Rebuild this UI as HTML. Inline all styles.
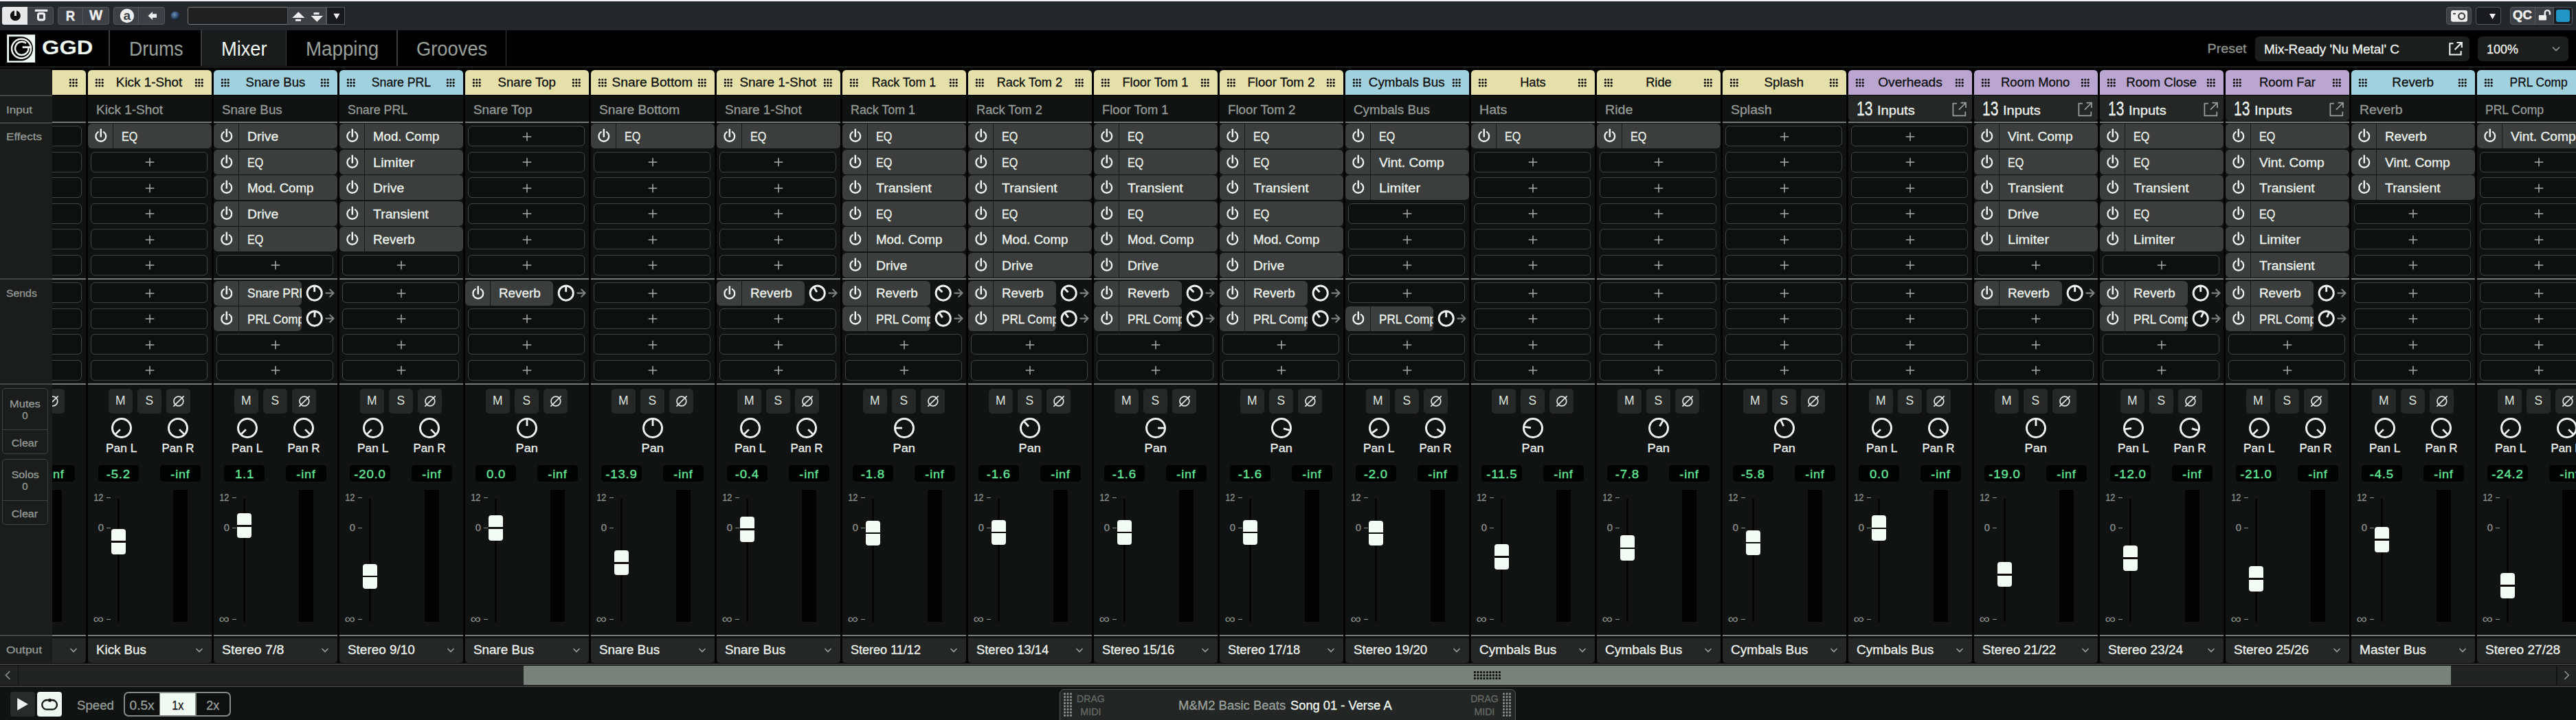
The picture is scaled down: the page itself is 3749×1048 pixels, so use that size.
<!DOCTYPE html><html><head><meta charset="utf-8"><style>
html,body{margin:0;padding:0;background:#000;}
body{width:3749px;height:1048px;position:relative;overflow:hidden;font-family:"Liberation Sans",sans-serif;}
.a{position:absolute;}
.t{position:absolute;white-space:nowrap;}
.m{-webkit-text-stroke:0.3px currentColor;}
</style></head><body>
<div class="a" style="left:0px;top:0px;width:3749px;height:2.2px;background:#f3eff2;"></div>
<div class="a" style="left:0px;top:2.2px;width:3749px;height:41.5px;background:#23272a;"></div>
<div class="a" style="left:0px;top:43.7px;width:3749px;height:52.5px;background:#000;"></div>
<div class="a" style="left:0;top:0;width:3749px;height:1048px;clip-path:inset(96px 0 83px 76px);">
<div class="a" style="left:76px;top:96.2px;width:3673px;height:872.8px;background:#030303;"></div>
<div class="a" style="left:-55.5px;top:138.75px;width:180.5px;height:826px;background:#111312;"></div>
<div class="a" style="left:-55.5px;top:102.2px;width:180.5px;height:36.3px;background:#e5dfa9;border-radius:5.5px 5.5px 0 0;"></div>
<svg class="a" style="left:-55.5px;top:102.2px;" width="180.5" height="36.3" viewBox="0 0 180.5 36.3"><circle cx="12.4" cy="14" r="1.6" fill="#111"/><circle cx="16.8" cy="14" r="1.6" fill="#111"/><circle cx="21.2" cy="14" r="1.6" fill="#111"/><circle cx="12.4" cy="18.4" r="1.6" fill="#111"/><circle cx="16.8" cy="18.4" r="1.6" fill="#111"/><circle cx="21.2" cy="18.4" r="1.6" fill="#111"/><circle cx="12.4" cy="22.8" r="1.6" fill="#111"/><circle cx="16.8" cy="22.8" r="1.6" fill="#111"/><circle cx="21.2" cy="22.8" r="1.6" fill="#111"/><circle cx="157.4" cy="14" r="1.6" fill="#111"/><circle cx="161.8" cy="14" r="1.6" fill="#111"/><circle cx="166.2" cy="14" r="1.6" fill="#111"/><circle cx="157.4" cy="18.4" r="1.6" fill="#111"/><circle cx="161.8" cy="18.4" r="1.6" fill="#111"/><circle cx="166.2" cy="18.4" r="1.6" fill="#111"/><circle cx="157.4" cy="22.8" r="1.6" fill="#111"/><circle cx="161.8" cy="22.8" r="1.6" fill="#111"/><circle cx="166.2" cy="22.8" r="1.6" fill="#111"/></svg>
<div class="t m" style="left:17.12px;top:110.51px;font-size:18.4px;line-height:18.4px;color:#0d0f0e;transform:scaleX(0.9917);transform-origin:17.38px 0;">Kick</div>
<div class="t m" style="left:-43px;top:151.7px;font-size:17.7px;line-height:17.7px;color:#959b97;transform:scaleX(1.1197);transform-origin:0 0;">Kick</div>
<div class="a" style="left:-55.5px;top:177px;width:180.5px;height:2.25px;background:#737a75;"></div>
<div class="a" style="left:-50.8px;top:183.35px;width:170.2px;height:30px;background:#0e100f;border-radius:6px;box-sizing:border-box;border:1.8px solid #404543;"></div>
<svg class="a" style="left:24.5px;top:188.75px;" width="20" height="20" viewBox="0 0 20 20"><path d="M10 3.7 V16.3 M3.7 10 H16.3" stroke="#a7aca8" stroke-width="1.5"/></svg>
<div class="a" style="left:-50.8px;top:220.85px;width:170.2px;height:30px;background:#0e100f;border-radius:6px;box-sizing:border-box;border:1.8px solid #404543;"></div>
<svg class="a" style="left:24.5px;top:226.25px;" width="20" height="20" viewBox="0 0 20 20"><path d="M10 3.7 V16.3 M3.7 10 H16.3" stroke="#a7aca8" stroke-width="1.5"/></svg>
<div class="a" style="left:-50.8px;top:258.35px;width:170.2px;height:30px;background:#0e100f;border-radius:6px;box-sizing:border-box;border:1.8px solid #404543;"></div>
<svg class="a" style="left:24.5px;top:263.75px;" width="20" height="20" viewBox="0 0 20 20"><path d="M10 3.7 V16.3 M3.7 10 H16.3" stroke="#a7aca8" stroke-width="1.5"/></svg>
<div class="a" style="left:-50.8px;top:295.85px;width:170.2px;height:30px;background:#0e100f;border-radius:6px;box-sizing:border-box;border:1.8px solid #404543;"></div>
<svg class="a" style="left:24.5px;top:301.25px;" width="20" height="20" viewBox="0 0 20 20"><path d="M10 3.7 V16.3 M3.7 10 H16.3" stroke="#a7aca8" stroke-width="1.5"/></svg>
<div class="a" style="left:-50.8px;top:333.35px;width:170.2px;height:30px;background:#0e100f;border-radius:6px;box-sizing:border-box;border:1.8px solid #404543;"></div>
<svg class="a" style="left:24.5px;top:338.75px;" width="20" height="20" viewBox="0 0 20 20"><path d="M10 3.7 V16.3 M3.7 10 H16.3" stroke="#a7aca8" stroke-width="1.5"/></svg>
<div class="a" style="left:-50.8px;top:370.85px;width:170.2px;height:30px;background:#0e100f;border-radius:6px;box-sizing:border-box;border:1.8px solid #404543;"></div>
<svg class="a" style="left:24.5px;top:376.25px;" width="20" height="20" viewBox="0 0 20 20"><path d="M10 3.7 V16.3 M3.7 10 H16.3" stroke="#a7aca8" stroke-width="1.5"/></svg>
<div class="a" style="left:-55.5px;top:405px;width:180.5px;height:2.1px;background:#737a75;"></div>
<div class="a" style="left:-50.8px;top:411.35px;width:170.2px;height:30px;background:#0e100f;border-radius:6px;box-sizing:border-box;border:1.8px solid #404543;"></div>
<svg class="a" style="left:24.5px;top:416.75px;" width="20" height="20" viewBox="0 0 20 20"><path d="M10 3.7 V16.3 M3.7 10 H16.3" stroke="#a7aca8" stroke-width="1.5"/></svg>
<div class="a" style="left:-50.8px;top:448.85px;width:170.2px;height:30px;background:#0e100f;border-radius:6px;box-sizing:border-box;border:1.8px solid #404543;"></div>
<svg class="a" style="left:24.5px;top:454.25px;" width="20" height="20" viewBox="0 0 20 20"><path d="M10 3.7 V16.3 M3.7 10 H16.3" stroke="#a7aca8" stroke-width="1.5"/></svg>
<div class="a" style="left:-50.8px;top:486.35px;width:170.2px;height:30px;background:#0e100f;border-radius:6px;box-sizing:border-box;border:1.8px solid #404543;"></div>
<svg class="a" style="left:24.5px;top:491.75px;" width="20" height="20" viewBox="0 0 20 20"><path d="M10 3.7 V16.3 M3.7 10 H16.3" stroke="#a7aca8" stroke-width="1.5"/></svg>
<div class="a" style="left:-50.8px;top:523.85px;width:170.2px;height:30px;background:#0e100f;border-radius:6px;box-sizing:border-box;border:1.8px solid #404543;"></div>
<svg class="a" style="left:24.5px;top:529.25px;" width="20" height="20" viewBox="0 0 20 20"><path d="M10 3.7 V16.3 M3.7 10 H16.3" stroke="#a7aca8" stroke-width="1.5"/></svg>
<div class="a" style="left:-55.5px;top:558px;width:180.5px;height:2.1px;background:#737a75;"></div>
<div class="a" style="left:-25.5px;top:566px;width:35.5px;height:35.5px;background:#262827;border-radius:5px;"></div>
<div class="a" style="left:16.5px;top:566px;width:35.5px;height:35.5px;background:#262827;border-radius:5px;"></div>
<div class="a" style="left:58.7px;top:566px;width:35.5px;height:35.5px;background:#262827;border-radius:5px;"></div>
<div class="t" style="left:-15.04px;top:574.57px;font-size:17.5px;line-height:17.5px;color:#dde3de;">M</div>
<div class="t" style="left:28.51px;top:574.57px;font-size:17.5px;line-height:17.5px;color:#dde3de;">S</div>
<svg class="a" style="left:58.7px;top:566px;" width="35.5" height="35.5" viewBox="0 0 35.5 35.5"><circle cx="17.9" cy="18" r="6.9" fill="none" stroke="#dde3de" stroke-width="1.7"/><line x1="10.4" y1="25.6" x2="25.7" y2="10.3" stroke="#dde3de" stroke-width="1.7"/></svg>
<svg class="a" style="left:17.5px;top:605.9px;" width="34" height="34" viewBox="0 0 34 34"><circle cx="17" cy="17" r="13.5" fill="none" stroke="#eef3ef" stroke-width="3"/><line x1="17" y1="14" x2="17" y2="4.8" stroke="#eef3ef" stroke-width="2.8"/></svg>
<div class="t m" style="left:19.73px;top:644.53px;font-size:16.6px;line-height:16.6px;color:#eef3ef;transform:scaleX(1.0949);transform-origin:14.77px 0;">Pan</div>
<div class="a" style="left:-40.5px;top:677px;width:59.8px;height:23.8px;background:#010202;border-radius:5px;"></div>
<div class="a" style="left:49.5px;top:677px;width:59.8px;height:23.8px;background:#010202;border-radius:5px;"></div>
<div class="t m" style="left:-23.67px;top:681.82px;font-size:17.2px;line-height:17.2px;color:#64ec9a;letter-spacing:0.75px;transform:scaleX(1.0800);transform-origin:13.07px 0;">-inf</div>
<div class="t m" style="left:66.33px;top:681.82px;font-size:17.2px;line-height:17.2px;color:#64ec9a;letter-spacing:0.75px;transform:scaleX(1.0500);transform-origin:13.07px 0;">-inf</div>
<div class="t m" style="left:-48.56px;top:717.16px;font-size:14.8px;line-height:14.8px;color:#8b918d;transform:scaleX(0.8687);transform-origin:16.46px 0;">12</div>
<div class="t m" style="left:-40.33px;top:760.86px;font-size:14.8px;line-height:14.8px;color:#8b918d;">0</div>
<div class="t" style="left:-44.53px;top:892.35px;font-size:18px;line-height:18px;color:#8b918d;transform:scaleX(1.1923);transform-origin:12.83px 0;">∞</div>
<div class="a" style="left:-28.5px;top:723.85px;width:6px;height:1.5px;background:#8b918d;"></div>
<div class="a" style="left:-28.5px;top:767.55px;width:6px;height:1.5px;background:#8b918d;"></div>
<div class="a" style="left:-28.5px;top:900.85px;width:6px;height:1.5px;background:#8b918d;"></div>
<div class="a" style="left:-12.2px;top:726px;width:3px;height:178.5px;background:#050505;"></div>
<div class="a" style="left:69.2px;top:713px;width:20.9px;height:191.5px;background:#030303;"></div>
<div class="a" style="left:-20.9px;top:781.4px;width:20.7px;height:36.8px;background:#f2fbf4;border-radius:4px;"></div>
<div class="a" style="left:-20.9px;top:798.7px;width:20.7px;height:2.6px;background:#0c0d0c;"></div>
<div class="a" style="left:-55.5px;top:924.3px;width:180.5px;height:2.1px;background:#737a75;"></div>
<div class="a" style="left:-55.5px;top:928.8px;width:180.5px;height:36px;background:#252726;border-radius:0 0 6px 6px;"></div>
<svg class="a" style="left:98.5px;top:939px;" width="16" height="14" viewBox="0 0 16 14"><path d="M3.4 5 L8 9.6 L12.6 5" fill="none" stroke="#9ba19d" stroke-width="1.6"/></svg>
<div class="a" style="left:127.5px;top:138.75px;width:180.5px;height:826px;background:#111312;"></div>
<div class="a" style="left:127.5px;top:102.2px;width:180.5px;height:36.3px;background:#e5dfa9;border-radius:5.5px 5.5px 0 0;"></div>
<svg class="a" style="left:127.5px;top:102.2px;" width="180.5" height="36.3" viewBox="0 0 180.5 36.3"><circle cx="12.4" cy="14" r="1.6" fill="#111"/><circle cx="16.8" cy="14" r="1.6" fill="#111"/><circle cx="21.2" cy="14" r="1.6" fill="#111"/><circle cx="12.4" cy="18.4" r="1.6" fill="#111"/><circle cx="16.8" cy="18.4" r="1.6" fill="#111"/><circle cx="21.2" cy="18.4" r="1.6" fill="#111"/><circle cx="12.4" cy="22.8" r="1.6" fill="#111"/><circle cx="16.8" cy="22.8" r="1.6" fill="#111"/><circle cx="21.2" cy="22.8" r="1.6" fill="#111"/><circle cx="157.4" cy="14" r="1.6" fill="#111"/><circle cx="161.8" cy="14" r="1.6" fill="#111"/><circle cx="166.2" cy="14" r="1.6" fill="#111"/><circle cx="157.4" cy="18.4" r="1.6" fill="#111"/><circle cx="161.8" cy="18.4" r="1.6" fill="#111"/><circle cx="166.2" cy="18.4" r="1.6" fill="#111"/><circle cx="157.4" cy="22.8" r="1.6" fill="#111"/><circle cx="161.8" cy="22.8" r="1.6" fill="#111"/><circle cx="166.2" cy="22.8" r="1.6" fill="#111"/></svg>
<div class="t m" style="left:170.46px;top:110.51px;font-size:18.4px;line-height:18.4px;color:#0d0f0e;transform:scaleX(1.0251);transform-origin:47.04px 0;">Kick 1-Shot</div>
<div class="t m" style="left:140px;top:151.7px;font-size:17.7px;line-height:17.7px;color:#959b97;transform:scaleX(1.0736);transform-origin:0 0;">Kick 1-Shot</div>
<div class="a" style="left:127.5px;top:177px;width:180.5px;height:2.25px;background:#737a75;"></div>
<div class="a" style="left:127.5px;top:180.4px;width:180.5px;height:36.1px;background:#3b3e3c;border-radius:6px;"></div>
<div class="a" style="left:164.1px;top:180.4px;width:1.3px;height:36.1px;background:#171918;"></div>
<svg class="a" style="left:127.5px;top:180.4px;" width="36" height="36" viewBox="0 0 36 36"><path d="M14.77 12.14 A7.4 7.4 0 1 0 22.83 12.14" fill="none" stroke="#eef3ef" stroke-width="2.3" stroke-linecap="round"/><line x1="18.8" y1="7.55" x2="18.8" y2="19.65" stroke="#eef3ef" stroke-width="2.5" stroke-linecap="butt"/></svg>
<div class="t m" style="left:177px;top:191.04px;font-size:17.6px;line-height:17.6px;color:#eef3ef;transform:scaleX(0.9157);transform-origin:0 0;">EQ</div>
<div class="a" style="left:132.2px;top:220.85px;width:170.2px;height:30px;background:#0e100f;border-radius:6px;box-sizing:border-box;border:1.8px solid #404543;"></div>
<svg class="a" style="left:207.5px;top:226.25px;" width="20" height="20" viewBox="0 0 20 20"><path d="M10 3.7 V16.3 M3.7 10 H16.3" stroke="#a7aca8" stroke-width="1.5"/></svg>
<div class="a" style="left:132.2px;top:258.35px;width:170.2px;height:30px;background:#0e100f;border-radius:6px;box-sizing:border-box;border:1.8px solid #404543;"></div>
<svg class="a" style="left:207.5px;top:263.75px;" width="20" height="20" viewBox="0 0 20 20"><path d="M10 3.7 V16.3 M3.7 10 H16.3" stroke="#a7aca8" stroke-width="1.5"/></svg>
<div class="a" style="left:132.2px;top:295.85px;width:170.2px;height:30px;background:#0e100f;border-radius:6px;box-sizing:border-box;border:1.8px solid #404543;"></div>
<svg class="a" style="left:207.5px;top:301.25px;" width="20" height="20" viewBox="0 0 20 20"><path d="M10 3.7 V16.3 M3.7 10 H16.3" stroke="#a7aca8" stroke-width="1.5"/></svg>
<div class="a" style="left:132.2px;top:333.35px;width:170.2px;height:30px;background:#0e100f;border-radius:6px;box-sizing:border-box;border:1.8px solid #404543;"></div>
<svg class="a" style="left:207.5px;top:338.75px;" width="20" height="20" viewBox="0 0 20 20"><path d="M10 3.7 V16.3 M3.7 10 H16.3" stroke="#a7aca8" stroke-width="1.5"/></svg>
<div class="a" style="left:132.2px;top:370.85px;width:170.2px;height:30px;background:#0e100f;border-radius:6px;box-sizing:border-box;border:1.8px solid #404543;"></div>
<svg class="a" style="left:207.5px;top:376.25px;" width="20" height="20" viewBox="0 0 20 20"><path d="M10 3.7 V16.3 M3.7 10 H16.3" stroke="#a7aca8" stroke-width="1.5"/></svg>
<div class="a" style="left:127.5px;top:405px;width:180.5px;height:2.1px;background:#737a75;"></div>
<div class="a" style="left:132.2px;top:411.35px;width:170.2px;height:30px;background:#0e100f;border-radius:6px;box-sizing:border-box;border:1.8px solid #404543;"></div>
<svg class="a" style="left:207.5px;top:416.75px;" width="20" height="20" viewBox="0 0 20 20"><path d="M10 3.7 V16.3 M3.7 10 H16.3" stroke="#a7aca8" stroke-width="1.5"/></svg>
<div class="a" style="left:132.2px;top:448.85px;width:170.2px;height:30px;background:#0e100f;border-radius:6px;box-sizing:border-box;border:1.8px solid #404543;"></div>
<svg class="a" style="left:207.5px;top:454.25px;" width="20" height="20" viewBox="0 0 20 20"><path d="M10 3.7 V16.3 M3.7 10 H16.3" stroke="#a7aca8" stroke-width="1.5"/></svg>
<div class="a" style="left:132.2px;top:486.35px;width:170.2px;height:30px;background:#0e100f;border-radius:6px;box-sizing:border-box;border:1.8px solid #404543;"></div>
<svg class="a" style="left:207.5px;top:491.75px;" width="20" height="20" viewBox="0 0 20 20"><path d="M10 3.7 V16.3 M3.7 10 H16.3" stroke="#a7aca8" stroke-width="1.5"/></svg>
<div class="a" style="left:132.2px;top:523.85px;width:170.2px;height:30px;background:#0e100f;border-radius:6px;box-sizing:border-box;border:1.8px solid #404543;"></div>
<svg class="a" style="left:207.5px;top:529.25px;" width="20" height="20" viewBox="0 0 20 20"><path d="M10 3.7 V16.3 M3.7 10 H16.3" stroke="#a7aca8" stroke-width="1.5"/></svg>
<div class="a" style="left:127.5px;top:558px;width:180.5px;height:2.1px;background:#737a75;"></div>
<div class="a" style="left:157.5px;top:566px;width:35.5px;height:35.5px;background:#262827;border-radius:5px;"></div>
<div class="a" style="left:199.5px;top:566px;width:35.5px;height:35.5px;background:#262827;border-radius:5px;"></div>
<div class="a" style="left:241.7px;top:566px;width:35.5px;height:35.5px;background:#262827;border-radius:5px;"></div>
<div class="t" style="left:167.96px;top:574.57px;font-size:17.5px;line-height:17.5px;color:#dde3de;">M</div>
<div class="t" style="left:211.51px;top:574.57px;font-size:17.5px;line-height:17.5px;color:#dde3de;">S</div>
<svg class="a" style="left:241.7px;top:566px;" width="35.5" height="35.5" viewBox="0 0 35.5 35.5"><circle cx="17.9" cy="18" r="6.9" fill="none" stroke="#dde3de" stroke-width="1.7"/><line x1="10.4" y1="25.6" x2="25.7" y2="10.3" stroke="#dde3de" stroke-width="1.7"/></svg>
<svg class="a" style="left:160px;top:605.9px;" width="34" height="34" viewBox="0 0 34 34"><circle cx="17" cy="17" r="13.5" fill="none" stroke="#eef3ef" stroke-width="3"/><line x1="14.88" y1="19.12" x2="8.37" y2="25.63" stroke="#eef3ef" stroke-width="2.8"/></svg>
<div class="t m" style="left:155.31px;top:644.53px;font-size:16.6px;line-height:16.6px;color:#eef3ef;transform:scaleX(1.0438);transform-origin:21.69px 0;">Pan L</div>
<svg class="a" style="left:242.2px;top:605.9px;" width="34" height="34" viewBox="0 0 34 34"><circle cx="17" cy="17" r="13.5" fill="none" stroke="#eef3ef" stroke-width="3"/><line x1="19.12" y1="19.12" x2="25.63" y2="25.63" stroke="#eef3ef" stroke-width="2.8"/></svg>
<div class="t m" style="left:236.13px;top:644.53px;font-size:16.6px;line-height:16.6px;color:#eef3ef;transform:scaleX(1.0195);transform-origin:23.07px 0;">Pan R</div>
<div class="a" style="left:142.5px;top:677px;width:59.8px;height:23.8px;background:#010202;border-radius:5px;"></div>
<div class="a" style="left:232.5px;top:677px;width:59.8px;height:23.8px;background:#010202;border-radius:5px;"></div>
<div class="t m" style="left:156.46px;top:681.82px;font-size:17.2px;line-height:17.2px;color:#64ec9a;letter-spacing:0.75px;transform:scaleX(1.0800);transform-origin:15.94px 0;">-5.2</div>
<div class="t m" style="left:249.33px;top:681.82px;font-size:17.2px;line-height:17.2px;color:#64ec9a;letter-spacing:0.75px;transform:scaleX(1.0500);transform-origin:13.07px 0;">-inf</div>
<div class="t m" style="left:134.44px;top:717.16px;font-size:14.8px;line-height:14.8px;color:#8b918d;transform:scaleX(0.8687);transform-origin:16.46px 0;">12</div>
<div class="t m" style="left:142.67px;top:760.86px;font-size:14.8px;line-height:14.8px;color:#8b918d;">0</div>
<div class="t" style="left:138.47px;top:892.35px;font-size:18px;line-height:18px;color:#8b918d;transform:scaleX(1.1923);transform-origin:12.83px 0;">∞</div>
<div class="a" style="left:154.5px;top:723.85px;width:6px;height:1.5px;background:#8b918d;"></div>
<div class="a" style="left:154.5px;top:767.55px;width:6px;height:1.5px;background:#8b918d;"></div>
<div class="a" style="left:154.5px;top:900.85px;width:6px;height:1.5px;background:#8b918d;"></div>
<div class="a" style="left:170.8px;top:726px;width:3px;height:178.5px;background:#050505;"></div>
<div class="a" style="left:252.2px;top:713px;width:20.9px;height:191.5px;background:#030303;"></div>
<div class="a" style="left:162.1px;top:769.9px;width:20.7px;height:36.8px;background:#f2fbf4;border-radius:4px;"></div>
<div class="a" style="left:162.1px;top:787.2px;width:20.7px;height:2.6px;background:#0c0d0c;"></div>
<div class="a" style="left:127.5px;top:924.3px;width:180.5px;height:2.1px;background:#737a75;"></div>
<div class="a" style="left:127.5px;top:928.8px;width:180.5px;height:36px;background:#252726;border-radius:0 0 6px 6px;"></div>
<div class="t m" style="left:139.8px;top:936.64px;font-size:18.6px;line-height:18.6px;color:#eef3ef;transform:scaleX(1.0065);transform-origin:0 0;">Kick Bus</div>
<svg class="a" style="left:281.5px;top:939px;" width="16" height="14" viewBox="0 0 16 14"><path d="M3.4 5 L8 9.6 L12.6 5" fill="none" stroke="#9ba19d" stroke-width="1.6"/></svg>
<div class="a" style="left:310.5px;top:138.75px;width:180.5px;height:826px;background:#111312;"></div>
<div class="a" style="left:310.5px;top:102.2px;width:180.5px;height:36.3px;background:#a1d0df;border-radius:5.5px 5.5px 0 0;"></div>
<svg class="a" style="left:310.5px;top:102.2px;" width="180.5" height="36.3" viewBox="0 0 180.5 36.3"><circle cx="12.4" cy="14" r="1.6" fill="#111"/><circle cx="16.8" cy="14" r="1.6" fill="#111"/><circle cx="21.2" cy="14" r="1.6" fill="#111"/><circle cx="12.4" cy="18.4" r="1.6" fill="#111"/><circle cx="16.8" cy="18.4" r="1.6" fill="#111"/><circle cx="21.2" cy="18.4" r="1.6" fill="#111"/><circle cx="12.4" cy="22.8" r="1.6" fill="#111"/><circle cx="16.8" cy="22.8" r="1.6" fill="#111"/><circle cx="21.2" cy="22.8" r="1.6" fill="#111"/><circle cx="157.4" cy="14" r="1.6" fill="#111"/><circle cx="161.8" cy="14" r="1.6" fill="#111"/><circle cx="166.2" cy="14" r="1.6" fill="#111"/><circle cx="157.4" cy="18.4" r="1.6" fill="#111"/><circle cx="161.8" cy="18.4" r="1.6" fill="#111"/><circle cx="166.2" cy="18.4" r="1.6" fill="#111"/><circle cx="157.4" cy="22.8" r="1.6" fill="#111"/><circle cx="161.8" cy="22.8" r="1.6" fill="#111"/><circle cx="166.2" cy="22.8" r="1.6" fill="#111"/></svg>
<div class="t m" style="left:357.54px;top:110.51px;font-size:18.4px;line-height:18.4px;color:#0d0f0e;transform:scaleX(1.0098);transform-origin:42.96px 0;">Snare Bus</div>
<div class="t m" style="left:323px;top:151.7px;font-size:17.7px;line-height:17.7px;color:#959b97;transform:scaleX(1.0622);transform-origin:0 0;">Snare Bus</div>
<div class="a" style="left:310.5px;top:177px;width:180.5px;height:2.25px;background:#737a75;"></div>
<div class="a" style="left:310.5px;top:180.4px;width:180.5px;height:36.1px;background:#3b3e3c;border-radius:6px;"></div>
<div class="a" style="left:347.1px;top:180.4px;width:1.3px;height:36.1px;background:#171918;"></div>
<svg class="a" style="left:310.5px;top:180.4px;" width="36" height="36" viewBox="0 0 36 36"><path d="M14.77 12.14 A7.4 7.4 0 1 0 22.83 12.14" fill="none" stroke="#eef3ef" stroke-width="2.3" stroke-linecap="round"/><line x1="18.8" y1="7.55" x2="18.8" y2="19.65" stroke="#eef3ef" stroke-width="2.5" stroke-linecap="butt"/></svg>
<div class="t m" style="left:360px;top:191.04px;font-size:17.6px;line-height:17.6px;color:#eef3ef;transform:scaleX(1.0998);transform-origin:0 0;">Drive</div>
<div class="a" style="left:310.5px;top:217.9px;width:180.5px;height:36.1px;background:#3b3e3c;border-radius:6px;"></div>
<div class="a" style="left:347.1px;top:217.9px;width:1.3px;height:36.1px;background:#171918;"></div>
<svg class="a" style="left:310.5px;top:217.9px;" width="36" height="36" viewBox="0 0 36 36"><path d="M14.77 12.14 A7.4 7.4 0 1 0 22.83 12.14" fill="none" stroke="#eef3ef" stroke-width="2.3" stroke-linecap="round"/><line x1="18.8" y1="7.55" x2="18.8" y2="19.65" stroke="#eef3ef" stroke-width="2.5" stroke-linecap="butt"/></svg>
<div class="t m" style="left:360px;top:228.54px;font-size:17.6px;line-height:17.6px;color:#eef3ef;transform:scaleX(0.9157);transform-origin:0 0;">EQ</div>
<div class="a" style="left:310.5px;top:255.4px;width:180.5px;height:36.1px;background:#3b3e3c;border-radius:6px;"></div>
<div class="a" style="left:347.1px;top:255.4px;width:1.3px;height:36.1px;background:#171918;"></div>
<svg class="a" style="left:310.5px;top:255.4px;" width="36" height="36" viewBox="0 0 36 36"><path d="M14.77 12.14 A7.4 7.4 0 1 0 22.83 12.14" fill="none" stroke="#eef3ef" stroke-width="2.3" stroke-linecap="round"/><line x1="18.8" y1="7.55" x2="18.8" y2="19.65" stroke="#eef3ef" stroke-width="2.5" stroke-linecap="butt"/></svg>
<div class="t m" style="left:360px;top:266.04px;font-size:17.6px;line-height:17.6px;color:#eef3ef;transform:scaleX(1.0599);transform-origin:0 0;">Mod. Comp</div>
<div class="a" style="left:310.5px;top:292.9px;width:180.5px;height:36.1px;background:#3b3e3c;border-radius:6px;"></div>
<div class="a" style="left:347.1px;top:292.9px;width:1.3px;height:36.1px;background:#171918;"></div>
<svg class="a" style="left:310.5px;top:292.9px;" width="36" height="36" viewBox="0 0 36 36"><path d="M14.77 12.14 A7.4 7.4 0 1 0 22.83 12.14" fill="none" stroke="#eef3ef" stroke-width="2.3" stroke-linecap="round"/><line x1="18.8" y1="7.55" x2="18.8" y2="19.65" stroke="#eef3ef" stroke-width="2.5" stroke-linecap="butt"/></svg>
<div class="t m" style="left:360px;top:303.54px;font-size:17.6px;line-height:17.6px;color:#eef3ef;transform:scaleX(1.0998);transform-origin:0 0;">Drive</div>
<div class="a" style="left:310.5px;top:330.4px;width:180.5px;height:36.1px;background:#3b3e3c;border-radius:6px;"></div>
<div class="a" style="left:347.1px;top:330.4px;width:1.3px;height:36.1px;background:#171918;"></div>
<svg class="a" style="left:310.5px;top:330.4px;" width="36" height="36" viewBox="0 0 36 36"><path d="M14.77 12.14 A7.4 7.4 0 1 0 22.83 12.14" fill="none" stroke="#eef3ef" stroke-width="2.3" stroke-linecap="round"/><line x1="18.8" y1="7.55" x2="18.8" y2="19.65" stroke="#eef3ef" stroke-width="2.5" stroke-linecap="butt"/></svg>
<div class="t m" style="left:360px;top:341.04px;font-size:17.6px;line-height:17.6px;color:#eef3ef;transform:scaleX(0.9157);transform-origin:0 0;">EQ</div>
<div class="a" style="left:315.2px;top:370.85px;width:170.2px;height:30px;background:#0e100f;border-radius:6px;box-sizing:border-box;border:1.8px solid #404543;"></div>
<svg class="a" style="left:390.5px;top:376.25px;" width="20" height="20" viewBox="0 0 20 20"><path d="M10 3.7 V16.3 M3.7 10 H16.3" stroke="#a7aca8" stroke-width="1.5"/></svg>
<div class="a" style="left:310.5px;top:405px;width:180.5px;height:2.1px;background:#737a75;"></div>
<div class="a" style="left:310.5px;top:408.75px;width:128.8px;height:35.75px;background:#3b3e3c;border-radius:6px;overflow:hidden;">
<div class="a" style="left:36.6px;top:0;width:1.3px;height:36px;background:#171918"></div>
<svg class="a" style="left:0;top:0" width="36" height="36"><path d="M14.77 11.89 A7.4 7.4 0 1 0 22.83 11.89" fill="none" stroke="#eef3ef" stroke-width="2.3" stroke-linecap="round"/><line x1="18.8" y1="7.3" x2="18.8" y2="19.4" stroke="#eef3ef" stroke-width="2.5" stroke-linecap="butt"/></svg>
<div class="t m" style="left:49.5px;top:10.29px;font-size:17.6px;line-height:17.6px;color:#eef3ef;transform:scaleX(0.9908);transform-origin:0 0;">Snare PRL</div>
</div>
<svg class="a" style="left:441.5px;top:408.75px;" width="50" height="36" viewBox="0 0 50 36"><circle cx="15.7" cy="17.6" r="10.6" fill="none" stroke="#eef3ef" stroke-width="2.9"/><line x1="15.7" y1="15.8" x2="15.7" y2="7.4" stroke="#eef3ef" stroke-width="2.9"/><path d="M32.4 17.6 H43.6 M38.3 12.4 L43.6 17.6 L38.3 22.8" fill="none" stroke="#7d837f" stroke-width="2.1" stroke-linecap="round" stroke-linejoin="round"/></svg>
<div class="a" style="left:310.5px;top:446.25px;width:128.8px;height:35.75px;background:#3b3e3c;border-radius:6px;overflow:hidden;">
<div class="a" style="left:36.6px;top:0;width:1.3px;height:36px;background:#171918"></div>
<svg class="a" style="left:0;top:0" width="36" height="36"><path d="M14.77 11.89 A7.4 7.4 0 1 0 22.83 11.89" fill="none" stroke="#eef3ef" stroke-width="2.3" stroke-linecap="round"/><line x1="18.8" y1="7.3" x2="18.8" y2="19.4" stroke="#eef3ef" stroke-width="2.5" stroke-linecap="butt"/></svg>
<div class="t m" style="left:49.5px;top:10.29px;font-size:17.6px;line-height:17.6px;color:#eef3ef;transform:scaleX(0.9715);transform-origin:0 0;">PRL Comp</div>
</div>
<svg class="a" style="left:441.5px;top:446.25px;" width="50" height="36" viewBox="0 0 50 36"><circle cx="15.7" cy="17.6" r="10.6" fill="none" stroke="#eef3ef" stroke-width="2.9"/><line x1="15.79" y1="15.8" x2="16.23" y2="7.41" stroke="#eef3ef" stroke-width="2.9"/><path d="M32.4 17.6 H43.6 M38.3 12.4 L43.6 17.6 L38.3 22.8" fill="none" stroke="#7d837f" stroke-width="2.1" stroke-linecap="round" stroke-linejoin="round"/></svg>
<div class="a" style="left:315.2px;top:486.35px;width:170.2px;height:30px;background:#0e100f;border-radius:6px;box-sizing:border-box;border:1.8px solid #404543;"></div>
<svg class="a" style="left:390.5px;top:491.75px;" width="20" height="20" viewBox="0 0 20 20"><path d="M10 3.7 V16.3 M3.7 10 H16.3" stroke="#a7aca8" stroke-width="1.5"/></svg>
<div class="a" style="left:315.2px;top:523.85px;width:170.2px;height:30px;background:#0e100f;border-radius:6px;box-sizing:border-box;border:1.8px solid #404543;"></div>
<svg class="a" style="left:390.5px;top:529.25px;" width="20" height="20" viewBox="0 0 20 20"><path d="M10 3.7 V16.3 M3.7 10 H16.3" stroke="#a7aca8" stroke-width="1.5"/></svg>
<div class="a" style="left:310.5px;top:558px;width:180.5px;height:2.1px;background:#737a75;"></div>
<div class="a" style="left:340.5px;top:566px;width:35.5px;height:35.5px;background:#262827;border-radius:5px;"></div>
<div class="a" style="left:382.5px;top:566px;width:35.5px;height:35.5px;background:#262827;border-radius:5px;"></div>
<div class="a" style="left:424.7px;top:566px;width:35.5px;height:35.5px;background:#262827;border-radius:5px;"></div>
<div class="t" style="left:350.96px;top:574.57px;font-size:17.5px;line-height:17.5px;color:#dde3de;">M</div>
<div class="t" style="left:394.51px;top:574.57px;font-size:17.5px;line-height:17.5px;color:#dde3de;">S</div>
<svg class="a" style="left:424.7px;top:566px;" width="35.5" height="35.5" viewBox="0 0 35.5 35.5"><circle cx="17.9" cy="18" r="6.9" fill="none" stroke="#dde3de" stroke-width="1.7"/><line x1="10.4" y1="25.6" x2="25.7" y2="10.3" stroke="#dde3de" stroke-width="1.7"/></svg>
<svg class="a" style="left:343px;top:605.9px;" width="34" height="34" viewBox="0 0 34 34"><circle cx="17" cy="17" r="13.5" fill="none" stroke="#eef3ef" stroke-width="3"/><line x1="14.88" y1="19.12" x2="8.37" y2="25.63" stroke="#eef3ef" stroke-width="2.8"/></svg>
<div class="t m" style="left:338.31px;top:644.53px;font-size:16.6px;line-height:16.6px;color:#eef3ef;transform:scaleX(1.0438);transform-origin:21.69px 0;">Pan L</div>
<svg class="a" style="left:425.2px;top:605.9px;" width="34" height="34" viewBox="0 0 34 34"><circle cx="17" cy="17" r="13.5" fill="none" stroke="#eef3ef" stroke-width="3"/><line x1="19.12" y1="19.12" x2="25.63" y2="25.63" stroke="#eef3ef" stroke-width="2.8"/></svg>
<div class="t m" style="left:419.13px;top:644.53px;font-size:16.6px;line-height:16.6px;color:#eef3ef;transform:scaleX(1.0195);transform-origin:23.07px 0;">Pan R</div>
<div class="a" style="left:325.5px;top:677px;width:59.8px;height:23.8px;background:#010202;border-radius:5px;"></div>
<div class="a" style="left:415.5px;top:677px;width:59.8px;height:23.8px;background:#010202;border-radius:5px;"></div>
<div class="t m" style="left:342.69px;top:681.82px;font-size:17.2px;line-height:17.2px;color:#64ec9a;letter-spacing:0.75px;transform:scaleX(1.0800);transform-origin:12.71px 0;">1.1</div>
<div class="t m" style="left:432.33px;top:681.82px;font-size:17.2px;line-height:17.2px;color:#64ec9a;letter-spacing:0.75px;transform:scaleX(1.0500);transform-origin:13.07px 0;">-inf</div>
<div class="t m" style="left:317.44px;top:717.16px;font-size:14.8px;line-height:14.8px;color:#8b918d;transform:scaleX(0.8687);transform-origin:16.46px 0;">12</div>
<div class="t m" style="left:325.67px;top:760.86px;font-size:14.8px;line-height:14.8px;color:#8b918d;">0</div>
<div class="t" style="left:321.47px;top:892.35px;font-size:18px;line-height:18px;color:#8b918d;transform:scaleX(1.1923);transform-origin:12.83px 0;">∞</div>
<div class="a" style="left:337.5px;top:723.85px;width:6px;height:1.5px;background:#8b918d;"></div>
<div class="a" style="left:337.5px;top:767.55px;width:6px;height:1.5px;background:#8b918d;"></div>
<div class="a" style="left:337.5px;top:900.85px;width:6px;height:1.5px;background:#8b918d;"></div>
<div class="a" style="left:353.8px;top:726px;width:3px;height:178.5px;background:#050505;"></div>
<div class="a" style="left:435.2px;top:713px;width:20.9px;height:191.5px;background:#030303;"></div>
<div class="a" style="left:345.1px;top:746.7px;width:20.7px;height:36.8px;background:#f2fbf4;border-radius:4px;"></div>
<div class="a" style="left:345.1px;top:764px;width:20.7px;height:2.6px;background:#0c0d0c;"></div>
<div class="a" style="left:310.5px;top:924.3px;width:180.5px;height:2.1px;background:#737a75;"></div>
<div class="a" style="left:310.5px;top:928.8px;width:180.5px;height:36px;background:#252726;border-radius:0 0 6px 6px;"></div>
<div class="t m" style="left:322.8px;top:936.64px;font-size:18.6px;line-height:18.6px;color:#eef3ef;transform:scaleX(1.0522);transform-origin:0 0;">Stereo 7/8</div>
<svg class="a" style="left:464.5px;top:939px;" width="16" height="14" viewBox="0 0 16 14"><path d="M3.4 5 L8 9.6 L12.6 5" fill="none" stroke="#9ba19d" stroke-width="1.6"/></svg>
<div class="a" style="left:493.5px;top:138.75px;width:180.5px;height:826px;background:#111312;"></div>
<div class="a" style="left:493.5px;top:102.2px;width:180.5px;height:36.3px;background:#a1d0df;border-radius:5.5px 5.5px 0 0;"></div>
<svg class="a" style="left:493.5px;top:102.2px;" width="180.5" height="36.3" viewBox="0 0 180.5 36.3"><circle cx="12.4" cy="14" r="1.6" fill="#111"/><circle cx="16.8" cy="14" r="1.6" fill="#111"/><circle cx="21.2" cy="14" r="1.6" fill="#111"/><circle cx="12.4" cy="18.4" r="1.6" fill="#111"/><circle cx="16.8" cy="18.4" r="1.6" fill="#111"/><circle cx="21.2" cy="18.4" r="1.6" fill="#111"/><circle cx="12.4" cy="22.8" r="1.6" fill="#111"/><circle cx="16.8" cy="22.8" r="1.6" fill="#111"/><circle cx="21.2" cy="22.8" r="1.6" fill="#111"/><circle cx="157.4" cy="14" r="1.6" fill="#111"/><circle cx="161.8" cy="14" r="1.6" fill="#111"/><circle cx="166.2" cy="14" r="1.6" fill="#111"/><circle cx="157.4" cy="18.4" r="1.6" fill="#111"/><circle cx="161.8" cy="18.4" r="1.6" fill="#111"/><circle cx="166.2" cy="18.4" r="1.6" fill="#111"/><circle cx="157.4" cy="22.8" r="1.6" fill="#111"/><circle cx="161.8" cy="22.8" r="1.6" fill="#111"/><circle cx="166.2" cy="22.8" r="1.6" fill="#111"/></svg>
<div class="t m" style="left:538.5px;top:110.51px;font-size:18.4px;line-height:18.4px;color:#0d0f0e;transform:scaleX(0.9607);transform-origin:45px 0;">Snare PRL</div>
<div class="t m" style="left:506px;top:151.7px;font-size:17.7px;line-height:17.7px;color:#959b97;transform:scaleX(1.0088);transform-origin:0 0;">Snare PRL</div>
<div class="a" style="left:493.5px;top:177px;width:180.5px;height:2.25px;background:#737a75;"></div>
<div class="a" style="left:493.5px;top:180.4px;width:180.5px;height:36.1px;background:#3b3e3c;border-radius:6px;"></div>
<div class="a" style="left:530.1px;top:180.4px;width:1.3px;height:36.1px;background:#171918;"></div>
<svg class="a" style="left:493.5px;top:180.4px;" width="36" height="36" viewBox="0 0 36 36"><path d="M14.77 12.14 A7.4 7.4 0 1 0 22.83 12.14" fill="none" stroke="#eef3ef" stroke-width="2.3" stroke-linecap="round"/><line x1="18.8" y1="7.55" x2="18.8" y2="19.65" stroke="#eef3ef" stroke-width="2.5" stroke-linecap="butt"/></svg>
<div class="t m" style="left:543px;top:191.04px;font-size:17.6px;line-height:17.6px;color:#eef3ef;transform:scaleX(1.0599);transform-origin:0 0;">Mod. Comp</div>
<div class="a" style="left:493.5px;top:217.9px;width:180.5px;height:36.1px;background:#3b3e3c;border-radius:6px;"></div>
<div class="a" style="left:530.1px;top:217.9px;width:1.3px;height:36.1px;background:#171918;"></div>
<svg class="a" style="left:493.5px;top:217.9px;" width="36" height="36" viewBox="0 0 36 36"><path d="M14.77 12.14 A7.4 7.4 0 1 0 22.83 12.14" fill="none" stroke="#eef3ef" stroke-width="2.3" stroke-linecap="round"/><line x1="18.8" y1="7.55" x2="18.8" y2="19.65" stroke="#eef3ef" stroke-width="2.5" stroke-linecap="butt"/></svg>
<div class="t m" style="left:543px;top:228.54px;font-size:17.6px;line-height:17.6px;color:#eef3ef;transform:scaleX(1.1398);transform-origin:0 0;">Limiter</div>
<div class="a" style="left:493.5px;top:255.4px;width:180.5px;height:36.1px;background:#3b3e3c;border-radius:6px;"></div>
<div class="a" style="left:530.1px;top:255.4px;width:1.3px;height:36.1px;background:#171918;"></div>
<svg class="a" style="left:493.5px;top:255.4px;" width="36" height="36" viewBox="0 0 36 36"><path d="M14.77 12.14 A7.4 7.4 0 1 0 22.83 12.14" fill="none" stroke="#eef3ef" stroke-width="2.3" stroke-linecap="round"/><line x1="18.8" y1="7.55" x2="18.8" y2="19.65" stroke="#eef3ef" stroke-width="2.5" stroke-linecap="butt"/></svg>
<div class="t m" style="left:543px;top:266.04px;font-size:17.6px;line-height:17.6px;color:#eef3ef;transform:scaleX(1.0998);transform-origin:0 0;">Drive</div>
<div class="a" style="left:493.5px;top:292.9px;width:180.5px;height:36.1px;background:#3b3e3c;border-radius:6px;"></div>
<div class="a" style="left:530.1px;top:292.9px;width:1.3px;height:36.1px;background:#171918;"></div>
<svg class="a" style="left:493.5px;top:292.9px;" width="36" height="36" viewBox="0 0 36 36"><path d="M14.77 12.14 A7.4 7.4 0 1 0 22.83 12.14" fill="none" stroke="#eef3ef" stroke-width="2.3" stroke-linecap="round"/><line x1="18.8" y1="7.55" x2="18.8" y2="19.65" stroke="#eef3ef" stroke-width="2.5" stroke-linecap="butt"/></svg>
<div class="t m" style="left:543px;top:303.54px;font-size:17.6px;line-height:17.6px;color:#eef3ef;transform:scaleX(1.1107);transform-origin:0 0;">Transient</div>
<div class="a" style="left:493.5px;top:330.4px;width:180.5px;height:36.1px;background:#3b3e3c;border-radius:6px;"></div>
<div class="a" style="left:530.1px;top:330.4px;width:1.3px;height:36.1px;background:#171918;"></div>
<svg class="a" style="left:493.5px;top:330.4px;" width="36" height="36" viewBox="0 0 36 36"><path d="M14.77 12.14 A7.4 7.4 0 1 0 22.83 12.14" fill="none" stroke="#eef3ef" stroke-width="2.3" stroke-linecap="round"/><line x1="18.8" y1="7.55" x2="18.8" y2="19.65" stroke="#eef3ef" stroke-width="2.5" stroke-linecap="butt"/></svg>
<div class="t m" style="left:543px;top:341.04px;font-size:17.6px;line-height:17.6px;color:#eef3ef;transform:scaleX(1.0705);transform-origin:0 0;">Reverb</div>
<div class="a" style="left:498.2px;top:370.85px;width:170.2px;height:30px;background:#0e100f;border-radius:6px;box-sizing:border-box;border:1.8px solid #404543;"></div>
<svg class="a" style="left:573.5px;top:376.25px;" width="20" height="20" viewBox="0 0 20 20"><path d="M10 3.7 V16.3 M3.7 10 H16.3" stroke="#a7aca8" stroke-width="1.5"/></svg>
<div class="a" style="left:493.5px;top:405px;width:180.5px;height:2.1px;background:#737a75;"></div>
<div class="a" style="left:498.2px;top:411.35px;width:170.2px;height:30px;background:#0e100f;border-radius:6px;box-sizing:border-box;border:1.8px solid #404543;"></div>
<svg class="a" style="left:573.5px;top:416.75px;" width="20" height="20" viewBox="0 0 20 20"><path d="M10 3.7 V16.3 M3.7 10 H16.3" stroke="#a7aca8" stroke-width="1.5"/></svg>
<div class="a" style="left:498.2px;top:448.85px;width:170.2px;height:30px;background:#0e100f;border-radius:6px;box-sizing:border-box;border:1.8px solid #404543;"></div>
<svg class="a" style="left:573.5px;top:454.25px;" width="20" height="20" viewBox="0 0 20 20"><path d="M10 3.7 V16.3 M3.7 10 H16.3" stroke="#a7aca8" stroke-width="1.5"/></svg>
<div class="a" style="left:498.2px;top:486.35px;width:170.2px;height:30px;background:#0e100f;border-radius:6px;box-sizing:border-box;border:1.8px solid #404543;"></div>
<svg class="a" style="left:573.5px;top:491.75px;" width="20" height="20" viewBox="0 0 20 20"><path d="M10 3.7 V16.3 M3.7 10 H16.3" stroke="#a7aca8" stroke-width="1.5"/></svg>
<div class="a" style="left:498.2px;top:523.85px;width:170.2px;height:30px;background:#0e100f;border-radius:6px;box-sizing:border-box;border:1.8px solid #404543;"></div>
<svg class="a" style="left:573.5px;top:529.25px;" width="20" height="20" viewBox="0 0 20 20"><path d="M10 3.7 V16.3 M3.7 10 H16.3" stroke="#a7aca8" stroke-width="1.5"/></svg>
<div class="a" style="left:493.5px;top:558px;width:180.5px;height:2.1px;background:#737a75;"></div>
<div class="a" style="left:523.5px;top:566px;width:35.5px;height:35.5px;background:#262827;border-radius:5px;"></div>
<div class="a" style="left:565.5px;top:566px;width:35.5px;height:35.5px;background:#262827;border-radius:5px;"></div>
<div class="a" style="left:607.7px;top:566px;width:35.5px;height:35.5px;background:#262827;border-radius:5px;"></div>
<div class="t" style="left:533.96px;top:574.57px;font-size:17.5px;line-height:17.5px;color:#dde3de;">M</div>
<div class="t" style="left:577.51px;top:574.57px;font-size:17.5px;line-height:17.5px;color:#dde3de;">S</div>
<svg class="a" style="left:607.7px;top:566px;" width="35.5" height="35.5" viewBox="0 0 35.5 35.5"><circle cx="17.9" cy="18" r="6.9" fill="none" stroke="#dde3de" stroke-width="1.7"/><line x1="10.4" y1="25.6" x2="25.7" y2="10.3" stroke="#dde3de" stroke-width="1.7"/></svg>
<svg class="a" style="left:526px;top:605.9px;" width="34" height="34" viewBox="0 0 34 34"><circle cx="17" cy="17" r="13.5" fill="none" stroke="#eef3ef" stroke-width="3"/><line x1="14.88" y1="19.12" x2="8.37" y2="25.63" stroke="#eef3ef" stroke-width="2.8"/></svg>
<div class="t m" style="left:521.31px;top:644.53px;font-size:16.6px;line-height:16.6px;color:#eef3ef;transform:scaleX(1.0438);transform-origin:21.69px 0;">Pan L</div>
<svg class="a" style="left:608.2px;top:605.9px;" width="34" height="34" viewBox="0 0 34 34"><circle cx="17" cy="17" r="13.5" fill="none" stroke="#eef3ef" stroke-width="3"/><line x1="19.12" y1="19.12" x2="25.63" y2="25.63" stroke="#eef3ef" stroke-width="2.8"/></svg>
<div class="t m" style="left:602.13px;top:644.53px;font-size:16.6px;line-height:16.6px;color:#eef3ef;transform:scaleX(1.0195);transform-origin:23.07px 0;">Pan R</div>
<div class="a" style="left:508.5px;top:677px;width:59.8px;height:23.8px;background:#010202;border-radius:5px;"></div>
<div class="a" style="left:598.5px;top:677px;width:59.8px;height:23.8px;background:#010202;border-radius:5px;"></div>
<div class="t m" style="left:517.3px;top:681.82px;font-size:17.2px;line-height:17.2px;color:#64ec9a;letter-spacing:0.75px;transform:scaleX(1.0800);transform-origin:21.1px 0;">-20.0</div>
<div class="t m" style="left:615.33px;top:681.82px;font-size:17.2px;line-height:17.2px;color:#64ec9a;letter-spacing:0.75px;transform:scaleX(1.0500);transform-origin:13.07px 0;">-inf</div>
<div class="t m" style="left:500.44px;top:717.16px;font-size:14.8px;line-height:14.8px;color:#8b918d;transform:scaleX(0.8687);transform-origin:16.46px 0;">12</div>
<div class="t m" style="left:508.67px;top:760.86px;font-size:14.8px;line-height:14.8px;color:#8b918d;">0</div>
<div class="t" style="left:504.47px;top:892.35px;font-size:18px;line-height:18px;color:#8b918d;transform:scaleX(1.1923);transform-origin:12.83px 0;">∞</div>
<div class="a" style="left:520.5px;top:723.85px;width:6px;height:1.5px;background:#8b918d;"></div>
<div class="a" style="left:520.5px;top:767.55px;width:6px;height:1.5px;background:#8b918d;"></div>
<div class="a" style="left:520.5px;top:900.85px;width:6px;height:1.5px;background:#8b918d;"></div>
<div class="a" style="left:536.8px;top:726px;width:3px;height:178.5px;background:#050505;"></div>
<div class="a" style="left:618.2px;top:713px;width:20.9px;height:191.5px;background:#030303;"></div>
<div class="a" style="left:528.1px;top:820.6px;width:20.7px;height:36.8px;background:#f2fbf4;border-radius:4px;"></div>
<div class="a" style="left:528.1px;top:837.9px;width:20.7px;height:2.6px;background:#0c0d0c;"></div>
<div class="a" style="left:493.5px;top:924.3px;width:180.5px;height:2.1px;background:#737a75;"></div>
<div class="a" style="left:493.5px;top:928.8px;width:180.5px;height:36px;background:#252726;border-radius:0 0 6px 6px;"></div>
<div class="t m" style="left:505.8px;top:936.64px;font-size:18.6px;line-height:18.6px;color:#eef3ef;transform:scaleX(1.0169);transform-origin:0 0;">Stereo 9/10</div>
<svg class="a" style="left:647.5px;top:939px;" width="16" height="14" viewBox="0 0 16 14"><path d="M3.4 5 L8 9.6 L12.6 5" fill="none" stroke="#9ba19d" stroke-width="1.6"/></svg>
<div class="a" style="left:676.5px;top:138.75px;width:180.5px;height:826px;background:#111312;"></div>
<div class="a" style="left:676.5px;top:102.2px;width:180.5px;height:36.3px;background:#e5dfa9;border-radius:5.5px 5.5px 0 0;"></div>
<svg class="a" style="left:676.5px;top:102.2px;" width="180.5" height="36.3" viewBox="0 0 180.5 36.3"><circle cx="12.4" cy="14" r="1.6" fill="#111"/><circle cx="16.8" cy="14" r="1.6" fill="#111"/><circle cx="21.2" cy="14" r="1.6" fill="#111"/><circle cx="12.4" cy="18.4" r="1.6" fill="#111"/><circle cx="16.8" cy="18.4" r="1.6" fill="#111"/><circle cx="21.2" cy="18.4" r="1.6" fill="#111"/><circle cx="12.4" cy="22.8" r="1.6" fill="#111"/><circle cx="16.8" cy="22.8" r="1.6" fill="#111"/><circle cx="21.2" cy="22.8" r="1.6" fill="#111"/><circle cx="157.4" cy="14" r="1.6" fill="#111"/><circle cx="161.8" cy="14" r="1.6" fill="#111"/><circle cx="166.2" cy="14" r="1.6" fill="#111"/><circle cx="157.4" cy="18.4" r="1.6" fill="#111"/><circle cx="161.8" cy="18.4" r="1.6" fill="#111"/><circle cx="166.2" cy="18.4" r="1.6" fill="#111"/><circle cx="157.4" cy="22.8" r="1.6" fill="#111"/><circle cx="161.8" cy="22.8" r="1.6" fill="#111"/><circle cx="166.2" cy="22.8" r="1.6" fill="#111"/></svg>
<div class="t m" style="left:724.73px;top:110.51px;font-size:18.4px;line-height:18.4px;color:#0d0f0e;transform:scaleX(1.0101);transform-origin:41.77px 0;">Snare Top</div>
<div class="t m" style="left:689px;top:151.7px;font-size:17.7px;line-height:17.7px;color:#959b97;transform:scaleX(1.0639);transform-origin:0 0;">Snare Top</div>
<div class="a" style="left:676.5px;top:177px;width:180.5px;height:2.25px;background:#737a75;"></div>
<div class="a" style="left:681.2px;top:183.35px;width:170.2px;height:30px;background:#0e100f;border-radius:6px;box-sizing:border-box;border:1.8px solid #404543;"></div>
<svg class="a" style="left:756.5px;top:188.75px;" width="20" height="20" viewBox="0 0 20 20"><path d="M10 3.7 V16.3 M3.7 10 H16.3" stroke="#a7aca8" stroke-width="1.5"/></svg>
<div class="a" style="left:681.2px;top:220.85px;width:170.2px;height:30px;background:#0e100f;border-radius:6px;box-sizing:border-box;border:1.8px solid #404543;"></div>
<svg class="a" style="left:756.5px;top:226.25px;" width="20" height="20" viewBox="0 0 20 20"><path d="M10 3.7 V16.3 M3.7 10 H16.3" stroke="#a7aca8" stroke-width="1.5"/></svg>
<div class="a" style="left:681.2px;top:258.35px;width:170.2px;height:30px;background:#0e100f;border-radius:6px;box-sizing:border-box;border:1.8px solid #404543;"></div>
<svg class="a" style="left:756.5px;top:263.75px;" width="20" height="20" viewBox="0 0 20 20"><path d="M10 3.7 V16.3 M3.7 10 H16.3" stroke="#a7aca8" stroke-width="1.5"/></svg>
<div class="a" style="left:681.2px;top:295.85px;width:170.2px;height:30px;background:#0e100f;border-radius:6px;box-sizing:border-box;border:1.8px solid #404543;"></div>
<svg class="a" style="left:756.5px;top:301.25px;" width="20" height="20" viewBox="0 0 20 20"><path d="M10 3.7 V16.3 M3.7 10 H16.3" stroke="#a7aca8" stroke-width="1.5"/></svg>
<div class="a" style="left:681.2px;top:333.35px;width:170.2px;height:30px;background:#0e100f;border-radius:6px;box-sizing:border-box;border:1.8px solid #404543;"></div>
<svg class="a" style="left:756.5px;top:338.75px;" width="20" height="20" viewBox="0 0 20 20"><path d="M10 3.7 V16.3 M3.7 10 H16.3" stroke="#a7aca8" stroke-width="1.5"/></svg>
<div class="a" style="left:681.2px;top:370.85px;width:170.2px;height:30px;background:#0e100f;border-radius:6px;box-sizing:border-box;border:1.8px solid #404543;"></div>
<svg class="a" style="left:756.5px;top:376.25px;" width="20" height="20" viewBox="0 0 20 20"><path d="M10 3.7 V16.3 M3.7 10 H16.3" stroke="#a7aca8" stroke-width="1.5"/></svg>
<div class="a" style="left:676.5px;top:405px;width:180.5px;height:2.1px;background:#737a75;"></div>
<div class="a" style="left:676.5px;top:408.75px;width:128.8px;height:35.75px;background:#3b3e3c;border-radius:6px;overflow:hidden;">
<div class="a" style="left:36.6px;top:0;width:1.3px;height:36px;background:#171918"></div>
<svg class="a" style="left:0;top:0" width="36" height="36"><path d="M14.77 11.89 A7.4 7.4 0 1 0 22.83 11.89" fill="none" stroke="#eef3ef" stroke-width="2.3" stroke-linecap="round"/><line x1="18.8" y1="7.3" x2="18.8" y2="19.4" stroke="#eef3ef" stroke-width="2.5" stroke-linecap="butt"/></svg>
<div class="t m" style="left:49.5px;top:10.29px;font-size:17.6px;line-height:17.6px;color:#eef3ef;transform:scaleX(1.0705);transform-origin:0 0;">Reverb</div>
</div>
<svg class="a" style="left:807.5px;top:408.75px;" width="50" height="36" viewBox="0 0 50 36"><circle cx="15.7" cy="17.6" r="10.6" fill="none" stroke="#eef3ef" stroke-width="2.9"/><line x1="15.7" y1="15.8" x2="15.7" y2="7.4" stroke="#eef3ef" stroke-width="2.9"/><path d="M32.4 17.6 H43.6 M38.3 12.4 L43.6 17.6 L38.3 22.8" fill="none" stroke="#7d837f" stroke-width="2.1" stroke-linecap="round" stroke-linejoin="round"/></svg>
<div class="a" style="left:681.2px;top:448.85px;width:170.2px;height:30px;background:#0e100f;border-radius:6px;box-sizing:border-box;border:1.8px solid #404543;"></div>
<svg class="a" style="left:756.5px;top:454.25px;" width="20" height="20" viewBox="0 0 20 20"><path d="M10 3.7 V16.3 M3.7 10 H16.3" stroke="#a7aca8" stroke-width="1.5"/></svg>
<div class="a" style="left:681.2px;top:486.35px;width:170.2px;height:30px;background:#0e100f;border-radius:6px;box-sizing:border-box;border:1.8px solid #404543;"></div>
<svg class="a" style="left:756.5px;top:491.75px;" width="20" height="20" viewBox="0 0 20 20"><path d="M10 3.7 V16.3 M3.7 10 H16.3" stroke="#a7aca8" stroke-width="1.5"/></svg>
<div class="a" style="left:681.2px;top:523.85px;width:170.2px;height:30px;background:#0e100f;border-radius:6px;box-sizing:border-box;border:1.8px solid #404543;"></div>
<svg class="a" style="left:756.5px;top:529.25px;" width="20" height="20" viewBox="0 0 20 20"><path d="M10 3.7 V16.3 M3.7 10 H16.3" stroke="#a7aca8" stroke-width="1.5"/></svg>
<div class="a" style="left:676.5px;top:558px;width:180.5px;height:2.1px;background:#737a75;"></div>
<div class="a" style="left:706.5px;top:566px;width:35.5px;height:35.5px;background:#262827;border-radius:5px;"></div>
<div class="a" style="left:748.5px;top:566px;width:35.5px;height:35.5px;background:#262827;border-radius:5px;"></div>
<div class="a" style="left:790.7px;top:566px;width:35.5px;height:35.5px;background:#262827;border-radius:5px;"></div>
<div class="t" style="left:716.96px;top:574.57px;font-size:17.5px;line-height:17.5px;color:#dde3de;">M</div>
<div class="t" style="left:760.51px;top:574.57px;font-size:17.5px;line-height:17.5px;color:#dde3de;">S</div>
<svg class="a" style="left:790.7px;top:566px;" width="35.5" height="35.5" viewBox="0 0 35.5 35.5"><circle cx="17.9" cy="18" r="6.9" fill="none" stroke="#dde3de" stroke-width="1.7"/><line x1="10.4" y1="25.6" x2="25.7" y2="10.3" stroke="#dde3de" stroke-width="1.7"/></svg>
<svg class="a" style="left:749.5px;top:605.9px;" width="34" height="34" viewBox="0 0 34 34"><circle cx="17" cy="17" r="13.5" fill="none" stroke="#eef3ef" stroke-width="3"/><line x1="17" y1="14" x2="17" y2="4.8" stroke="#eef3ef" stroke-width="2.8"/></svg>
<div class="t m" style="left:751.73px;top:644.53px;font-size:16.6px;line-height:16.6px;color:#eef3ef;transform:scaleX(1.0949);transform-origin:14.77px 0;">Pan</div>
<div class="a" style="left:691.5px;top:677px;width:59.8px;height:23.8px;background:#010202;border-radius:5px;"></div>
<div class="a" style="left:781.5px;top:677px;width:59.8px;height:23.8px;background:#010202;border-radius:5px;"></div>
<div class="t m" style="left:708.69px;top:681.82px;font-size:17.2px;line-height:17.2px;color:#64ec9a;letter-spacing:0.75px;transform:scaleX(1.0800);transform-origin:12.71px 0;">0.0</div>
<div class="t m" style="left:798.33px;top:681.82px;font-size:17.2px;line-height:17.2px;color:#64ec9a;letter-spacing:0.75px;transform:scaleX(1.0500);transform-origin:13.07px 0;">-inf</div>
<div class="t m" style="left:683.44px;top:717.16px;font-size:14.8px;line-height:14.8px;color:#8b918d;transform:scaleX(0.8687);transform-origin:16.46px 0;">12</div>
<div class="t m" style="left:691.67px;top:760.86px;font-size:14.8px;line-height:14.8px;color:#8b918d;">0</div>
<div class="t" style="left:687.47px;top:892.35px;font-size:18px;line-height:18px;color:#8b918d;transform:scaleX(1.1923);transform-origin:12.83px 0;">∞</div>
<div class="a" style="left:703.5px;top:723.85px;width:6px;height:1.5px;background:#8b918d;"></div>
<div class="a" style="left:703.5px;top:767.55px;width:6px;height:1.5px;background:#8b918d;"></div>
<div class="a" style="left:703.5px;top:900.85px;width:6px;height:1.5px;background:#8b918d;"></div>
<div class="a" style="left:719.8px;top:726px;width:3px;height:178.5px;background:#050505;"></div>
<div class="a" style="left:801.2px;top:713px;width:20.9px;height:191.5px;background:#030303;"></div>
<div class="a" style="left:711.1px;top:749.9px;width:20.7px;height:36.8px;background:#f2fbf4;border-radius:4px;"></div>
<div class="a" style="left:711.1px;top:767.2px;width:20.7px;height:2.6px;background:#0c0d0c;"></div>
<div class="a" style="left:676.5px;top:924.3px;width:180.5px;height:2.1px;background:#737a75;"></div>
<div class="a" style="left:676.5px;top:928.8px;width:180.5px;height:36px;background:#252726;border-radius:0 0 6px 6px;"></div>
<div class="t m" style="left:688.8px;top:936.64px;font-size:18.6px;line-height:18.6px;color:#eef3ef;transform:scaleX(1.0143);transform-origin:0 0;">Snare Bus</div>
<svg class="a" style="left:830.5px;top:939px;" width="16" height="14" viewBox="0 0 16 14"><path d="M3.4 5 L8 9.6 L12.6 5" fill="none" stroke="#9ba19d" stroke-width="1.6"/></svg>
<div class="a" style="left:859.5px;top:138.75px;width:180.5px;height:826px;background:#111312;"></div>
<div class="a" style="left:859.5px;top:102.2px;width:180.5px;height:36.3px;background:#e5dfa9;border-radius:5.5px 5.5px 0 0;"></div>
<svg class="a" style="left:859.5px;top:102.2px;" width="180.5" height="36.3" viewBox="0 0 180.5 36.3"><circle cx="12.4" cy="14" r="1.6" fill="#111"/><circle cx="16.8" cy="14" r="1.6" fill="#111"/><circle cx="21.2" cy="14" r="1.6" fill="#111"/><circle cx="12.4" cy="18.4" r="1.6" fill="#111"/><circle cx="16.8" cy="18.4" r="1.6" fill="#111"/><circle cx="21.2" cy="18.4" r="1.6" fill="#111"/><circle cx="12.4" cy="22.8" r="1.6" fill="#111"/><circle cx="16.8" cy="22.8" r="1.6" fill="#111"/><circle cx="21.2" cy="22.8" r="1.6" fill="#111"/><circle cx="157.4" cy="14" r="1.6" fill="#111"/><circle cx="161.8" cy="14" r="1.6" fill="#111"/><circle cx="166.2" cy="14" r="1.6" fill="#111"/><circle cx="157.4" cy="18.4" r="1.6" fill="#111"/><circle cx="161.8" cy="18.4" r="1.6" fill="#111"/><circle cx="166.2" cy="18.4" r="1.6" fill="#111"/><circle cx="157.4" cy="22.8" r="1.6" fill="#111"/><circle cx="161.8" cy="22.8" r="1.6" fill="#111"/><circle cx="166.2" cy="22.8" r="1.6" fill="#111"/></svg>
<div class="t m" style="left:893.25px;top:110.51px;font-size:18.4px;line-height:18.4px;color:#0d0f0e;transform:scaleX(1.0435);transform-origin:56.25px 0;">Snare Bottom</div>
<div class="t m" style="left:872px;top:151.7px;font-size:17.7px;line-height:17.7px;color:#959b97;transform:scaleX(1.0849);transform-origin:0 0;">Snare Bottom</div>
<div class="a" style="left:859.5px;top:177px;width:180.5px;height:2.25px;background:#737a75;"></div>
<div class="a" style="left:859.5px;top:180.4px;width:180.5px;height:36.1px;background:#3b3e3c;border-radius:6px;"></div>
<div class="a" style="left:896.1px;top:180.4px;width:1.3px;height:36.1px;background:#171918;"></div>
<svg class="a" style="left:859.5px;top:180.4px;" width="36" height="36" viewBox="0 0 36 36"><path d="M14.77 12.14 A7.4 7.4 0 1 0 22.83 12.14" fill="none" stroke="#eef3ef" stroke-width="2.3" stroke-linecap="round"/><line x1="18.8" y1="7.55" x2="18.8" y2="19.65" stroke="#eef3ef" stroke-width="2.5" stroke-linecap="butt"/></svg>
<div class="t m" style="left:909px;top:191.04px;font-size:17.6px;line-height:17.6px;color:#eef3ef;transform:scaleX(0.9157);transform-origin:0 0;">EQ</div>
<div class="a" style="left:864.2px;top:220.85px;width:170.2px;height:30px;background:#0e100f;border-radius:6px;box-sizing:border-box;border:1.8px solid #404543;"></div>
<svg class="a" style="left:939.5px;top:226.25px;" width="20" height="20" viewBox="0 0 20 20"><path d="M10 3.7 V16.3 M3.7 10 H16.3" stroke="#a7aca8" stroke-width="1.5"/></svg>
<div class="a" style="left:864.2px;top:258.35px;width:170.2px;height:30px;background:#0e100f;border-radius:6px;box-sizing:border-box;border:1.8px solid #404543;"></div>
<svg class="a" style="left:939.5px;top:263.75px;" width="20" height="20" viewBox="0 0 20 20"><path d="M10 3.7 V16.3 M3.7 10 H16.3" stroke="#a7aca8" stroke-width="1.5"/></svg>
<div class="a" style="left:864.2px;top:295.85px;width:170.2px;height:30px;background:#0e100f;border-radius:6px;box-sizing:border-box;border:1.8px solid #404543;"></div>
<svg class="a" style="left:939.5px;top:301.25px;" width="20" height="20" viewBox="0 0 20 20"><path d="M10 3.7 V16.3 M3.7 10 H16.3" stroke="#a7aca8" stroke-width="1.5"/></svg>
<div class="a" style="left:864.2px;top:333.35px;width:170.2px;height:30px;background:#0e100f;border-radius:6px;box-sizing:border-box;border:1.8px solid #404543;"></div>
<svg class="a" style="left:939.5px;top:338.75px;" width="20" height="20" viewBox="0 0 20 20"><path d="M10 3.7 V16.3 M3.7 10 H16.3" stroke="#a7aca8" stroke-width="1.5"/></svg>
<div class="a" style="left:864.2px;top:370.85px;width:170.2px;height:30px;background:#0e100f;border-radius:6px;box-sizing:border-box;border:1.8px solid #404543;"></div>
<svg class="a" style="left:939.5px;top:376.25px;" width="20" height="20" viewBox="0 0 20 20"><path d="M10 3.7 V16.3 M3.7 10 H16.3" stroke="#a7aca8" stroke-width="1.5"/></svg>
<div class="a" style="left:859.5px;top:405px;width:180.5px;height:2.1px;background:#737a75;"></div>
<div class="a" style="left:864.2px;top:411.35px;width:170.2px;height:30px;background:#0e100f;border-radius:6px;box-sizing:border-box;border:1.8px solid #404543;"></div>
<svg class="a" style="left:939.5px;top:416.75px;" width="20" height="20" viewBox="0 0 20 20"><path d="M10 3.7 V16.3 M3.7 10 H16.3" stroke="#a7aca8" stroke-width="1.5"/></svg>
<div class="a" style="left:864.2px;top:448.85px;width:170.2px;height:30px;background:#0e100f;border-radius:6px;box-sizing:border-box;border:1.8px solid #404543;"></div>
<svg class="a" style="left:939.5px;top:454.25px;" width="20" height="20" viewBox="0 0 20 20"><path d="M10 3.7 V16.3 M3.7 10 H16.3" stroke="#a7aca8" stroke-width="1.5"/></svg>
<div class="a" style="left:864.2px;top:486.35px;width:170.2px;height:30px;background:#0e100f;border-radius:6px;box-sizing:border-box;border:1.8px solid #404543;"></div>
<svg class="a" style="left:939.5px;top:491.75px;" width="20" height="20" viewBox="0 0 20 20"><path d="M10 3.7 V16.3 M3.7 10 H16.3" stroke="#a7aca8" stroke-width="1.5"/></svg>
<div class="a" style="left:864.2px;top:523.85px;width:170.2px;height:30px;background:#0e100f;border-radius:6px;box-sizing:border-box;border:1.8px solid #404543;"></div>
<svg class="a" style="left:939.5px;top:529.25px;" width="20" height="20" viewBox="0 0 20 20"><path d="M10 3.7 V16.3 M3.7 10 H16.3" stroke="#a7aca8" stroke-width="1.5"/></svg>
<div class="a" style="left:859.5px;top:558px;width:180.5px;height:2.1px;background:#737a75;"></div>
<div class="a" style="left:889.5px;top:566px;width:35.5px;height:35.5px;background:#262827;border-radius:5px;"></div>
<div class="a" style="left:931.5px;top:566px;width:35.5px;height:35.5px;background:#262827;border-radius:5px;"></div>
<div class="a" style="left:973.7px;top:566px;width:35.5px;height:35.5px;background:#262827;border-radius:5px;"></div>
<div class="t" style="left:899.96px;top:574.57px;font-size:17.5px;line-height:17.5px;color:#dde3de;">M</div>
<div class="t" style="left:943.51px;top:574.57px;font-size:17.5px;line-height:17.5px;color:#dde3de;">S</div>
<svg class="a" style="left:973.7px;top:566px;" width="35.5" height="35.5" viewBox="0 0 35.5 35.5"><circle cx="17.9" cy="18" r="6.9" fill="none" stroke="#dde3de" stroke-width="1.7"/><line x1="10.4" y1="25.6" x2="25.7" y2="10.3" stroke="#dde3de" stroke-width="1.7"/></svg>
<svg class="a" style="left:932.5px;top:605.9px;" width="34" height="34" viewBox="0 0 34 34"><circle cx="17" cy="17" r="13.5" fill="none" stroke="#eef3ef" stroke-width="3"/><line x1="17" y1="14" x2="17" y2="4.8" stroke="#eef3ef" stroke-width="2.8"/></svg>
<div class="t m" style="left:934.73px;top:644.53px;font-size:16.6px;line-height:16.6px;color:#eef3ef;transform:scaleX(1.0949);transform-origin:14.77px 0;">Pan</div>
<div class="a" style="left:874.5px;top:677px;width:59.8px;height:23.8px;background:#010202;border-radius:5px;"></div>
<div class="a" style="left:964.5px;top:677px;width:59.8px;height:23.8px;background:#010202;border-radius:5px;"></div>
<div class="t m" style="left:883.3px;top:681.82px;font-size:17.2px;line-height:17.2px;color:#64ec9a;letter-spacing:0.75px;transform:scaleX(1.0800);transform-origin:21.1px 0;">-13.9</div>
<div class="t m" style="left:981.33px;top:681.82px;font-size:17.2px;line-height:17.2px;color:#64ec9a;letter-spacing:0.75px;transform:scaleX(1.0500);transform-origin:13.07px 0;">-inf</div>
<div class="t m" style="left:866.44px;top:717.16px;font-size:14.8px;line-height:14.8px;color:#8b918d;transform:scaleX(0.8687);transform-origin:16.46px 0;">12</div>
<div class="t m" style="left:874.67px;top:760.86px;font-size:14.8px;line-height:14.8px;color:#8b918d;">0</div>
<div class="t" style="left:870.47px;top:892.35px;font-size:18px;line-height:18px;color:#8b918d;transform:scaleX(1.1923);transform-origin:12.83px 0;">∞</div>
<div class="a" style="left:886.5px;top:723.85px;width:6px;height:1.5px;background:#8b918d;"></div>
<div class="a" style="left:886.5px;top:767.55px;width:6px;height:1.5px;background:#8b918d;"></div>
<div class="a" style="left:886.5px;top:900.85px;width:6px;height:1.5px;background:#8b918d;"></div>
<div class="a" style="left:902.8px;top:726px;width:3px;height:178.5px;background:#050505;"></div>
<div class="a" style="left:984.2px;top:713px;width:20.9px;height:191.5px;background:#030303;"></div>
<div class="a" style="left:894.1px;top:800.7px;width:20.7px;height:36.8px;background:#f2fbf4;border-radius:4px;"></div>
<div class="a" style="left:894.1px;top:818px;width:20.7px;height:2.6px;background:#0c0d0c;"></div>
<div class="a" style="left:859.5px;top:924.3px;width:180.5px;height:2.1px;background:#737a75;"></div>
<div class="a" style="left:859.5px;top:928.8px;width:180.5px;height:36px;background:#252726;border-radius:0 0 6px 6px;"></div>
<div class="t m" style="left:871.8px;top:936.64px;font-size:18.6px;line-height:18.6px;color:#eef3ef;transform:scaleX(1.0143);transform-origin:0 0;">Snare Bus</div>
<svg class="a" style="left:1013.5px;top:939px;" width="16" height="14" viewBox="0 0 16 14"><path d="M3.4 5 L8 9.6 L12.6 5" fill="none" stroke="#9ba19d" stroke-width="1.6"/></svg>
<div class="a" style="left:1042.5px;top:138.75px;width:180.5px;height:826px;background:#111312;"></div>
<div class="a" style="left:1042.5px;top:102.2px;width:180.5px;height:36.3px;background:#e5dfa9;border-radius:5.5px 5.5px 0 0;"></div>
<svg class="a" style="left:1042.5px;top:102.2px;" width="180.5" height="36.3" viewBox="0 0 180.5 36.3"><circle cx="12.4" cy="14" r="1.6" fill="#111"/><circle cx="16.8" cy="14" r="1.6" fill="#111"/><circle cx="21.2" cy="14" r="1.6" fill="#111"/><circle cx="12.4" cy="18.4" r="1.6" fill="#111"/><circle cx="16.8" cy="18.4" r="1.6" fill="#111"/><circle cx="21.2" cy="18.4" r="1.6" fill="#111"/><circle cx="12.4" cy="22.8" r="1.6" fill="#111"/><circle cx="16.8" cy="22.8" r="1.6" fill="#111"/><circle cx="21.2" cy="22.8" r="1.6" fill="#111"/><circle cx="157.4" cy="14" r="1.6" fill="#111"/><circle cx="161.8" cy="14" r="1.6" fill="#111"/><circle cx="166.2" cy="14" r="1.6" fill="#111"/><circle cx="157.4" cy="18.4" r="1.6" fill="#111"/><circle cx="161.8" cy="18.4" r="1.6" fill="#111"/><circle cx="166.2" cy="18.4" r="1.6" fill="#111"/><circle cx="157.4" cy="22.8" r="1.6" fill="#111"/><circle cx="161.8" cy="22.8" r="1.6" fill="#111"/><circle cx="166.2" cy="22.8" r="1.6" fill="#111"/></svg>
<div class="t m" style="left:1078.29px;top:110.51px;font-size:18.4px;line-height:18.4px;color:#0d0f0e;transform:scaleX(1.0289);transform-origin:54.21px 0;">Snare 1-Shot</div>
<div class="t m" style="left:1055px;top:151.7px;font-size:17.7px;line-height:17.7px;color:#959b97;transform:scaleX(1.0712);transform-origin:0 0;">Snare 1-Shot</div>
<div class="a" style="left:1042.5px;top:177px;width:180.5px;height:2.25px;background:#737a75;"></div>
<div class="a" style="left:1042.5px;top:180.4px;width:180.5px;height:36.1px;background:#3b3e3c;border-radius:6px;"></div>
<div class="a" style="left:1079.1px;top:180.4px;width:1.3px;height:36.1px;background:#171918;"></div>
<svg class="a" style="left:1042.5px;top:180.4px;" width="36" height="36" viewBox="0 0 36 36"><path d="M14.77 12.14 A7.4 7.4 0 1 0 22.83 12.14" fill="none" stroke="#eef3ef" stroke-width="2.3" stroke-linecap="round"/><line x1="18.8" y1="7.55" x2="18.8" y2="19.65" stroke="#eef3ef" stroke-width="2.5" stroke-linecap="butt"/></svg>
<div class="t m" style="left:1092px;top:191.04px;font-size:17.6px;line-height:17.6px;color:#eef3ef;transform:scaleX(0.9157);transform-origin:0 0;">EQ</div>
<div class="a" style="left:1047.2px;top:220.85px;width:170.2px;height:30px;background:#0e100f;border-radius:6px;box-sizing:border-box;border:1.8px solid #404543;"></div>
<svg class="a" style="left:1122.5px;top:226.25px;" width="20" height="20" viewBox="0 0 20 20"><path d="M10 3.7 V16.3 M3.7 10 H16.3" stroke="#a7aca8" stroke-width="1.5"/></svg>
<div class="a" style="left:1047.2px;top:258.35px;width:170.2px;height:30px;background:#0e100f;border-radius:6px;box-sizing:border-box;border:1.8px solid #404543;"></div>
<svg class="a" style="left:1122.5px;top:263.75px;" width="20" height="20" viewBox="0 0 20 20"><path d="M10 3.7 V16.3 M3.7 10 H16.3" stroke="#a7aca8" stroke-width="1.5"/></svg>
<div class="a" style="left:1047.2px;top:295.85px;width:170.2px;height:30px;background:#0e100f;border-radius:6px;box-sizing:border-box;border:1.8px solid #404543;"></div>
<svg class="a" style="left:1122.5px;top:301.25px;" width="20" height="20" viewBox="0 0 20 20"><path d="M10 3.7 V16.3 M3.7 10 H16.3" stroke="#a7aca8" stroke-width="1.5"/></svg>
<div class="a" style="left:1047.2px;top:333.35px;width:170.2px;height:30px;background:#0e100f;border-radius:6px;box-sizing:border-box;border:1.8px solid #404543;"></div>
<svg class="a" style="left:1122.5px;top:338.75px;" width="20" height="20" viewBox="0 0 20 20"><path d="M10 3.7 V16.3 M3.7 10 H16.3" stroke="#a7aca8" stroke-width="1.5"/></svg>
<div class="a" style="left:1047.2px;top:370.85px;width:170.2px;height:30px;background:#0e100f;border-radius:6px;box-sizing:border-box;border:1.8px solid #404543;"></div>
<svg class="a" style="left:1122.5px;top:376.25px;" width="20" height="20" viewBox="0 0 20 20"><path d="M10 3.7 V16.3 M3.7 10 H16.3" stroke="#a7aca8" stroke-width="1.5"/></svg>
<div class="a" style="left:1042.5px;top:405px;width:180.5px;height:2.1px;background:#737a75;"></div>
<div class="a" style="left:1042.5px;top:408.75px;width:128.8px;height:35.75px;background:#3b3e3c;border-radius:6px;overflow:hidden;">
<div class="a" style="left:36.6px;top:0;width:1.3px;height:36px;background:#171918"></div>
<svg class="a" style="left:0;top:0" width="36" height="36"><path d="M14.77 11.89 A7.4 7.4 0 1 0 22.83 11.89" fill="none" stroke="#eef3ef" stroke-width="2.3" stroke-linecap="round"/><line x1="18.8" y1="7.3" x2="18.8" y2="19.4" stroke="#eef3ef" stroke-width="2.5" stroke-linecap="butt"/></svg>
<div class="t m" style="left:49.5px;top:10.29px;font-size:17.6px;line-height:17.6px;color:#eef3ef;transform:scaleX(1.0705);transform-origin:0 0;">Reverb</div>
</div>
<svg class="a" style="left:1173.5px;top:408.75px;" width="50" height="36" viewBox="0 0 50 36"><circle cx="15.7" cy="17.6" r="10.6" fill="none" stroke="#eef3ef" stroke-width="2.9"/><line x1="14.8" y1="16.04" x2="10.6" y2="8.77" stroke="#eef3ef" stroke-width="2.9"/><path d="M32.4 17.6 H43.6 M38.3 12.4 L43.6 17.6 L38.3 22.8" fill="none" stroke="#7d837f" stroke-width="2.1" stroke-linecap="round" stroke-linejoin="round"/></svg>
<div class="a" style="left:1047.2px;top:448.85px;width:170.2px;height:30px;background:#0e100f;border-radius:6px;box-sizing:border-box;border:1.8px solid #404543;"></div>
<svg class="a" style="left:1122.5px;top:454.25px;" width="20" height="20" viewBox="0 0 20 20"><path d="M10 3.7 V16.3 M3.7 10 H16.3" stroke="#a7aca8" stroke-width="1.5"/></svg>
<div class="a" style="left:1047.2px;top:486.35px;width:170.2px;height:30px;background:#0e100f;border-radius:6px;box-sizing:border-box;border:1.8px solid #404543;"></div>
<svg class="a" style="left:1122.5px;top:491.75px;" width="20" height="20" viewBox="0 0 20 20"><path d="M10 3.7 V16.3 M3.7 10 H16.3" stroke="#a7aca8" stroke-width="1.5"/></svg>
<div class="a" style="left:1047.2px;top:523.85px;width:170.2px;height:30px;background:#0e100f;border-radius:6px;box-sizing:border-box;border:1.8px solid #404543;"></div>
<svg class="a" style="left:1122.5px;top:529.25px;" width="20" height="20" viewBox="0 0 20 20"><path d="M10 3.7 V16.3 M3.7 10 H16.3" stroke="#a7aca8" stroke-width="1.5"/></svg>
<div class="a" style="left:1042.5px;top:558px;width:180.5px;height:2.1px;background:#737a75;"></div>
<div class="a" style="left:1072.5px;top:566px;width:35.5px;height:35.5px;background:#262827;border-radius:5px;"></div>
<div class="a" style="left:1114.5px;top:566px;width:35.5px;height:35.5px;background:#262827;border-radius:5px;"></div>
<div class="a" style="left:1156.7px;top:566px;width:35.5px;height:35.5px;background:#262827;border-radius:5px;"></div>
<div class="t" style="left:1082.96px;top:574.57px;font-size:17.5px;line-height:17.5px;color:#dde3de;">M</div>
<div class="t" style="left:1126.51px;top:574.57px;font-size:17.5px;line-height:17.5px;color:#dde3de;">S</div>
<svg class="a" style="left:1156.7px;top:566px;" width="35.5" height="35.5" viewBox="0 0 35.5 35.5"><circle cx="17.9" cy="18" r="6.9" fill="none" stroke="#dde3de" stroke-width="1.7"/><line x1="10.4" y1="25.6" x2="25.7" y2="10.3" stroke="#dde3de" stroke-width="1.7"/></svg>
<svg class="a" style="left:1075px;top:605.9px;" width="34" height="34" viewBox="0 0 34 34"><circle cx="17" cy="17" r="13.5" fill="none" stroke="#eef3ef" stroke-width="3"/><line x1="14.88" y1="19.12" x2="8.37" y2="25.63" stroke="#eef3ef" stroke-width="2.8"/></svg>
<div class="t m" style="left:1070.31px;top:644.53px;font-size:16.6px;line-height:16.6px;color:#eef3ef;transform:scaleX(1.0438);transform-origin:21.69px 0;">Pan L</div>
<svg class="a" style="left:1157.2px;top:605.9px;" width="34" height="34" viewBox="0 0 34 34"><circle cx="17" cy="17" r="13.5" fill="none" stroke="#eef3ef" stroke-width="3"/><line x1="19.12" y1="19.12" x2="25.63" y2="25.63" stroke="#eef3ef" stroke-width="2.8"/></svg>
<div class="t m" style="left:1151.13px;top:644.53px;font-size:16.6px;line-height:16.6px;color:#eef3ef;transform:scaleX(1.0195);transform-origin:23.07px 0;">Pan R</div>
<div class="a" style="left:1057.5px;top:677px;width:59.8px;height:23.8px;background:#010202;border-radius:5px;"></div>
<div class="a" style="left:1147.5px;top:677px;width:59.8px;height:23.8px;background:#010202;border-radius:5px;"></div>
<div class="t m" style="left:1071.46px;top:681.82px;font-size:17.2px;line-height:17.2px;color:#64ec9a;letter-spacing:0.75px;transform:scaleX(1.0800);transform-origin:15.94px 0;">-0.4</div>
<div class="t m" style="left:1164.33px;top:681.82px;font-size:17.2px;line-height:17.2px;color:#64ec9a;letter-spacing:0.75px;transform:scaleX(1.0500);transform-origin:13.07px 0;">-inf</div>
<div class="t m" style="left:1049.44px;top:717.16px;font-size:14.8px;line-height:14.8px;color:#8b918d;transform:scaleX(0.8687);transform-origin:16.46px 0;">12</div>
<div class="t m" style="left:1057.67px;top:760.86px;font-size:14.8px;line-height:14.8px;color:#8b918d;">0</div>
<div class="t" style="left:1053.47px;top:892.35px;font-size:18px;line-height:18px;color:#8b918d;transform:scaleX(1.1923);transform-origin:12.83px 0;">∞</div>
<div class="a" style="left:1069.5px;top:723.85px;width:6px;height:1.5px;background:#8b918d;"></div>
<div class="a" style="left:1069.5px;top:767.55px;width:6px;height:1.5px;background:#8b918d;"></div>
<div class="a" style="left:1069.5px;top:900.85px;width:6px;height:1.5px;background:#8b918d;"></div>
<div class="a" style="left:1085.8px;top:726px;width:3px;height:178.5px;background:#050505;"></div>
<div class="a" style="left:1167.2px;top:713px;width:20.9px;height:191.5px;background:#030303;"></div>
<div class="a" style="left:1077.1px;top:752px;width:20.7px;height:36.8px;background:#f2fbf4;border-radius:4px;"></div>
<div class="a" style="left:1077.1px;top:769.3px;width:20.7px;height:2.6px;background:#0c0d0c;"></div>
<div class="a" style="left:1042.5px;top:924.3px;width:180.5px;height:2.1px;background:#737a75;"></div>
<div class="a" style="left:1042.5px;top:928.8px;width:180.5px;height:36px;background:#252726;border-radius:0 0 6px 6px;"></div>
<div class="t m" style="left:1054.8px;top:936.64px;font-size:18.6px;line-height:18.6px;color:#eef3ef;transform:scaleX(1.0143);transform-origin:0 0;">Snare Bus</div>
<svg class="a" style="left:1196.5px;top:939px;" width="16" height="14" viewBox="0 0 16 14"><path d="M3.4 5 L8 9.6 L12.6 5" fill="none" stroke="#9ba19d" stroke-width="1.6"/></svg>
<div class="a" style="left:1225.5px;top:138.75px;width:180.5px;height:826px;background:#111312;"></div>
<div class="a" style="left:1225.5px;top:102.2px;width:180.5px;height:36.3px;background:#e5dfa9;border-radius:5.5px 5.5px 0 0;"></div>
<svg class="a" style="left:1225.5px;top:102.2px;" width="180.5" height="36.3" viewBox="0 0 180.5 36.3"><circle cx="12.4" cy="14" r="1.6" fill="#111"/><circle cx="16.8" cy="14" r="1.6" fill="#111"/><circle cx="21.2" cy="14" r="1.6" fill="#111"/><circle cx="12.4" cy="18.4" r="1.6" fill="#111"/><circle cx="16.8" cy="18.4" r="1.6" fill="#111"/><circle cx="21.2" cy="18.4" r="1.6" fill="#111"/><circle cx="12.4" cy="22.8" r="1.6" fill="#111"/><circle cx="16.8" cy="22.8" r="1.6" fill="#111"/><circle cx="21.2" cy="22.8" r="1.6" fill="#111"/><circle cx="157.4" cy="14" r="1.6" fill="#111"/><circle cx="161.8" cy="14" r="1.6" fill="#111"/><circle cx="166.2" cy="14" r="1.6" fill="#111"/><circle cx="157.4" cy="18.4" r="1.6" fill="#111"/><circle cx="161.8" cy="18.4" r="1.6" fill="#111"/><circle cx="166.2" cy="18.4" r="1.6" fill="#111"/><circle cx="157.4" cy="22.8" r="1.6" fill="#111"/><circle cx="161.8" cy="22.8" r="1.6" fill="#111"/><circle cx="166.2" cy="22.8" r="1.6" fill="#111"/></svg>
<div class="t m" style="left:1267.1px;top:110.51px;font-size:18.4px;line-height:18.4px;color:#0d0f0e;transform:scaleX(0.9648);transform-origin:48.4px 0;">Rack Tom 1</div>
<div class="t m" style="left:1238px;top:151.7px;font-size:17.7px;line-height:17.7px;color:#959b97;transform:scaleX(1.0096);transform-origin:0 0;">Rack Tom 1</div>
<div class="a" style="left:1225.5px;top:177px;width:180.5px;height:2.25px;background:#737a75;"></div>
<div class="a" style="left:1225.5px;top:180.4px;width:180.5px;height:36.1px;background:#3b3e3c;border-radius:6px;"></div>
<div class="a" style="left:1262.1px;top:180.4px;width:1.3px;height:36.1px;background:#171918;"></div>
<svg class="a" style="left:1225.5px;top:180.4px;" width="36" height="36" viewBox="0 0 36 36"><path d="M14.77 12.14 A7.4 7.4 0 1 0 22.83 12.14" fill="none" stroke="#eef3ef" stroke-width="2.3" stroke-linecap="round"/><line x1="18.8" y1="7.55" x2="18.8" y2="19.65" stroke="#eef3ef" stroke-width="2.5" stroke-linecap="butt"/></svg>
<div class="t m" style="left:1275px;top:191.04px;font-size:17.6px;line-height:17.6px;color:#eef3ef;transform:scaleX(0.9157);transform-origin:0 0;">EQ</div>
<div class="a" style="left:1225.5px;top:217.9px;width:180.5px;height:36.1px;background:#3b3e3c;border-radius:6px;"></div>
<div class="a" style="left:1262.1px;top:217.9px;width:1.3px;height:36.1px;background:#171918;"></div>
<svg class="a" style="left:1225.5px;top:217.9px;" width="36" height="36" viewBox="0 0 36 36"><path d="M14.77 12.14 A7.4 7.4 0 1 0 22.83 12.14" fill="none" stroke="#eef3ef" stroke-width="2.3" stroke-linecap="round"/><line x1="18.8" y1="7.55" x2="18.8" y2="19.65" stroke="#eef3ef" stroke-width="2.5" stroke-linecap="butt"/></svg>
<div class="t m" style="left:1275px;top:228.54px;font-size:17.6px;line-height:17.6px;color:#eef3ef;transform:scaleX(0.9157);transform-origin:0 0;">EQ</div>
<div class="a" style="left:1225.5px;top:255.4px;width:180.5px;height:36.1px;background:#3b3e3c;border-radius:6px;"></div>
<div class="a" style="left:1262.1px;top:255.4px;width:1.3px;height:36.1px;background:#171918;"></div>
<svg class="a" style="left:1225.5px;top:255.4px;" width="36" height="36" viewBox="0 0 36 36"><path d="M14.77 12.14 A7.4 7.4 0 1 0 22.83 12.14" fill="none" stroke="#eef3ef" stroke-width="2.3" stroke-linecap="round"/><line x1="18.8" y1="7.55" x2="18.8" y2="19.65" stroke="#eef3ef" stroke-width="2.5" stroke-linecap="butt"/></svg>
<div class="t m" style="left:1275px;top:266.04px;font-size:17.6px;line-height:17.6px;color:#eef3ef;transform:scaleX(1.1107);transform-origin:0 0;">Transient</div>
<div class="a" style="left:1225.5px;top:292.9px;width:180.5px;height:36.1px;background:#3b3e3c;border-radius:6px;"></div>
<div class="a" style="left:1262.1px;top:292.9px;width:1.3px;height:36.1px;background:#171918;"></div>
<svg class="a" style="left:1225.5px;top:292.9px;" width="36" height="36" viewBox="0 0 36 36"><path d="M14.77 12.14 A7.4 7.4 0 1 0 22.83 12.14" fill="none" stroke="#eef3ef" stroke-width="2.3" stroke-linecap="round"/><line x1="18.8" y1="7.55" x2="18.8" y2="19.65" stroke="#eef3ef" stroke-width="2.5" stroke-linecap="butt"/></svg>
<div class="t m" style="left:1275px;top:303.54px;font-size:17.6px;line-height:17.6px;color:#eef3ef;transform:scaleX(0.9157);transform-origin:0 0;">EQ</div>
<div class="a" style="left:1225.5px;top:330.4px;width:180.5px;height:36.1px;background:#3b3e3c;border-radius:6px;"></div>
<div class="a" style="left:1262.1px;top:330.4px;width:1.3px;height:36.1px;background:#171918;"></div>
<svg class="a" style="left:1225.5px;top:330.4px;" width="36" height="36" viewBox="0 0 36 36"><path d="M14.77 12.14 A7.4 7.4 0 1 0 22.83 12.14" fill="none" stroke="#eef3ef" stroke-width="2.3" stroke-linecap="round"/><line x1="18.8" y1="7.55" x2="18.8" y2="19.65" stroke="#eef3ef" stroke-width="2.5" stroke-linecap="butt"/></svg>
<div class="t m" style="left:1275px;top:341.04px;font-size:17.6px;line-height:17.6px;color:#eef3ef;transform:scaleX(1.0599);transform-origin:0 0;">Mod. Comp</div>
<div class="a" style="left:1225.5px;top:367.9px;width:180.5px;height:36.1px;background:#3b3e3c;border-radius:6px;"></div>
<div class="a" style="left:1262.1px;top:367.9px;width:1.3px;height:36.1px;background:#171918;"></div>
<svg class="a" style="left:1225.5px;top:367.9px;" width="36" height="36" viewBox="0 0 36 36"><path d="M14.77 12.14 A7.4 7.4 0 1 0 22.83 12.14" fill="none" stroke="#eef3ef" stroke-width="2.3" stroke-linecap="round"/><line x1="18.8" y1="7.55" x2="18.8" y2="19.65" stroke="#eef3ef" stroke-width="2.5" stroke-linecap="butt"/></svg>
<div class="t m" style="left:1275px;top:378.54px;font-size:17.6px;line-height:17.6px;color:#eef3ef;transform:scaleX(1.0998);transform-origin:0 0;">Drive</div>
<div class="a" style="left:1225.5px;top:405px;width:180.5px;height:2.1px;background:#737a75;"></div>
<div class="a" style="left:1225.5px;top:408.75px;width:128.8px;height:35.75px;background:#3b3e3c;border-radius:6px;overflow:hidden;">
<div class="a" style="left:36.6px;top:0;width:1.3px;height:36px;background:#171918"></div>
<svg class="a" style="left:0;top:0" width="36" height="36"><path d="M14.77 11.89 A7.4 7.4 0 1 0 22.83 11.89" fill="none" stroke="#eef3ef" stroke-width="2.3" stroke-linecap="round"/><line x1="18.8" y1="7.3" x2="18.8" y2="19.4" stroke="#eef3ef" stroke-width="2.5" stroke-linecap="butt"/></svg>
<div class="t m" style="left:49.5px;top:10.29px;font-size:17.6px;line-height:17.6px;color:#eef3ef;transform:scaleX(1.0705);transform-origin:0 0;">Reverb</div>
</div>
<svg class="a" style="left:1356.5px;top:408.75px;" width="50" height="36" viewBox="0 0 50 36"><circle cx="15.7" cy="17.6" r="10.6" fill="none" stroke="#eef3ef" stroke-width="2.9"/><line x1="14.43" y1="16.33" x2="8.49" y2="10.39" stroke="#eef3ef" stroke-width="2.9"/><path d="M32.4 17.6 H43.6 M38.3 12.4 L43.6 17.6 L38.3 22.8" fill="none" stroke="#7d837f" stroke-width="2.1" stroke-linecap="round" stroke-linejoin="round"/></svg>
<div class="a" style="left:1225.5px;top:446.25px;width:128.8px;height:35.75px;background:#3b3e3c;border-radius:6px;overflow:hidden;">
<div class="a" style="left:36.6px;top:0;width:1.3px;height:36px;background:#171918"></div>
<svg class="a" style="left:0;top:0" width="36" height="36"><path d="M14.77 11.89 A7.4 7.4 0 1 0 22.83 11.89" fill="none" stroke="#eef3ef" stroke-width="2.3" stroke-linecap="round"/><line x1="18.8" y1="7.3" x2="18.8" y2="19.4" stroke="#eef3ef" stroke-width="2.5" stroke-linecap="butt"/></svg>
<div class="t m" style="left:49.5px;top:10.29px;font-size:17.6px;line-height:17.6px;color:#eef3ef;transform:scaleX(0.9715);transform-origin:0 0;">PRL Comp</div>
</div>
<svg class="a" style="left:1356.5px;top:446.25px;" width="50" height="36" viewBox="0 0 50 36"><circle cx="15.7" cy="17.6" r="10.6" fill="none" stroke="#eef3ef" stroke-width="2.9"/><line x1="14.67" y1="16.13" x2="9.85" y2="9.24" stroke="#eef3ef" stroke-width="2.9"/><path d="M32.4 17.6 H43.6 M38.3 12.4 L43.6 17.6 L38.3 22.8" fill="none" stroke="#7d837f" stroke-width="2.1" stroke-linecap="round" stroke-linejoin="round"/></svg>
<div class="a" style="left:1230.2px;top:486.35px;width:170.2px;height:30px;background:#0e100f;border-radius:6px;box-sizing:border-box;border:1.8px solid #404543;"></div>
<svg class="a" style="left:1305.5px;top:491.75px;" width="20" height="20" viewBox="0 0 20 20"><path d="M10 3.7 V16.3 M3.7 10 H16.3" stroke="#a7aca8" stroke-width="1.5"/></svg>
<div class="a" style="left:1230.2px;top:523.85px;width:170.2px;height:30px;background:#0e100f;border-radius:6px;box-sizing:border-box;border:1.8px solid #404543;"></div>
<svg class="a" style="left:1305.5px;top:529.25px;" width="20" height="20" viewBox="0 0 20 20"><path d="M10 3.7 V16.3 M3.7 10 H16.3" stroke="#a7aca8" stroke-width="1.5"/></svg>
<div class="a" style="left:1225.5px;top:558px;width:180.5px;height:2.1px;background:#737a75;"></div>
<div class="a" style="left:1255.5px;top:566px;width:35.5px;height:35.5px;background:#262827;border-radius:5px;"></div>
<div class="a" style="left:1297.5px;top:566px;width:35.5px;height:35.5px;background:#262827;border-radius:5px;"></div>
<div class="a" style="left:1339.7px;top:566px;width:35.5px;height:35.5px;background:#262827;border-radius:5px;"></div>
<div class="t" style="left:1265.96px;top:574.57px;font-size:17.5px;line-height:17.5px;color:#dde3de;">M</div>
<div class="t" style="left:1309.51px;top:574.57px;font-size:17.5px;line-height:17.5px;color:#dde3de;">S</div>
<svg class="a" style="left:1339.7px;top:566px;" width="35.5" height="35.5" viewBox="0 0 35.5 35.5"><circle cx="17.9" cy="18" r="6.9" fill="none" stroke="#dde3de" stroke-width="1.7"/><line x1="10.4" y1="25.6" x2="25.7" y2="10.3" stroke="#dde3de" stroke-width="1.7"/></svg>
<svg class="a" style="left:1298.5px;top:605.9px;" width="34" height="34" viewBox="0 0 34 34"><circle cx="17" cy="17" r="13.5" fill="none" stroke="#eef3ef" stroke-width="3"/><line x1="14" y1="17" x2="4.8" y2="17" stroke="#eef3ef" stroke-width="2.8"/></svg>
<div class="t m" style="left:1300.73px;top:644.53px;font-size:16.6px;line-height:16.6px;color:#eef3ef;transform:scaleX(1.0949);transform-origin:14.77px 0;">Pan</div>
<div class="a" style="left:1240.5px;top:677px;width:59.8px;height:23.8px;background:#010202;border-radius:5px;"></div>
<div class="a" style="left:1330.5px;top:677px;width:59.8px;height:23.8px;background:#010202;border-radius:5px;"></div>
<div class="t m" style="left:1254.46px;top:681.82px;font-size:17.2px;line-height:17.2px;color:#64ec9a;letter-spacing:0.75px;transform:scaleX(1.0800);transform-origin:15.94px 0;">-1.8</div>
<div class="t m" style="left:1347.33px;top:681.82px;font-size:17.2px;line-height:17.2px;color:#64ec9a;letter-spacing:0.75px;transform:scaleX(1.0500);transform-origin:13.07px 0;">-inf</div>
<div class="t m" style="left:1232.44px;top:717.16px;font-size:14.8px;line-height:14.8px;color:#8b918d;transform:scaleX(0.8687);transform-origin:16.46px 0;">12</div>
<div class="t m" style="left:1240.67px;top:760.86px;font-size:14.8px;line-height:14.8px;color:#8b918d;">0</div>
<div class="t" style="left:1236.47px;top:892.35px;font-size:18px;line-height:18px;color:#8b918d;transform:scaleX(1.1923);transform-origin:12.83px 0;">∞</div>
<div class="a" style="left:1252.5px;top:723.85px;width:6px;height:1.5px;background:#8b918d;"></div>
<div class="a" style="left:1252.5px;top:767.55px;width:6px;height:1.5px;background:#8b918d;"></div>
<div class="a" style="left:1252.5px;top:900.85px;width:6px;height:1.5px;background:#8b918d;"></div>
<div class="a" style="left:1268.8px;top:726px;width:3px;height:178.5px;background:#050505;"></div>
<div class="a" style="left:1350.2px;top:713px;width:20.9px;height:191.5px;background:#030303;"></div>
<div class="a" style="left:1260.1px;top:757.6px;width:20.7px;height:36.8px;background:#f2fbf4;border-radius:4px;"></div>
<div class="a" style="left:1260.1px;top:774.9px;width:20.7px;height:2.6px;background:#0c0d0c;"></div>
<div class="a" style="left:1225.5px;top:924.3px;width:180.5px;height:2.1px;background:#737a75;"></div>
<div class="a" style="left:1225.5px;top:928.8px;width:180.5px;height:36px;background:#252726;border-radius:0 0 6px 6px;"></div>
<div class="t m" style="left:1237.8px;top:936.64px;font-size:18.6px;line-height:18.6px;color:#eef3ef;transform:scaleX(0.9697);transform-origin:0 0;">Stereo 11/12</div>
<svg class="a" style="left:1379.5px;top:939px;" width="16" height="14" viewBox="0 0 16 14"><path d="M3.4 5 L8 9.6 L12.6 5" fill="none" stroke="#9ba19d" stroke-width="1.6"/></svg>
<div class="a" style="left:1408.5px;top:138.75px;width:180.5px;height:826px;background:#111312;"></div>
<div class="a" style="left:1408.5px;top:102.2px;width:180.5px;height:36.3px;background:#e5dfa9;border-radius:5.5px 5.5px 0 0;"></div>
<svg class="a" style="left:1408.5px;top:102.2px;" width="180.5" height="36.3" viewBox="0 0 180.5 36.3"><circle cx="12.4" cy="14" r="1.6" fill="#111"/><circle cx="16.8" cy="14" r="1.6" fill="#111"/><circle cx="21.2" cy="14" r="1.6" fill="#111"/><circle cx="12.4" cy="18.4" r="1.6" fill="#111"/><circle cx="16.8" cy="18.4" r="1.6" fill="#111"/><circle cx="21.2" cy="18.4" r="1.6" fill="#111"/><circle cx="12.4" cy="22.8" r="1.6" fill="#111"/><circle cx="16.8" cy="22.8" r="1.6" fill="#111"/><circle cx="21.2" cy="22.8" r="1.6" fill="#111"/><circle cx="157.4" cy="14" r="1.6" fill="#111"/><circle cx="161.8" cy="14" r="1.6" fill="#111"/><circle cx="166.2" cy="14" r="1.6" fill="#111"/><circle cx="157.4" cy="18.4" r="1.6" fill="#111"/><circle cx="161.8" cy="18.4" r="1.6" fill="#111"/><circle cx="166.2" cy="18.4" r="1.6" fill="#111"/><circle cx="157.4" cy="22.8" r="1.6" fill="#111"/><circle cx="161.8" cy="22.8" r="1.6" fill="#111"/><circle cx="166.2" cy="22.8" r="1.6" fill="#111"/></svg>
<div class="t m" style="left:1450.1px;top:110.51px;font-size:18.4px;line-height:18.4px;color:#0d0f0e;transform:scaleX(0.9850);transform-origin:48.4px 0;">Rack Tom 2</div>
<div class="t m" style="left:1421px;top:151.7px;font-size:17.7px;line-height:17.7px;color:#959b97;transform:scaleX(1.0306);transform-origin:0 0;">Rack Tom 2</div>
<div class="a" style="left:1408.5px;top:177px;width:180.5px;height:2.25px;background:#737a75;"></div>
<div class="a" style="left:1408.5px;top:180.4px;width:180.5px;height:36.1px;background:#3b3e3c;border-radius:6px;"></div>
<div class="a" style="left:1445.1px;top:180.4px;width:1.3px;height:36.1px;background:#171918;"></div>
<svg class="a" style="left:1408.5px;top:180.4px;" width="36" height="36" viewBox="0 0 36 36"><path d="M14.77 12.14 A7.4 7.4 0 1 0 22.83 12.14" fill="none" stroke="#eef3ef" stroke-width="2.3" stroke-linecap="round"/><line x1="18.8" y1="7.55" x2="18.8" y2="19.65" stroke="#eef3ef" stroke-width="2.5" stroke-linecap="butt"/></svg>
<div class="t m" style="left:1458px;top:191.04px;font-size:17.6px;line-height:17.6px;color:#eef3ef;transform:scaleX(0.9157);transform-origin:0 0;">EQ</div>
<div class="a" style="left:1408.5px;top:217.9px;width:180.5px;height:36.1px;background:#3b3e3c;border-radius:6px;"></div>
<div class="a" style="left:1445.1px;top:217.9px;width:1.3px;height:36.1px;background:#171918;"></div>
<svg class="a" style="left:1408.5px;top:217.9px;" width="36" height="36" viewBox="0 0 36 36"><path d="M14.77 12.14 A7.4 7.4 0 1 0 22.83 12.14" fill="none" stroke="#eef3ef" stroke-width="2.3" stroke-linecap="round"/><line x1="18.8" y1="7.55" x2="18.8" y2="19.65" stroke="#eef3ef" stroke-width="2.5" stroke-linecap="butt"/></svg>
<div class="t m" style="left:1458px;top:228.54px;font-size:17.6px;line-height:17.6px;color:#eef3ef;transform:scaleX(0.9157);transform-origin:0 0;">EQ</div>
<div class="a" style="left:1408.5px;top:255.4px;width:180.5px;height:36.1px;background:#3b3e3c;border-radius:6px;"></div>
<div class="a" style="left:1445.1px;top:255.4px;width:1.3px;height:36.1px;background:#171918;"></div>
<svg class="a" style="left:1408.5px;top:255.4px;" width="36" height="36" viewBox="0 0 36 36"><path d="M14.77 12.14 A7.4 7.4 0 1 0 22.83 12.14" fill="none" stroke="#eef3ef" stroke-width="2.3" stroke-linecap="round"/><line x1="18.8" y1="7.55" x2="18.8" y2="19.65" stroke="#eef3ef" stroke-width="2.5" stroke-linecap="butt"/></svg>
<div class="t m" style="left:1458px;top:266.04px;font-size:17.6px;line-height:17.6px;color:#eef3ef;transform:scaleX(1.1107);transform-origin:0 0;">Transient</div>
<div class="a" style="left:1408.5px;top:292.9px;width:180.5px;height:36.1px;background:#3b3e3c;border-radius:6px;"></div>
<div class="a" style="left:1445.1px;top:292.9px;width:1.3px;height:36.1px;background:#171918;"></div>
<svg class="a" style="left:1408.5px;top:292.9px;" width="36" height="36" viewBox="0 0 36 36"><path d="M14.77 12.14 A7.4 7.4 0 1 0 22.83 12.14" fill="none" stroke="#eef3ef" stroke-width="2.3" stroke-linecap="round"/><line x1="18.8" y1="7.55" x2="18.8" y2="19.65" stroke="#eef3ef" stroke-width="2.5" stroke-linecap="butt"/></svg>
<div class="t m" style="left:1458px;top:303.54px;font-size:17.6px;line-height:17.6px;color:#eef3ef;transform:scaleX(0.9157);transform-origin:0 0;">EQ</div>
<div class="a" style="left:1408.5px;top:330.4px;width:180.5px;height:36.1px;background:#3b3e3c;border-radius:6px;"></div>
<div class="a" style="left:1445.1px;top:330.4px;width:1.3px;height:36.1px;background:#171918;"></div>
<svg class="a" style="left:1408.5px;top:330.4px;" width="36" height="36" viewBox="0 0 36 36"><path d="M14.77 12.14 A7.4 7.4 0 1 0 22.83 12.14" fill="none" stroke="#eef3ef" stroke-width="2.3" stroke-linecap="round"/><line x1="18.8" y1="7.55" x2="18.8" y2="19.65" stroke="#eef3ef" stroke-width="2.5" stroke-linecap="butt"/></svg>
<div class="t m" style="left:1458px;top:341.04px;font-size:17.6px;line-height:17.6px;color:#eef3ef;transform:scaleX(1.0599);transform-origin:0 0;">Mod. Comp</div>
<div class="a" style="left:1408.5px;top:367.9px;width:180.5px;height:36.1px;background:#3b3e3c;border-radius:6px;"></div>
<div class="a" style="left:1445.1px;top:367.9px;width:1.3px;height:36.1px;background:#171918;"></div>
<svg class="a" style="left:1408.5px;top:367.9px;" width="36" height="36" viewBox="0 0 36 36"><path d="M14.77 12.14 A7.4 7.4 0 1 0 22.83 12.14" fill="none" stroke="#eef3ef" stroke-width="2.3" stroke-linecap="round"/><line x1="18.8" y1="7.55" x2="18.8" y2="19.65" stroke="#eef3ef" stroke-width="2.5" stroke-linecap="butt"/></svg>
<div class="t m" style="left:1458px;top:378.54px;font-size:17.6px;line-height:17.6px;color:#eef3ef;transform:scaleX(1.0998);transform-origin:0 0;">Drive</div>
<div class="a" style="left:1408.5px;top:405px;width:180.5px;height:2.1px;background:#737a75;"></div>
<div class="a" style="left:1408.5px;top:408.75px;width:128.8px;height:35.75px;background:#3b3e3c;border-radius:6px;overflow:hidden;">
<div class="a" style="left:36.6px;top:0;width:1.3px;height:36px;background:#171918"></div>
<svg class="a" style="left:0;top:0" width="36" height="36"><path d="M14.77 11.89 A7.4 7.4 0 1 0 22.83 11.89" fill="none" stroke="#eef3ef" stroke-width="2.3" stroke-linecap="round"/><line x1="18.8" y1="7.3" x2="18.8" y2="19.4" stroke="#eef3ef" stroke-width="2.5" stroke-linecap="butt"/></svg>
<div class="t m" style="left:49.5px;top:10.29px;font-size:17.6px;line-height:17.6px;color:#eef3ef;transform:scaleX(1.0705);transform-origin:0 0;">Reverb</div>
</div>
<svg class="a" style="left:1539.5px;top:408.75px;" width="50" height="36" viewBox="0 0 50 36"><circle cx="15.7" cy="17.6" r="10.6" fill="none" stroke="#eef3ef" stroke-width="2.9"/><line x1="14.43" y1="16.33" x2="8.49" y2="10.39" stroke="#eef3ef" stroke-width="2.9"/><path d="M32.4 17.6 H43.6 M38.3 12.4 L43.6 17.6 L38.3 22.8" fill="none" stroke="#7d837f" stroke-width="2.1" stroke-linecap="round" stroke-linejoin="round"/></svg>
<div class="a" style="left:1408.5px;top:446.25px;width:128.8px;height:35.75px;background:#3b3e3c;border-radius:6px;overflow:hidden;">
<div class="a" style="left:36.6px;top:0;width:1.3px;height:36px;background:#171918"></div>
<svg class="a" style="left:0;top:0" width="36" height="36"><path d="M14.77 11.89 A7.4 7.4 0 1 0 22.83 11.89" fill="none" stroke="#eef3ef" stroke-width="2.3" stroke-linecap="round"/><line x1="18.8" y1="7.3" x2="18.8" y2="19.4" stroke="#eef3ef" stroke-width="2.5" stroke-linecap="butt"/></svg>
<div class="t m" style="left:49.5px;top:10.29px;font-size:17.6px;line-height:17.6px;color:#eef3ef;transform:scaleX(0.9715);transform-origin:0 0;">PRL Comp</div>
</div>
<svg class="a" style="left:1539.5px;top:446.25px;" width="50" height="36" viewBox="0 0 50 36"><circle cx="15.7" cy="17.6" r="10.6" fill="none" stroke="#eef3ef" stroke-width="2.9"/><line x1="14.67" y1="16.13" x2="9.85" y2="9.24" stroke="#eef3ef" stroke-width="2.9"/><path d="M32.4 17.6 H43.6 M38.3 12.4 L43.6 17.6 L38.3 22.8" fill="none" stroke="#7d837f" stroke-width="2.1" stroke-linecap="round" stroke-linejoin="round"/></svg>
<div class="a" style="left:1413.2px;top:486.35px;width:170.2px;height:30px;background:#0e100f;border-radius:6px;box-sizing:border-box;border:1.8px solid #404543;"></div>
<svg class="a" style="left:1488.5px;top:491.75px;" width="20" height="20" viewBox="0 0 20 20"><path d="M10 3.7 V16.3 M3.7 10 H16.3" stroke="#a7aca8" stroke-width="1.5"/></svg>
<div class="a" style="left:1413.2px;top:523.85px;width:170.2px;height:30px;background:#0e100f;border-radius:6px;box-sizing:border-box;border:1.8px solid #404543;"></div>
<svg class="a" style="left:1488.5px;top:529.25px;" width="20" height="20" viewBox="0 0 20 20"><path d="M10 3.7 V16.3 M3.7 10 H16.3" stroke="#a7aca8" stroke-width="1.5"/></svg>
<div class="a" style="left:1408.5px;top:558px;width:180.5px;height:2.1px;background:#737a75;"></div>
<div class="a" style="left:1438.5px;top:566px;width:35.5px;height:35.5px;background:#262827;border-radius:5px;"></div>
<div class="a" style="left:1480.5px;top:566px;width:35.5px;height:35.5px;background:#262827;border-radius:5px;"></div>
<div class="a" style="left:1522.7px;top:566px;width:35.5px;height:35.5px;background:#262827;border-radius:5px;"></div>
<div class="t" style="left:1448.96px;top:574.57px;font-size:17.5px;line-height:17.5px;color:#dde3de;">M</div>
<div class="t" style="left:1492.51px;top:574.57px;font-size:17.5px;line-height:17.5px;color:#dde3de;">S</div>
<svg class="a" style="left:1522.7px;top:566px;" width="35.5" height="35.5" viewBox="0 0 35.5 35.5"><circle cx="17.9" cy="18" r="6.9" fill="none" stroke="#dde3de" stroke-width="1.7"/><line x1="10.4" y1="25.6" x2="25.7" y2="10.3" stroke="#dde3de" stroke-width="1.7"/></svg>
<svg class="a" style="left:1481.5px;top:605.9px;" width="34" height="34" viewBox="0 0 34 34"><circle cx="17" cy="17" r="13.5" fill="none" stroke="#eef3ef" stroke-width="3"/><line x1="14.99" y1="14.77" x2="8.84" y2="7.93" stroke="#eef3ef" stroke-width="2.8"/></svg>
<div class="t m" style="left:1483.73px;top:644.53px;font-size:16.6px;line-height:16.6px;color:#eef3ef;transform:scaleX(1.0949);transform-origin:14.77px 0;">Pan</div>
<div class="a" style="left:1423.5px;top:677px;width:59.8px;height:23.8px;background:#010202;border-radius:5px;"></div>
<div class="a" style="left:1513.5px;top:677px;width:59.8px;height:23.8px;background:#010202;border-radius:5px;"></div>
<div class="t m" style="left:1437.46px;top:681.82px;font-size:17.2px;line-height:17.2px;color:#64ec9a;letter-spacing:0.75px;transform:scaleX(1.0800);transform-origin:15.94px 0;">-1.6</div>
<div class="t m" style="left:1530.33px;top:681.82px;font-size:17.2px;line-height:17.2px;color:#64ec9a;letter-spacing:0.75px;transform:scaleX(1.0500);transform-origin:13.07px 0;">-inf</div>
<div class="t m" style="left:1415.44px;top:717.16px;font-size:14.8px;line-height:14.8px;color:#8b918d;transform:scaleX(0.8687);transform-origin:16.46px 0;">12</div>
<div class="t m" style="left:1423.67px;top:760.86px;font-size:14.8px;line-height:14.8px;color:#8b918d;">0</div>
<div class="t" style="left:1419.47px;top:892.35px;font-size:18px;line-height:18px;color:#8b918d;transform:scaleX(1.1923);transform-origin:12.83px 0;">∞</div>
<div class="a" style="left:1435.5px;top:723.85px;width:6px;height:1.5px;background:#8b918d;"></div>
<div class="a" style="left:1435.5px;top:767.55px;width:6px;height:1.5px;background:#8b918d;"></div>
<div class="a" style="left:1435.5px;top:900.85px;width:6px;height:1.5px;background:#8b918d;"></div>
<div class="a" style="left:1451.8px;top:726px;width:3px;height:178.5px;background:#050505;"></div>
<div class="a" style="left:1533.2px;top:713px;width:20.9px;height:191.5px;background:#030303;"></div>
<div class="a" style="left:1443.1px;top:756.5px;width:20.7px;height:36.8px;background:#f2fbf4;border-radius:4px;"></div>
<div class="a" style="left:1443.1px;top:773.8px;width:20.7px;height:2.6px;background:#0c0d0c;"></div>
<div class="a" style="left:1408.5px;top:924.3px;width:180.5px;height:2.1px;background:#737a75;"></div>
<div class="a" style="left:1408.5px;top:928.8px;width:180.5px;height:36px;background:#252726;border-radius:0 0 6px 6px;"></div>
<div class="t m" style="left:1420.8px;top:936.64px;font-size:18.6px;line-height:18.6px;color:#eef3ef;transform:scaleX(0.9885);transform-origin:0 0;">Stereo 13/14</div>
<svg class="a" style="left:1562.5px;top:939px;" width="16" height="14" viewBox="0 0 16 14"><path d="M3.4 5 L8 9.6 L12.6 5" fill="none" stroke="#9ba19d" stroke-width="1.6"/></svg>
<div class="a" style="left:1591.5px;top:138.75px;width:180.5px;height:826px;background:#111312;"></div>
<div class="a" style="left:1591.5px;top:102.2px;width:180.5px;height:36.3px;background:#e5dfa9;border-radius:5.5px 5.5px 0 0;"></div>
<svg class="a" style="left:1591.5px;top:102.2px;" width="180.5" height="36.3" viewBox="0 0 180.5 36.3"><circle cx="12.4" cy="14" r="1.6" fill="#111"/><circle cx="16.8" cy="14" r="1.6" fill="#111"/><circle cx="21.2" cy="14" r="1.6" fill="#111"/><circle cx="12.4" cy="18.4" r="1.6" fill="#111"/><circle cx="16.8" cy="18.4" r="1.6" fill="#111"/><circle cx="21.2" cy="18.4" r="1.6" fill="#111"/><circle cx="12.4" cy="22.8" r="1.6" fill="#111"/><circle cx="16.8" cy="22.8" r="1.6" fill="#111"/><circle cx="21.2" cy="22.8" r="1.6" fill="#111"/><circle cx="157.4" cy="14" r="1.6" fill="#111"/><circle cx="161.8" cy="14" r="1.6" fill="#111"/><circle cx="166.2" cy="14" r="1.6" fill="#111"/><circle cx="157.4" cy="18.4" r="1.6" fill="#111"/><circle cx="161.8" cy="18.4" r="1.6" fill="#111"/><circle cx="166.2" cy="18.4" r="1.6" fill="#111"/><circle cx="157.4" cy="22.8" r="1.6" fill="#111"/><circle cx="161.8" cy="22.8" r="1.6" fill="#111"/><circle cx="166.2" cy="22.8" r="1.6" fill="#111"/></svg>
<div class="t m" style="left:1633.1px;top:110.51px;font-size:18.4px;line-height:18.4px;color:#0d0f0e;transform:scaleX(0.9907);transform-origin:48.4px 0;">Floor Tom 1</div>
<div class="t m" style="left:1604px;top:151.7px;font-size:17.7px;line-height:17.7px;color:#959b97;transform:scaleX(1.0365);transform-origin:0 0;">Floor Tom 1</div>
<div class="a" style="left:1591.5px;top:177px;width:180.5px;height:2.25px;background:#737a75;"></div>
<div class="a" style="left:1591.5px;top:180.4px;width:180.5px;height:36.1px;background:#3b3e3c;border-radius:6px;"></div>
<div class="a" style="left:1628.1px;top:180.4px;width:1.3px;height:36.1px;background:#171918;"></div>
<svg class="a" style="left:1591.5px;top:180.4px;" width="36" height="36" viewBox="0 0 36 36"><path d="M14.77 12.14 A7.4 7.4 0 1 0 22.83 12.14" fill="none" stroke="#eef3ef" stroke-width="2.3" stroke-linecap="round"/><line x1="18.8" y1="7.55" x2="18.8" y2="19.65" stroke="#eef3ef" stroke-width="2.5" stroke-linecap="butt"/></svg>
<div class="t m" style="left:1641px;top:191.04px;font-size:17.6px;line-height:17.6px;color:#eef3ef;transform:scaleX(0.9157);transform-origin:0 0;">EQ</div>
<div class="a" style="left:1591.5px;top:217.9px;width:180.5px;height:36.1px;background:#3b3e3c;border-radius:6px;"></div>
<div class="a" style="left:1628.1px;top:217.9px;width:1.3px;height:36.1px;background:#171918;"></div>
<svg class="a" style="left:1591.5px;top:217.9px;" width="36" height="36" viewBox="0 0 36 36"><path d="M14.77 12.14 A7.4 7.4 0 1 0 22.83 12.14" fill="none" stroke="#eef3ef" stroke-width="2.3" stroke-linecap="round"/><line x1="18.8" y1="7.55" x2="18.8" y2="19.65" stroke="#eef3ef" stroke-width="2.5" stroke-linecap="butt"/></svg>
<div class="t m" style="left:1641px;top:228.54px;font-size:17.6px;line-height:17.6px;color:#eef3ef;transform:scaleX(0.9157);transform-origin:0 0;">EQ</div>
<div class="a" style="left:1591.5px;top:255.4px;width:180.5px;height:36.1px;background:#3b3e3c;border-radius:6px;"></div>
<div class="a" style="left:1628.1px;top:255.4px;width:1.3px;height:36.1px;background:#171918;"></div>
<svg class="a" style="left:1591.5px;top:255.4px;" width="36" height="36" viewBox="0 0 36 36"><path d="M14.77 12.14 A7.4 7.4 0 1 0 22.83 12.14" fill="none" stroke="#eef3ef" stroke-width="2.3" stroke-linecap="round"/><line x1="18.8" y1="7.55" x2="18.8" y2="19.65" stroke="#eef3ef" stroke-width="2.5" stroke-linecap="butt"/></svg>
<div class="t m" style="left:1641px;top:266.04px;font-size:17.6px;line-height:17.6px;color:#eef3ef;transform:scaleX(1.1107);transform-origin:0 0;">Transient</div>
<div class="a" style="left:1591.5px;top:292.9px;width:180.5px;height:36.1px;background:#3b3e3c;border-radius:6px;"></div>
<div class="a" style="left:1628.1px;top:292.9px;width:1.3px;height:36.1px;background:#171918;"></div>
<svg class="a" style="left:1591.5px;top:292.9px;" width="36" height="36" viewBox="0 0 36 36"><path d="M14.77 12.14 A7.4 7.4 0 1 0 22.83 12.14" fill="none" stroke="#eef3ef" stroke-width="2.3" stroke-linecap="round"/><line x1="18.8" y1="7.55" x2="18.8" y2="19.65" stroke="#eef3ef" stroke-width="2.5" stroke-linecap="butt"/></svg>
<div class="t m" style="left:1641px;top:303.54px;font-size:17.6px;line-height:17.6px;color:#eef3ef;transform:scaleX(0.9157);transform-origin:0 0;">EQ</div>
<div class="a" style="left:1591.5px;top:330.4px;width:180.5px;height:36.1px;background:#3b3e3c;border-radius:6px;"></div>
<div class="a" style="left:1628.1px;top:330.4px;width:1.3px;height:36.1px;background:#171918;"></div>
<svg class="a" style="left:1591.5px;top:330.4px;" width="36" height="36" viewBox="0 0 36 36"><path d="M14.77 12.14 A7.4 7.4 0 1 0 22.83 12.14" fill="none" stroke="#eef3ef" stroke-width="2.3" stroke-linecap="round"/><line x1="18.8" y1="7.55" x2="18.8" y2="19.65" stroke="#eef3ef" stroke-width="2.5" stroke-linecap="butt"/></svg>
<div class="t m" style="left:1641px;top:341.04px;font-size:17.6px;line-height:17.6px;color:#eef3ef;transform:scaleX(1.0599);transform-origin:0 0;">Mod. Comp</div>
<div class="a" style="left:1591.5px;top:367.9px;width:180.5px;height:36.1px;background:#3b3e3c;border-radius:6px;"></div>
<div class="a" style="left:1628.1px;top:367.9px;width:1.3px;height:36.1px;background:#171918;"></div>
<svg class="a" style="left:1591.5px;top:367.9px;" width="36" height="36" viewBox="0 0 36 36"><path d="M14.77 12.14 A7.4 7.4 0 1 0 22.83 12.14" fill="none" stroke="#eef3ef" stroke-width="2.3" stroke-linecap="round"/><line x1="18.8" y1="7.55" x2="18.8" y2="19.65" stroke="#eef3ef" stroke-width="2.5" stroke-linecap="butt"/></svg>
<div class="t m" style="left:1641px;top:378.54px;font-size:17.6px;line-height:17.6px;color:#eef3ef;transform:scaleX(1.0998);transform-origin:0 0;">Drive</div>
<div class="a" style="left:1591.5px;top:405px;width:180.5px;height:2.1px;background:#737a75;"></div>
<div class="a" style="left:1591.5px;top:408.75px;width:128.8px;height:35.75px;background:#3b3e3c;border-radius:6px;overflow:hidden;">
<div class="a" style="left:36.6px;top:0;width:1.3px;height:36px;background:#171918"></div>
<svg class="a" style="left:0;top:0" width="36" height="36"><path d="M14.77 11.89 A7.4 7.4 0 1 0 22.83 11.89" fill="none" stroke="#eef3ef" stroke-width="2.3" stroke-linecap="round"/><line x1="18.8" y1="7.3" x2="18.8" y2="19.4" stroke="#eef3ef" stroke-width="2.5" stroke-linecap="butt"/></svg>
<div class="t m" style="left:49.5px;top:10.29px;font-size:17.6px;line-height:17.6px;color:#eef3ef;transform:scaleX(1.0705);transform-origin:0 0;">Reverb</div>
</div>
<svg class="a" style="left:1722.5px;top:408.75px;" width="50" height="36" viewBox="0 0 50 36"><circle cx="15.7" cy="17.6" r="10.6" fill="none" stroke="#eef3ef" stroke-width="2.9"/><line x1="14.43" y1="16.33" x2="8.49" y2="10.39" stroke="#eef3ef" stroke-width="2.9"/><path d="M32.4 17.6 H43.6 M38.3 12.4 L43.6 17.6 L38.3 22.8" fill="none" stroke="#7d837f" stroke-width="2.1" stroke-linecap="round" stroke-linejoin="round"/></svg>
<div class="a" style="left:1591.5px;top:446.25px;width:128.8px;height:35.75px;background:#3b3e3c;border-radius:6px;overflow:hidden;">
<div class="a" style="left:36.6px;top:0;width:1.3px;height:36px;background:#171918"></div>
<svg class="a" style="left:0;top:0" width="36" height="36"><path d="M14.77 11.89 A7.4 7.4 0 1 0 22.83 11.89" fill="none" stroke="#eef3ef" stroke-width="2.3" stroke-linecap="round"/><line x1="18.8" y1="7.3" x2="18.8" y2="19.4" stroke="#eef3ef" stroke-width="2.5" stroke-linecap="butt"/></svg>
<div class="t m" style="left:49.5px;top:10.29px;font-size:17.6px;line-height:17.6px;color:#eef3ef;transform:scaleX(0.9715);transform-origin:0 0;">PRL Comp</div>
</div>
<svg class="a" style="left:1722.5px;top:446.25px;" width="50" height="36" viewBox="0 0 50 36"><circle cx="15.7" cy="17.6" r="10.6" fill="none" stroke="#eef3ef" stroke-width="2.9"/><line x1="14.67" y1="16.13" x2="9.85" y2="9.24" stroke="#eef3ef" stroke-width="2.9"/><path d="M32.4 17.6 H43.6 M38.3 12.4 L43.6 17.6 L38.3 22.8" fill="none" stroke="#7d837f" stroke-width="2.1" stroke-linecap="round" stroke-linejoin="round"/></svg>
<div class="a" style="left:1596.2px;top:486.35px;width:170.2px;height:30px;background:#0e100f;border-radius:6px;box-sizing:border-box;border:1.8px solid #404543;"></div>
<svg class="a" style="left:1671.5px;top:491.75px;" width="20" height="20" viewBox="0 0 20 20"><path d="M10 3.7 V16.3 M3.7 10 H16.3" stroke="#a7aca8" stroke-width="1.5"/></svg>
<div class="a" style="left:1596.2px;top:523.85px;width:170.2px;height:30px;background:#0e100f;border-radius:6px;box-sizing:border-box;border:1.8px solid #404543;"></div>
<svg class="a" style="left:1671.5px;top:529.25px;" width="20" height="20" viewBox="0 0 20 20"><path d="M10 3.7 V16.3 M3.7 10 H16.3" stroke="#a7aca8" stroke-width="1.5"/></svg>
<div class="a" style="left:1591.5px;top:558px;width:180.5px;height:2.1px;background:#737a75;"></div>
<div class="a" style="left:1621.5px;top:566px;width:35.5px;height:35.5px;background:#262827;border-radius:5px;"></div>
<div class="a" style="left:1663.5px;top:566px;width:35.5px;height:35.5px;background:#262827;border-radius:5px;"></div>
<div class="a" style="left:1705.7px;top:566px;width:35.5px;height:35.5px;background:#262827;border-radius:5px;"></div>
<div class="t" style="left:1631.96px;top:574.57px;font-size:17.5px;line-height:17.5px;color:#dde3de;">M</div>
<div class="t" style="left:1675.51px;top:574.57px;font-size:17.5px;line-height:17.5px;color:#dde3de;">S</div>
<svg class="a" style="left:1705.7px;top:566px;" width="35.5" height="35.5" viewBox="0 0 35.5 35.5"><circle cx="17.9" cy="18" r="6.9" fill="none" stroke="#dde3de" stroke-width="1.7"/><line x1="10.4" y1="25.6" x2="25.7" y2="10.3" stroke="#dde3de" stroke-width="1.7"/></svg>
<svg class="a" style="left:1664.5px;top:605.9px;" width="34" height="34" viewBox="0 0 34 34"><circle cx="17" cy="17" r="13.5" fill="none" stroke="#eef3ef" stroke-width="3"/><line x1="20" y1="17" x2="29.2" y2="17" stroke="#eef3ef" stroke-width="2.8"/></svg>
<div class="t m" style="left:1666.73px;top:644.53px;font-size:16.6px;line-height:16.6px;color:#eef3ef;transform:scaleX(1.0949);transform-origin:14.77px 0;">Pan</div>
<div class="a" style="left:1606.5px;top:677px;width:59.8px;height:23.8px;background:#010202;border-radius:5px;"></div>
<div class="a" style="left:1696.5px;top:677px;width:59.8px;height:23.8px;background:#010202;border-radius:5px;"></div>
<div class="t m" style="left:1620.46px;top:681.82px;font-size:17.2px;line-height:17.2px;color:#64ec9a;letter-spacing:0.75px;transform:scaleX(1.0800);transform-origin:15.94px 0;">-1.6</div>
<div class="t m" style="left:1713.33px;top:681.82px;font-size:17.2px;line-height:17.2px;color:#64ec9a;letter-spacing:0.75px;transform:scaleX(1.0500);transform-origin:13.07px 0;">-inf</div>
<div class="t m" style="left:1598.44px;top:717.16px;font-size:14.8px;line-height:14.8px;color:#8b918d;transform:scaleX(0.8687);transform-origin:16.46px 0;">12</div>
<div class="t m" style="left:1606.67px;top:760.86px;font-size:14.8px;line-height:14.8px;color:#8b918d;">0</div>
<div class="t" style="left:1602.47px;top:892.35px;font-size:18px;line-height:18px;color:#8b918d;transform:scaleX(1.1923);transform-origin:12.83px 0;">∞</div>
<div class="a" style="left:1618.5px;top:723.85px;width:6px;height:1.5px;background:#8b918d;"></div>
<div class="a" style="left:1618.5px;top:767.55px;width:6px;height:1.5px;background:#8b918d;"></div>
<div class="a" style="left:1618.5px;top:900.85px;width:6px;height:1.5px;background:#8b918d;"></div>
<div class="a" style="left:1634.8px;top:726px;width:3px;height:178.5px;background:#050505;"></div>
<div class="a" style="left:1716.2px;top:713px;width:20.9px;height:191.5px;background:#030303;"></div>
<div class="a" style="left:1626.1px;top:756.5px;width:20.7px;height:36.8px;background:#f2fbf4;border-radius:4px;"></div>
<div class="a" style="left:1626.1px;top:773.8px;width:20.7px;height:2.6px;background:#0c0d0c;"></div>
<div class="a" style="left:1591.5px;top:924.3px;width:180.5px;height:2.1px;background:#737a75;"></div>
<div class="a" style="left:1591.5px;top:928.8px;width:180.5px;height:36px;background:#252726;border-radius:0 0 6px 6px;"></div>
<div class="t m" style="left:1603.8px;top:936.64px;font-size:18.6px;line-height:18.6px;color:#eef3ef;transform:scaleX(0.9885);transform-origin:0 0;">Stereo 15/16</div>
<svg class="a" style="left:1745.5px;top:939px;" width="16" height="14" viewBox="0 0 16 14"><path d="M3.4 5 L8 9.6 L12.6 5" fill="none" stroke="#9ba19d" stroke-width="1.6"/></svg>
<div class="a" style="left:1774.5px;top:138.75px;width:180.5px;height:826px;background:#111312;"></div>
<div class="a" style="left:1774.5px;top:102.2px;width:180.5px;height:36.3px;background:#e5dfa9;border-radius:5.5px 5.5px 0 0;"></div>
<svg class="a" style="left:1774.5px;top:102.2px;" width="180.5" height="36.3" viewBox="0 0 180.5 36.3"><circle cx="12.4" cy="14" r="1.6" fill="#111"/><circle cx="16.8" cy="14" r="1.6" fill="#111"/><circle cx="21.2" cy="14" r="1.6" fill="#111"/><circle cx="12.4" cy="18.4" r="1.6" fill="#111"/><circle cx="16.8" cy="18.4" r="1.6" fill="#111"/><circle cx="21.2" cy="18.4" r="1.6" fill="#111"/><circle cx="12.4" cy="22.8" r="1.6" fill="#111"/><circle cx="16.8" cy="22.8" r="1.6" fill="#111"/><circle cx="21.2" cy="22.8" r="1.6" fill="#111"/><circle cx="157.4" cy="14" r="1.6" fill="#111"/><circle cx="161.8" cy="14" r="1.6" fill="#111"/><circle cx="166.2" cy="14" r="1.6" fill="#111"/><circle cx="157.4" cy="18.4" r="1.6" fill="#111"/><circle cx="161.8" cy="18.4" r="1.6" fill="#111"/><circle cx="166.2" cy="18.4" r="1.6" fill="#111"/><circle cx="157.4" cy="22.8" r="1.6" fill="#111"/><circle cx="161.8" cy="22.8" r="1.6" fill="#111"/><circle cx="166.2" cy="22.8" r="1.6" fill="#111"/></svg>
<div class="t m" style="left:1816.1px;top:110.51px;font-size:18.4px;line-height:18.4px;color:#0d0f0e;transform:scaleX(1.0110);transform-origin:48.4px 0;">Floor Tom 2</div>
<div class="t m" style="left:1787px;top:151.7px;font-size:17.7px;line-height:17.7px;color:#959b97;transform:scaleX(1.0576);transform-origin:0 0;">Floor Tom 2</div>
<div class="a" style="left:1774.5px;top:177px;width:180.5px;height:2.25px;background:#737a75;"></div>
<div class="a" style="left:1774.5px;top:180.4px;width:180.5px;height:36.1px;background:#3b3e3c;border-radius:6px;"></div>
<div class="a" style="left:1811.1px;top:180.4px;width:1.3px;height:36.1px;background:#171918;"></div>
<svg class="a" style="left:1774.5px;top:180.4px;" width="36" height="36" viewBox="0 0 36 36"><path d="M14.77 12.14 A7.4 7.4 0 1 0 22.83 12.14" fill="none" stroke="#eef3ef" stroke-width="2.3" stroke-linecap="round"/><line x1="18.8" y1="7.55" x2="18.8" y2="19.65" stroke="#eef3ef" stroke-width="2.5" stroke-linecap="butt"/></svg>
<div class="t m" style="left:1824px;top:191.04px;font-size:17.6px;line-height:17.6px;color:#eef3ef;transform:scaleX(0.9157);transform-origin:0 0;">EQ</div>
<div class="a" style="left:1774.5px;top:217.9px;width:180.5px;height:36.1px;background:#3b3e3c;border-radius:6px;"></div>
<div class="a" style="left:1811.1px;top:217.9px;width:1.3px;height:36.1px;background:#171918;"></div>
<svg class="a" style="left:1774.5px;top:217.9px;" width="36" height="36" viewBox="0 0 36 36"><path d="M14.77 12.14 A7.4 7.4 0 1 0 22.83 12.14" fill="none" stroke="#eef3ef" stroke-width="2.3" stroke-linecap="round"/><line x1="18.8" y1="7.55" x2="18.8" y2="19.65" stroke="#eef3ef" stroke-width="2.5" stroke-linecap="butt"/></svg>
<div class="t m" style="left:1824px;top:228.54px;font-size:17.6px;line-height:17.6px;color:#eef3ef;transform:scaleX(0.9157);transform-origin:0 0;">EQ</div>
<div class="a" style="left:1774.5px;top:255.4px;width:180.5px;height:36.1px;background:#3b3e3c;border-radius:6px;"></div>
<div class="a" style="left:1811.1px;top:255.4px;width:1.3px;height:36.1px;background:#171918;"></div>
<svg class="a" style="left:1774.5px;top:255.4px;" width="36" height="36" viewBox="0 0 36 36"><path d="M14.77 12.14 A7.4 7.4 0 1 0 22.83 12.14" fill="none" stroke="#eef3ef" stroke-width="2.3" stroke-linecap="round"/><line x1="18.8" y1="7.55" x2="18.8" y2="19.65" stroke="#eef3ef" stroke-width="2.5" stroke-linecap="butt"/></svg>
<div class="t m" style="left:1824px;top:266.04px;font-size:17.6px;line-height:17.6px;color:#eef3ef;transform:scaleX(1.1107);transform-origin:0 0;">Transient</div>
<div class="a" style="left:1774.5px;top:292.9px;width:180.5px;height:36.1px;background:#3b3e3c;border-radius:6px;"></div>
<div class="a" style="left:1811.1px;top:292.9px;width:1.3px;height:36.1px;background:#171918;"></div>
<svg class="a" style="left:1774.5px;top:292.9px;" width="36" height="36" viewBox="0 0 36 36"><path d="M14.77 12.14 A7.4 7.4 0 1 0 22.83 12.14" fill="none" stroke="#eef3ef" stroke-width="2.3" stroke-linecap="round"/><line x1="18.8" y1="7.55" x2="18.8" y2="19.65" stroke="#eef3ef" stroke-width="2.5" stroke-linecap="butt"/></svg>
<div class="t m" style="left:1824px;top:303.54px;font-size:17.6px;line-height:17.6px;color:#eef3ef;transform:scaleX(0.9157);transform-origin:0 0;">EQ</div>
<div class="a" style="left:1774.5px;top:330.4px;width:180.5px;height:36.1px;background:#3b3e3c;border-radius:6px;"></div>
<div class="a" style="left:1811.1px;top:330.4px;width:1.3px;height:36.1px;background:#171918;"></div>
<svg class="a" style="left:1774.5px;top:330.4px;" width="36" height="36" viewBox="0 0 36 36"><path d="M14.77 12.14 A7.4 7.4 0 1 0 22.83 12.14" fill="none" stroke="#eef3ef" stroke-width="2.3" stroke-linecap="round"/><line x1="18.8" y1="7.55" x2="18.8" y2="19.65" stroke="#eef3ef" stroke-width="2.5" stroke-linecap="butt"/></svg>
<div class="t m" style="left:1824px;top:341.04px;font-size:17.6px;line-height:17.6px;color:#eef3ef;transform:scaleX(1.0599);transform-origin:0 0;">Mod. Comp</div>
<div class="a" style="left:1774.5px;top:367.9px;width:180.5px;height:36.1px;background:#3b3e3c;border-radius:6px;"></div>
<div class="a" style="left:1811.1px;top:367.9px;width:1.3px;height:36.1px;background:#171918;"></div>
<svg class="a" style="left:1774.5px;top:367.9px;" width="36" height="36" viewBox="0 0 36 36"><path d="M14.77 12.14 A7.4 7.4 0 1 0 22.83 12.14" fill="none" stroke="#eef3ef" stroke-width="2.3" stroke-linecap="round"/><line x1="18.8" y1="7.55" x2="18.8" y2="19.65" stroke="#eef3ef" stroke-width="2.5" stroke-linecap="butt"/></svg>
<div class="t m" style="left:1824px;top:378.54px;font-size:17.6px;line-height:17.6px;color:#eef3ef;transform:scaleX(1.0998);transform-origin:0 0;">Drive</div>
<div class="a" style="left:1774.5px;top:405px;width:180.5px;height:2.1px;background:#737a75;"></div>
<div class="a" style="left:1774.5px;top:408.75px;width:128.8px;height:35.75px;background:#3b3e3c;border-radius:6px;overflow:hidden;">
<div class="a" style="left:36.6px;top:0;width:1.3px;height:36px;background:#171918"></div>
<svg class="a" style="left:0;top:0" width="36" height="36"><path d="M14.77 11.89 A7.4 7.4 0 1 0 22.83 11.89" fill="none" stroke="#eef3ef" stroke-width="2.3" stroke-linecap="round"/><line x1="18.8" y1="7.3" x2="18.8" y2="19.4" stroke="#eef3ef" stroke-width="2.5" stroke-linecap="butt"/></svg>
<div class="t m" style="left:49.5px;top:10.29px;font-size:17.6px;line-height:17.6px;color:#eef3ef;transform:scaleX(1.0705);transform-origin:0 0;">Reverb</div>
</div>
<svg class="a" style="left:1905.5px;top:408.75px;" width="50" height="36" viewBox="0 0 50 36"><circle cx="15.7" cy="17.6" r="10.6" fill="none" stroke="#eef3ef" stroke-width="2.9"/><line x1="14.5" y1="16.26" x2="8.87" y2="10.02" stroke="#eef3ef" stroke-width="2.9"/><path d="M32.4 17.6 H43.6 M38.3 12.4 L43.6 17.6 L38.3 22.8" fill="none" stroke="#7d837f" stroke-width="2.1" stroke-linecap="round" stroke-linejoin="round"/></svg>
<div class="a" style="left:1774.5px;top:446.25px;width:128.8px;height:35.75px;background:#3b3e3c;border-radius:6px;overflow:hidden;">
<div class="a" style="left:36.6px;top:0;width:1.3px;height:36px;background:#171918"></div>
<svg class="a" style="left:0;top:0" width="36" height="36"><path d="M14.77 11.89 A7.4 7.4 0 1 0 22.83 11.89" fill="none" stroke="#eef3ef" stroke-width="2.3" stroke-linecap="round"/><line x1="18.8" y1="7.3" x2="18.8" y2="19.4" stroke="#eef3ef" stroke-width="2.5" stroke-linecap="butt"/></svg>
<div class="t m" style="left:49.5px;top:10.29px;font-size:17.6px;line-height:17.6px;color:#eef3ef;transform:scaleX(0.9715);transform-origin:0 0;">PRL Comp</div>
</div>
<svg class="a" style="left:1905.5px;top:446.25px;" width="50" height="36" viewBox="0 0 50 36"><circle cx="15.7" cy="17.6" r="10.6" fill="none" stroke="#eef3ef" stroke-width="2.9"/><line x1="14.67" y1="16.13" x2="9.85" y2="9.24" stroke="#eef3ef" stroke-width="2.9"/><path d="M32.4 17.6 H43.6 M38.3 12.4 L43.6 17.6 L38.3 22.8" fill="none" stroke="#7d837f" stroke-width="2.1" stroke-linecap="round" stroke-linejoin="round"/></svg>
<div class="a" style="left:1779.2px;top:486.35px;width:170.2px;height:30px;background:#0e100f;border-radius:6px;box-sizing:border-box;border:1.8px solid #404543;"></div>
<svg class="a" style="left:1854.5px;top:491.75px;" width="20" height="20" viewBox="0 0 20 20"><path d="M10 3.7 V16.3 M3.7 10 H16.3" stroke="#a7aca8" stroke-width="1.5"/></svg>
<div class="a" style="left:1779.2px;top:523.85px;width:170.2px;height:30px;background:#0e100f;border-radius:6px;box-sizing:border-box;border:1.8px solid #404543;"></div>
<svg class="a" style="left:1854.5px;top:529.25px;" width="20" height="20" viewBox="0 0 20 20"><path d="M10 3.7 V16.3 M3.7 10 H16.3" stroke="#a7aca8" stroke-width="1.5"/></svg>
<div class="a" style="left:1774.5px;top:558px;width:180.5px;height:2.1px;background:#737a75;"></div>
<div class="a" style="left:1804.5px;top:566px;width:35.5px;height:35.5px;background:#262827;border-radius:5px;"></div>
<div class="a" style="left:1846.5px;top:566px;width:35.5px;height:35.5px;background:#262827;border-radius:5px;"></div>
<div class="a" style="left:1888.7px;top:566px;width:35.5px;height:35.5px;background:#262827;border-radius:5px;"></div>
<div class="t" style="left:1814.96px;top:574.57px;font-size:17.5px;line-height:17.5px;color:#dde3de;">M</div>
<div class="t" style="left:1858.51px;top:574.57px;font-size:17.5px;line-height:17.5px;color:#dde3de;">S</div>
<svg class="a" style="left:1888.7px;top:566px;" width="35.5" height="35.5" viewBox="0 0 35.5 35.5"><circle cx="17.9" cy="18" r="6.9" fill="none" stroke="#dde3de" stroke-width="1.7"/><line x1="10.4" y1="25.6" x2="25.7" y2="10.3" stroke="#dde3de" stroke-width="1.7"/></svg>
<svg class="a" style="left:1847.5px;top:605.9px;" width="34" height="34" viewBox="0 0 34 34"><circle cx="17" cy="17" r="13.5" fill="none" stroke="#eef3ef" stroke-width="3"/><line x1="19.9" y1="17.78" x2="28.78" y2="20.16" stroke="#eef3ef" stroke-width="2.8"/></svg>
<div class="t m" style="left:1849.73px;top:644.53px;font-size:16.6px;line-height:16.6px;color:#eef3ef;transform:scaleX(1.0949);transform-origin:14.77px 0;">Pan</div>
<div class="a" style="left:1789.5px;top:677px;width:59.8px;height:23.8px;background:#010202;border-radius:5px;"></div>
<div class="a" style="left:1879.5px;top:677px;width:59.8px;height:23.8px;background:#010202;border-radius:5px;"></div>
<div class="t m" style="left:1803.46px;top:681.82px;font-size:17.2px;line-height:17.2px;color:#64ec9a;letter-spacing:0.75px;transform:scaleX(1.0800);transform-origin:15.94px 0;">-1.6</div>
<div class="t m" style="left:1896.33px;top:681.82px;font-size:17.2px;line-height:17.2px;color:#64ec9a;letter-spacing:0.75px;transform:scaleX(1.0500);transform-origin:13.07px 0;">-inf</div>
<div class="t m" style="left:1781.44px;top:717.16px;font-size:14.8px;line-height:14.8px;color:#8b918d;transform:scaleX(0.8687);transform-origin:16.46px 0;">12</div>
<div class="t m" style="left:1789.67px;top:760.86px;font-size:14.8px;line-height:14.8px;color:#8b918d;">0</div>
<div class="t" style="left:1785.47px;top:892.35px;font-size:18px;line-height:18px;color:#8b918d;transform:scaleX(1.1923);transform-origin:12.83px 0;">∞</div>
<div class="a" style="left:1801.5px;top:723.85px;width:6px;height:1.5px;background:#8b918d;"></div>
<div class="a" style="left:1801.5px;top:767.55px;width:6px;height:1.5px;background:#8b918d;"></div>
<div class="a" style="left:1801.5px;top:900.85px;width:6px;height:1.5px;background:#8b918d;"></div>
<div class="a" style="left:1817.8px;top:726px;width:3px;height:178.5px;background:#050505;"></div>
<div class="a" style="left:1899.2px;top:713px;width:20.9px;height:191.5px;background:#030303;"></div>
<div class="a" style="left:1809.1px;top:756.5px;width:20.7px;height:36.8px;background:#f2fbf4;border-radius:4px;"></div>
<div class="a" style="left:1809.1px;top:773.8px;width:20.7px;height:2.6px;background:#0c0d0c;"></div>
<div class="a" style="left:1774.5px;top:924.3px;width:180.5px;height:2.1px;background:#737a75;"></div>
<div class="a" style="left:1774.5px;top:928.8px;width:180.5px;height:36px;background:#252726;border-radius:0 0 6px 6px;"></div>
<div class="t m" style="left:1786.8px;top:936.64px;font-size:18.6px;line-height:18.6px;color:#eef3ef;transform:scaleX(0.9885);transform-origin:0 0;">Stereo 17/18</div>
<svg class="a" style="left:1928.5px;top:939px;" width="16" height="14" viewBox="0 0 16 14"><path d="M3.4 5 L8 9.6 L12.6 5" fill="none" stroke="#9ba19d" stroke-width="1.6"/></svg>
<div class="a" style="left:1957.5px;top:138.75px;width:180.5px;height:826px;background:#111312;"></div>
<div class="a" style="left:1957.5px;top:102.2px;width:180.5px;height:36.3px;background:#a1d0df;border-radius:5.5px 5.5px 0 0;"></div>
<svg class="a" style="left:1957.5px;top:102.2px;" width="180.5" height="36.3" viewBox="0 0 180.5 36.3"><circle cx="12.4" cy="14" r="1.6" fill="#111"/><circle cx="16.8" cy="14" r="1.6" fill="#111"/><circle cx="21.2" cy="14" r="1.6" fill="#111"/><circle cx="12.4" cy="18.4" r="1.6" fill="#111"/><circle cx="16.8" cy="18.4" r="1.6" fill="#111"/><circle cx="21.2" cy="18.4" r="1.6" fill="#111"/><circle cx="12.4" cy="22.8" r="1.6" fill="#111"/><circle cx="16.8" cy="22.8" r="1.6" fill="#111"/><circle cx="21.2" cy="22.8" r="1.6" fill="#111"/><circle cx="157.4" cy="14" r="1.6" fill="#111"/><circle cx="161.8" cy="14" r="1.6" fill="#111"/><circle cx="166.2" cy="14" r="1.6" fill="#111"/><circle cx="157.4" cy="18.4" r="1.6" fill="#111"/><circle cx="161.8" cy="18.4" r="1.6" fill="#111"/><circle cx="166.2" cy="18.4" r="1.6" fill="#111"/><circle cx="157.4" cy="22.8" r="1.6" fill="#111"/><circle cx="161.8" cy="22.8" r="1.6" fill="#111"/><circle cx="166.2" cy="22.8" r="1.6" fill="#111"/></svg>
<div class="t m" style="left:1993.31px;top:110.51px;font-size:18.4px;line-height:18.4px;color:#0d0f0e;transform:scaleX(1.0220);transform-origin:54.19px 0;">Cymbals Bus</div>
<div class="t m" style="left:1970px;top:151.7px;font-size:17.7px;line-height:17.7px;color:#959b97;transform:scaleX(1.0640);transform-origin:0 0;">Cymbals Bus</div>
<div class="a" style="left:1957.5px;top:177px;width:180.5px;height:2.25px;background:#737a75;"></div>
<div class="a" style="left:1957.5px;top:180.4px;width:180.5px;height:36.1px;background:#3b3e3c;border-radius:6px;"></div>
<div class="a" style="left:1994.1px;top:180.4px;width:1.3px;height:36.1px;background:#171918;"></div>
<svg class="a" style="left:1957.5px;top:180.4px;" width="36" height="36" viewBox="0 0 36 36"><path d="M14.77 12.14 A7.4 7.4 0 1 0 22.83 12.14" fill="none" stroke="#eef3ef" stroke-width="2.3" stroke-linecap="round"/><line x1="18.8" y1="7.55" x2="18.8" y2="19.65" stroke="#eef3ef" stroke-width="2.5" stroke-linecap="butt"/></svg>
<div class="t m" style="left:2007px;top:191.04px;font-size:17.6px;line-height:17.6px;color:#eef3ef;transform:scaleX(0.9157);transform-origin:0 0;">EQ</div>
<div class="a" style="left:1957.5px;top:217.9px;width:180.5px;height:36.1px;background:#3b3e3c;border-radius:6px;"></div>
<div class="a" style="left:1994.1px;top:217.9px;width:1.3px;height:36.1px;background:#171918;"></div>
<svg class="a" style="left:1957.5px;top:217.9px;" width="36" height="36" viewBox="0 0 36 36"><path d="M14.77 12.14 A7.4 7.4 0 1 0 22.83 12.14" fill="none" stroke="#eef3ef" stroke-width="2.3" stroke-linecap="round"/><line x1="18.8" y1="7.55" x2="18.8" y2="19.65" stroke="#eef3ef" stroke-width="2.5" stroke-linecap="butt"/></svg>
<div class="t m" style="left:2007px;top:228.54px;font-size:17.6px;line-height:17.6px;color:#eef3ef;transform:scaleX(1.0918);transform-origin:0 0;">Vint. Comp</div>
<div class="a" style="left:1957.5px;top:255.4px;width:180.5px;height:36.1px;background:#3b3e3c;border-radius:6px;"></div>
<div class="a" style="left:1994.1px;top:255.4px;width:1.3px;height:36.1px;background:#171918;"></div>
<svg class="a" style="left:1957.5px;top:255.4px;" width="36" height="36" viewBox="0 0 36 36"><path d="M14.77 12.14 A7.4 7.4 0 1 0 22.83 12.14" fill="none" stroke="#eef3ef" stroke-width="2.3" stroke-linecap="round"/><line x1="18.8" y1="7.55" x2="18.8" y2="19.65" stroke="#eef3ef" stroke-width="2.5" stroke-linecap="butt"/></svg>
<div class="t m" style="left:2007px;top:266.04px;font-size:17.6px;line-height:17.6px;color:#eef3ef;transform:scaleX(1.1398);transform-origin:0 0;">Limiter</div>
<div class="a" style="left:1962.2px;top:295.85px;width:170.2px;height:30px;background:#0e100f;border-radius:6px;box-sizing:border-box;border:1.8px solid #404543;"></div>
<svg class="a" style="left:2037.5px;top:301.25px;" width="20" height="20" viewBox="0 0 20 20"><path d="M10 3.7 V16.3 M3.7 10 H16.3" stroke="#a7aca8" stroke-width="1.5"/></svg>
<div class="a" style="left:1962.2px;top:333.35px;width:170.2px;height:30px;background:#0e100f;border-radius:6px;box-sizing:border-box;border:1.8px solid #404543;"></div>
<svg class="a" style="left:2037.5px;top:338.75px;" width="20" height="20" viewBox="0 0 20 20"><path d="M10 3.7 V16.3 M3.7 10 H16.3" stroke="#a7aca8" stroke-width="1.5"/></svg>
<div class="a" style="left:1962.2px;top:370.85px;width:170.2px;height:30px;background:#0e100f;border-radius:6px;box-sizing:border-box;border:1.8px solid #404543;"></div>
<svg class="a" style="left:2037.5px;top:376.25px;" width="20" height="20" viewBox="0 0 20 20"><path d="M10 3.7 V16.3 M3.7 10 H16.3" stroke="#a7aca8" stroke-width="1.5"/></svg>
<div class="a" style="left:1957.5px;top:405px;width:180.5px;height:2.1px;background:#737a75;"></div>
<div class="a" style="left:1962.2px;top:411.35px;width:170.2px;height:30px;background:#0e100f;border-radius:6px;box-sizing:border-box;border:1.8px solid #404543;"></div>
<svg class="a" style="left:2037.5px;top:416.75px;" width="20" height="20" viewBox="0 0 20 20"><path d="M10 3.7 V16.3 M3.7 10 H16.3" stroke="#a7aca8" stroke-width="1.5"/></svg>
<div class="a" style="left:1957.5px;top:446.25px;width:128.8px;height:35.75px;background:#3b3e3c;border-radius:6px;overflow:hidden;">
<div class="a" style="left:36.6px;top:0;width:1.3px;height:36px;background:#171918"></div>
<svg class="a" style="left:0;top:0" width="36" height="36"><path d="M14.77 11.89 A7.4 7.4 0 1 0 22.83 11.89" fill="none" stroke="#eef3ef" stroke-width="2.3" stroke-linecap="round"/><line x1="18.8" y1="7.3" x2="18.8" y2="19.4" stroke="#eef3ef" stroke-width="2.5" stroke-linecap="butt"/></svg>
<div class="t m" style="left:49.5px;top:10.29px;font-size:17.6px;line-height:17.6px;color:#eef3ef;transform:scaleX(0.9715);transform-origin:0 0;">PRL Comp</div>
</div>
<svg class="a" style="left:2088.5px;top:446.25px;" width="50" height="36" viewBox="0 0 50 36"><circle cx="15.7" cy="17.6" r="10.6" fill="none" stroke="#eef3ef" stroke-width="2.9"/><line x1="15.7" y1="15.8" x2="15.7" y2="7.4" stroke="#eef3ef" stroke-width="2.9"/><path d="M32.4 17.6 H43.6 M38.3 12.4 L43.6 17.6 L38.3 22.8" fill="none" stroke="#7d837f" stroke-width="2.1" stroke-linecap="round" stroke-linejoin="round"/></svg>
<div class="a" style="left:1962.2px;top:486.35px;width:170.2px;height:30px;background:#0e100f;border-radius:6px;box-sizing:border-box;border:1.8px solid #404543;"></div>
<svg class="a" style="left:2037.5px;top:491.75px;" width="20" height="20" viewBox="0 0 20 20"><path d="M10 3.7 V16.3 M3.7 10 H16.3" stroke="#a7aca8" stroke-width="1.5"/></svg>
<div class="a" style="left:1962.2px;top:523.85px;width:170.2px;height:30px;background:#0e100f;border-radius:6px;box-sizing:border-box;border:1.8px solid #404543;"></div>
<svg class="a" style="left:2037.5px;top:529.25px;" width="20" height="20" viewBox="0 0 20 20"><path d="M10 3.7 V16.3 M3.7 10 H16.3" stroke="#a7aca8" stroke-width="1.5"/></svg>
<div class="a" style="left:1957.5px;top:558px;width:180.5px;height:2.1px;background:#737a75;"></div>
<div class="a" style="left:1987.5px;top:566px;width:35.5px;height:35.5px;background:#262827;border-radius:5px;"></div>
<div class="a" style="left:2029.5px;top:566px;width:35.5px;height:35.5px;background:#262827;border-radius:5px;"></div>
<div class="a" style="left:2071.7px;top:566px;width:35.5px;height:35.5px;background:#262827;border-radius:5px;"></div>
<div class="t" style="left:1997.96px;top:574.57px;font-size:17.5px;line-height:17.5px;color:#dde3de;">M</div>
<div class="t" style="left:2041.51px;top:574.57px;font-size:17.5px;line-height:17.5px;color:#dde3de;">S</div>
<svg class="a" style="left:2071.7px;top:566px;" width="35.5" height="35.5" viewBox="0 0 35.5 35.5"><circle cx="17.9" cy="18" r="6.9" fill="none" stroke="#dde3de" stroke-width="1.7"/><line x1="10.4" y1="25.6" x2="25.7" y2="10.3" stroke="#dde3de" stroke-width="1.7"/></svg>
<svg class="a" style="left:1990px;top:605.9px;" width="34" height="34" viewBox="0 0 34 34"><circle cx="17" cy="17" r="13.5" fill="none" stroke="#eef3ef" stroke-width="3"/><line x1="14.54" y1="18.72" x2="7.01" y2="24" stroke="#eef3ef" stroke-width="2.8"/></svg>
<div class="t m" style="left:1985.31px;top:644.53px;font-size:16.6px;line-height:16.6px;color:#eef3ef;transform:scaleX(1.0438);transform-origin:21.69px 0;">Pan L</div>
<svg class="a" style="left:2072.2px;top:605.9px;" width="34" height="34" viewBox="0 0 34 34"><circle cx="17" cy="17" r="13.5" fill="none" stroke="#eef3ef" stroke-width="3"/><line x1="19.46" y1="18.72" x2="26.99" y2="24" stroke="#eef3ef" stroke-width="2.8"/></svg>
<div class="t m" style="left:2066.13px;top:644.53px;font-size:16.6px;line-height:16.6px;color:#eef3ef;transform:scaleX(1.0195);transform-origin:23.07px 0;">Pan R</div>
<div class="a" style="left:1972.5px;top:677px;width:59.8px;height:23.8px;background:#010202;border-radius:5px;"></div>
<div class="a" style="left:2062.5px;top:677px;width:59.8px;height:23.8px;background:#010202;border-radius:5px;"></div>
<div class="t m" style="left:1986.46px;top:681.82px;font-size:17.2px;line-height:17.2px;color:#64ec9a;letter-spacing:0.75px;transform:scaleX(1.0800);transform-origin:15.94px 0;">-2.0</div>
<div class="t m" style="left:2079.33px;top:681.82px;font-size:17.2px;line-height:17.2px;color:#64ec9a;letter-spacing:0.75px;transform:scaleX(1.0500);transform-origin:13.07px 0;">-inf</div>
<div class="t m" style="left:1964.44px;top:717.16px;font-size:14.8px;line-height:14.8px;color:#8b918d;transform:scaleX(0.8687);transform-origin:16.46px 0;">12</div>
<div class="t m" style="left:1972.67px;top:760.86px;font-size:14.8px;line-height:14.8px;color:#8b918d;">0</div>
<div class="t" style="left:1968.47px;top:892.35px;font-size:18px;line-height:18px;color:#8b918d;transform:scaleX(1.1923);transform-origin:12.83px 0;">∞</div>
<div class="a" style="left:1984.5px;top:723.85px;width:6px;height:1.5px;background:#8b918d;"></div>
<div class="a" style="left:1984.5px;top:767.55px;width:6px;height:1.5px;background:#8b918d;"></div>
<div class="a" style="left:1984.5px;top:900.85px;width:6px;height:1.5px;background:#8b918d;"></div>
<div class="a" style="left:2000.8px;top:726px;width:3px;height:178.5px;background:#050505;"></div>
<div class="a" style="left:2082.2px;top:713px;width:20.9px;height:191.5px;background:#030303;"></div>
<div class="a" style="left:1992.1px;top:757.6px;width:20.7px;height:36.8px;background:#f2fbf4;border-radius:4px;"></div>
<div class="a" style="left:1992.1px;top:774.9px;width:20.7px;height:2.6px;background:#0c0d0c;"></div>
<div class="a" style="left:1957.5px;top:924.3px;width:180.5px;height:2.1px;background:#737a75;"></div>
<div class="a" style="left:1957.5px;top:928.8px;width:180.5px;height:36px;background:#252726;border-radius:0 0 6px 6px;"></div>
<div class="t m" style="left:1969.8px;top:936.64px;font-size:18.6px;line-height:18.6px;color:#eef3ef;transform:scaleX(1.0069);transform-origin:0 0;">Stereo 19/20</div>
<svg class="a" style="left:2111.5px;top:939px;" width="16" height="14" viewBox="0 0 16 14"><path d="M3.4 5 L8 9.6 L12.6 5" fill="none" stroke="#9ba19d" stroke-width="1.6"/></svg>
<div class="a" style="left:2140.5px;top:138.75px;width:180.5px;height:826px;background:#111312;"></div>
<div class="a" style="left:2140.5px;top:102.2px;width:180.5px;height:36.3px;background:#e5dfa9;border-radius:5.5px 5.5px 0 0;"></div>
<svg class="a" style="left:2140.5px;top:102.2px;" width="180.5" height="36.3" viewBox="0 0 180.5 36.3"><circle cx="12.4" cy="14" r="1.6" fill="#111"/><circle cx="16.8" cy="14" r="1.6" fill="#111"/><circle cx="21.2" cy="14" r="1.6" fill="#111"/><circle cx="12.4" cy="18.4" r="1.6" fill="#111"/><circle cx="16.8" cy="18.4" r="1.6" fill="#111"/><circle cx="21.2" cy="18.4" r="1.6" fill="#111"/><circle cx="12.4" cy="22.8" r="1.6" fill="#111"/><circle cx="16.8" cy="22.8" r="1.6" fill="#111"/><circle cx="21.2" cy="22.8" r="1.6" fill="#111"/><circle cx="157.4" cy="14" r="1.6" fill="#111"/><circle cx="161.8" cy="14" r="1.6" fill="#111"/><circle cx="166.2" cy="14" r="1.6" fill="#111"/><circle cx="157.4" cy="18.4" r="1.6" fill="#111"/><circle cx="161.8" cy="18.4" r="1.6" fill="#111"/><circle cx="166.2" cy="18.4" r="1.6" fill="#111"/><circle cx="157.4" cy="22.8" r="1.6" fill="#111"/><circle cx="161.8" cy="22.8" r="1.6" fill="#111"/><circle cx="166.2" cy="22.8" r="1.6" fill="#111"/></svg>
<div class="t m" style="left:2211.58px;top:110.51px;font-size:18.4px;line-height:18.4px;color:#0d0f0e;transform:scaleX(0.9923);transform-origin:18.92px 0;">Hats</div>
<div class="t m" style="left:2153px;top:151.7px;font-size:17.7px;line-height:17.7px;color:#959b97;transform:scaleX(1.1102);transform-origin:0 0;">Hats</div>
<div class="a" style="left:2140.5px;top:177px;width:180.5px;height:2.25px;background:#737a75;"></div>
<div class="a" style="left:2140.5px;top:180.4px;width:180.5px;height:36.1px;background:#3b3e3c;border-radius:6px;"></div>
<div class="a" style="left:2177.1px;top:180.4px;width:1.3px;height:36.1px;background:#171918;"></div>
<svg class="a" style="left:2140.5px;top:180.4px;" width="36" height="36" viewBox="0 0 36 36"><path d="M14.77 12.14 A7.4 7.4 0 1 0 22.83 12.14" fill="none" stroke="#eef3ef" stroke-width="2.3" stroke-linecap="round"/><line x1="18.8" y1="7.55" x2="18.8" y2="19.65" stroke="#eef3ef" stroke-width="2.5" stroke-linecap="butt"/></svg>
<div class="t m" style="left:2190px;top:191.04px;font-size:17.6px;line-height:17.6px;color:#eef3ef;transform:scaleX(0.9157);transform-origin:0 0;">EQ</div>
<div class="a" style="left:2145.2px;top:220.85px;width:170.2px;height:30px;background:#0e100f;border-radius:6px;box-sizing:border-box;border:1.8px solid #404543;"></div>
<svg class="a" style="left:2220.5px;top:226.25px;" width="20" height="20" viewBox="0 0 20 20"><path d="M10 3.7 V16.3 M3.7 10 H16.3" stroke="#a7aca8" stroke-width="1.5"/></svg>
<div class="a" style="left:2145.2px;top:258.35px;width:170.2px;height:30px;background:#0e100f;border-radius:6px;box-sizing:border-box;border:1.8px solid #404543;"></div>
<svg class="a" style="left:2220.5px;top:263.75px;" width="20" height="20" viewBox="0 0 20 20"><path d="M10 3.7 V16.3 M3.7 10 H16.3" stroke="#a7aca8" stroke-width="1.5"/></svg>
<div class="a" style="left:2145.2px;top:295.85px;width:170.2px;height:30px;background:#0e100f;border-radius:6px;box-sizing:border-box;border:1.8px solid #404543;"></div>
<svg class="a" style="left:2220.5px;top:301.25px;" width="20" height="20" viewBox="0 0 20 20"><path d="M10 3.7 V16.3 M3.7 10 H16.3" stroke="#a7aca8" stroke-width="1.5"/></svg>
<div class="a" style="left:2145.2px;top:333.35px;width:170.2px;height:30px;background:#0e100f;border-radius:6px;box-sizing:border-box;border:1.8px solid #404543;"></div>
<svg class="a" style="left:2220.5px;top:338.75px;" width="20" height="20" viewBox="0 0 20 20"><path d="M10 3.7 V16.3 M3.7 10 H16.3" stroke="#a7aca8" stroke-width="1.5"/></svg>
<div class="a" style="left:2145.2px;top:370.85px;width:170.2px;height:30px;background:#0e100f;border-radius:6px;box-sizing:border-box;border:1.8px solid #404543;"></div>
<svg class="a" style="left:2220.5px;top:376.25px;" width="20" height="20" viewBox="0 0 20 20"><path d="M10 3.7 V16.3 M3.7 10 H16.3" stroke="#a7aca8" stroke-width="1.5"/></svg>
<div class="a" style="left:2140.5px;top:405px;width:180.5px;height:2.1px;background:#737a75;"></div>
<div class="a" style="left:2145.2px;top:411.35px;width:170.2px;height:30px;background:#0e100f;border-radius:6px;box-sizing:border-box;border:1.8px solid #404543;"></div>
<svg class="a" style="left:2220.5px;top:416.75px;" width="20" height="20" viewBox="0 0 20 20"><path d="M10 3.7 V16.3 M3.7 10 H16.3" stroke="#a7aca8" stroke-width="1.5"/></svg>
<div class="a" style="left:2145.2px;top:448.85px;width:170.2px;height:30px;background:#0e100f;border-radius:6px;box-sizing:border-box;border:1.8px solid #404543;"></div>
<svg class="a" style="left:2220.5px;top:454.25px;" width="20" height="20" viewBox="0 0 20 20"><path d="M10 3.7 V16.3 M3.7 10 H16.3" stroke="#a7aca8" stroke-width="1.5"/></svg>
<div class="a" style="left:2145.2px;top:486.35px;width:170.2px;height:30px;background:#0e100f;border-radius:6px;box-sizing:border-box;border:1.8px solid #404543;"></div>
<svg class="a" style="left:2220.5px;top:491.75px;" width="20" height="20" viewBox="0 0 20 20"><path d="M10 3.7 V16.3 M3.7 10 H16.3" stroke="#a7aca8" stroke-width="1.5"/></svg>
<div class="a" style="left:2145.2px;top:523.85px;width:170.2px;height:30px;background:#0e100f;border-radius:6px;box-sizing:border-box;border:1.8px solid #404543;"></div>
<svg class="a" style="left:2220.5px;top:529.25px;" width="20" height="20" viewBox="0 0 20 20"><path d="M10 3.7 V16.3 M3.7 10 H16.3" stroke="#a7aca8" stroke-width="1.5"/></svg>
<div class="a" style="left:2140.5px;top:558px;width:180.5px;height:2.1px;background:#737a75;"></div>
<div class="a" style="left:2170.5px;top:566px;width:35.5px;height:35.5px;background:#262827;border-radius:5px;"></div>
<div class="a" style="left:2212.5px;top:566px;width:35.5px;height:35.5px;background:#262827;border-radius:5px;"></div>
<div class="a" style="left:2254.7px;top:566px;width:35.5px;height:35.5px;background:#262827;border-radius:5px;"></div>
<div class="t" style="left:2180.96px;top:574.57px;font-size:17.5px;line-height:17.5px;color:#dde3de;">M</div>
<div class="t" style="left:2224.51px;top:574.57px;font-size:17.5px;line-height:17.5px;color:#dde3de;">S</div>
<svg class="a" style="left:2254.7px;top:566px;" width="35.5" height="35.5" viewBox="0 0 35.5 35.5"><circle cx="17.9" cy="18" r="6.9" fill="none" stroke="#dde3de" stroke-width="1.7"/><line x1="10.4" y1="25.6" x2="25.7" y2="10.3" stroke="#dde3de" stroke-width="1.7"/></svg>
<svg class="a" style="left:2213.5px;top:605.9px;" width="34" height="34" viewBox="0 0 34 34"><circle cx="17" cy="17" r="13.5" fill="none" stroke="#eef3ef" stroke-width="3"/><line x1="14.03" y1="16.58" x2="4.92" y2="15.3" stroke="#eef3ef" stroke-width="2.8"/></svg>
<div class="t m" style="left:2215.73px;top:644.53px;font-size:16.6px;line-height:16.6px;color:#eef3ef;transform:scaleX(1.0949);transform-origin:14.77px 0;">Pan</div>
<div class="a" style="left:2155.5px;top:677px;width:59.8px;height:23.8px;background:#010202;border-radius:5px;"></div>
<div class="a" style="left:2245.5px;top:677px;width:59.8px;height:23.8px;background:#010202;border-radius:5px;"></div>
<div class="t m" style="left:2164.94px;top:681.82px;font-size:17.2px;line-height:17.2px;color:#64ec9a;letter-spacing:0.75px;transform:scaleX(1.0800);transform-origin:20.46px 0;">-11.5</div>
<div class="t m" style="left:2262.33px;top:681.82px;font-size:17.2px;line-height:17.2px;color:#64ec9a;letter-spacing:0.75px;transform:scaleX(1.0500);transform-origin:13.07px 0;">-inf</div>
<div class="t m" style="left:2147.44px;top:717.16px;font-size:14.8px;line-height:14.8px;color:#8b918d;transform:scaleX(0.8687);transform-origin:16.46px 0;">12</div>
<div class="t m" style="left:2155.67px;top:760.86px;font-size:14.8px;line-height:14.8px;color:#8b918d;">0</div>
<div class="t" style="left:2151.47px;top:892.35px;font-size:18px;line-height:18px;color:#8b918d;transform:scaleX(1.1923);transform-origin:12.83px 0;">∞</div>
<div class="a" style="left:2167.5px;top:723.85px;width:6px;height:1.5px;background:#8b918d;"></div>
<div class="a" style="left:2167.5px;top:767.55px;width:6px;height:1.5px;background:#8b918d;"></div>
<div class="a" style="left:2167.5px;top:900.85px;width:6px;height:1.5px;background:#8b918d;"></div>
<div class="a" style="left:2183.8px;top:726px;width:3px;height:178.5px;background:#050505;"></div>
<div class="a" style="left:2265.2px;top:713px;width:20.9px;height:191.5px;background:#030303;"></div>
<div class="a" style="left:2175.1px;top:791.8px;width:20.7px;height:36.8px;background:#f2fbf4;border-radius:4px;"></div>
<div class="a" style="left:2175.1px;top:809.1px;width:20.7px;height:2.6px;background:#0c0d0c;"></div>
<div class="a" style="left:2140.5px;top:924.3px;width:180.5px;height:2.1px;background:#737a75;"></div>
<div class="a" style="left:2140.5px;top:928.8px;width:180.5px;height:36px;background:#252726;border-radius:0 0 6px 6px;"></div>
<div class="t m" style="left:2152.8px;top:936.64px;font-size:18.6px;line-height:18.6px;color:#eef3ef;transform:scaleX(1.0254);transform-origin:0 0;">Cymbals Bus</div>
<svg class="a" style="left:2294.5px;top:939px;" width="16" height="14" viewBox="0 0 16 14"><path d="M3.4 5 L8 9.6 L12.6 5" fill="none" stroke="#9ba19d" stroke-width="1.6"/></svg>
<div class="a" style="left:2323.5px;top:138.75px;width:180.5px;height:826px;background:#111312;"></div>
<div class="a" style="left:2323.5px;top:102.2px;width:180.5px;height:36.3px;background:#e5dfa9;border-radius:5.5px 5.5px 0 0;"></div>
<svg class="a" style="left:2323.5px;top:102.2px;" width="180.5" height="36.3" viewBox="0 0 180.5 36.3"><circle cx="12.4" cy="14" r="1.6" fill="#111"/><circle cx="16.8" cy="14" r="1.6" fill="#111"/><circle cx="21.2" cy="14" r="1.6" fill="#111"/><circle cx="12.4" cy="18.4" r="1.6" fill="#111"/><circle cx="16.8" cy="18.4" r="1.6" fill="#111"/><circle cx="21.2" cy="18.4" r="1.6" fill="#111"/><circle cx="12.4" cy="22.8" r="1.6" fill="#111"/><circle cx="16.8" cy="22.8" r="1.6" fill="#111"/><circle cx="21.2" cy="22.8" r="1.6" fill="#111"/><circle cx="157.4" cy="14" r="1.6" fill="#111"/><circle cx="161.8" cy="14" r="1.6" fill="#111"/><circle cx="166.2" cy="14" r="1.6" fill="#111"/><circle cx="157.4" cy="18.4" r="1.6" fill="#111"/><circle cx="161.8" cy="18.4" r="1.6" fill="#111"/><circle cx="166.2" cy="18.4" r="1.6" fill="#111"/><circle cx="157.4" cy="22.8" r="1.6" fill="#111"/><circle cx="161.8" cy="22.8" r="1.6" fill="#111"/><circle cx="166.2" cy="22.8" r="1.6" fill="#111"/></svg>
<div class="t m" style="left:2394.58px;top:110.51px;font-size:18.4px;line-height:18.4px;color:#0d0f0e;transform:scaleX(0.9923);transform-origin:18.92px 0;">Ride</div>
<div class="t m" style="left:2336px;top:151.7px;font-size:17.7px;line-height:17.7px;color:#959b97;transform:scaleX(1.1102);transform-origin:0 0;">Ride</div>
<div class="a" style="left:2323.5px;top:177px;width:180.5px;height:2.25px;background:#737a75;"></div>
<div class="a" style="left:2323.5px;top:180.4px;width:180.5px;height:36.1px;background:#3b3e3c;border-radius:6px;"></div>
<div class="a" style="left:2360.1px;top:180.4px;width:1.3px;height:36.1px;background:#171918;"></div>
<svg class="a" style="left:2323.5px;top:180.4px;" width="36" height="36" viewBox="0 0 36 36"><path d="M14.77 12.14 A7.4 7.4 0 1 0 22.83 12.14" fill="none" stroke="#eef3ef" stroke-width="2.3" stroke-linecap="round"/><line x1="18.8" y1="7.55" x2="18.8" y2="19.65" stroke="#eef3ef" stroke-width="2.5" stroke-linecap="butt"/></svg>
<div class="t m" style="left:2373px;top:191.04px;font-size:17.6px;line-height:17.6px;color:#eef3ef;transform:scaleX(0.9157);transform-origin:0 0;">EQ</div>
<div class="a" style="left:2328.2px;top:220.85px;width:170.2px;height:30px;background:#0e100f;border-radius:6px;box-sizing:border-box;border:1.8px solid #404543;"></div>
<svg class="a" style="left:2403.5px;top:226.25px;" width="20" height="20" viewBox="0 0 20 20"><path d="M10 3.7 V16.3 M3.7 10 H16.3" stroke="#a7aca8" stroke-width="1.5"/></svg>
<div class="a" style="left:2328.2px;top:258.35px;width:170.2px;height:30px;background:#0e100f;border-radius:6px;box-sizing:border-box;border:1.8px solid #404543;"></div>
<svg class="a" style="left:2403.5px;top:263.75px;" width="20" height="20" viewBox="0 0 20 20"><path d="M10 3.7 V16.3 M3.7 10 H16.3" stroke="#a7aca8" stroke-width="1.5"/></svg>
<div class="a" style="left:2328.2px;top:295.85px;width:170.2px;height:30px;background:#0e100f;border-radius:6px;box-sizing:border-box;border:1.8px solid #404543;"></div>
<svg class="a" style="left:2403.5px;top:301.25px;" width="20" height="20" viewBox="0 0 20 20"><path d="M10 3.7 V16.3 M3.7 10 H16.3" stroke="#a7aca8" stroke-width="1.5"/></svg>
<div class="a" style="left:2328.2px;top:333.35px;width:170.2px;height:30px;background:#0e100f;border-radius:6px;box-sizing:border-box;border:1.8px solid #404543;"></div>
<svg class="a" style="left:2403.5px;top:338.75px;" width="20" height="20" viewBox="0 0 20 20"><path d="M10 3.7 V16.3 M3.7 10 H16.3" stroke="#a7aca8" stroke-width="1.5"/></svg>
<div class="a" style="left:2328.2px;top:370.85px;width:170.2px;height:30px;background:#0e100f;border-radius:6px;box-sizing:border-box;border:1.8px solid #404543;"></div>
<svg class="a" style="left:2403.5px;top:376.25px;" width="20" height="20" viewBox="0 0 20 20"><path d="M10 3.7 V16.3 M3.7 10 H16.3" stroke="#a7aca8" stroke-width="1.5"/></svg>
<div class="a" style="left:2323.5px;top:405px;width:180.5px;height:2.1px;background:#737a75;"></div>
<div class="a" style="left:2328.2px;top:411.35px;width:170.2px;height:30px;background:#0e100f;border-radius:6px;box-sizing:border-box;border:1.8px solid #404543;"></div>
<svg class="a" style="left:2403.5px;top:416.75px;" width="20" height="20" viewBox="0 0 20 20"><path d="M10 3.7 V16.3 M3.7 10 H16.3" stroke="#a7aca8" stroke-width="1.5"/></svg>
<div class="a" style="left:2328.2px;top:448.85px;width:170.2px;height:30px;background:#0e100f;border-radius:6px;box-sizing:border-box;border:1.8px solid #404543;"></div>
<svg class="a" style="left:2403.5px;top:454.25px;" width="20" height="20" viewBox="0 0 20 20"><path d="M10 3.7 V16.3 M3.7 10 H16.3" stroke="#a7aca8" stroke-width="1.5"/></svg>
<div class="a" style="left:2328.2px;top:486.35px;width:170.2px;height:30px;background:#0e100f;border-radius:6px;box-sizing:border-box;border:1.8px solid #404543;"></div>
<svg class="a" style="left:2403.5px;top:491.75px;" width="20" height="20" viewBox="0 0 20 20"><path d="M10 3.7 V16.3 M3.7 10 H16.3" stroke="#a7aca8" stroke-width="1.5"/></svg>
<div class="a" style="left:2328.2px;top:523.85px;width:170.2px;height:30px;background:#0e100f;border-radius:6px;box-sizing:border-box;border:1.8px solid #404543;"></div>
<svg class="a" style="left:2403.5px;top:529.25px;" width="20" height="20" viewBox="0 0 20 20"><path d="M10 3.7 V16.3 M3.7 10 H16.3" stroke="#a7aca8" stroke-width="1.5"/></svg>
<div class="a" style="left:2323.5px;top:558px;width:180.5px;height:2.1px;background:#737a75;"></div>
<div class="a" style="left:2353.5px;top:566px;width:35.5px;height:35.5px;background:#262827;border-radius:5px;"></div>
<div class="a" style="left:2395.5px;top:566px;width:35.5px;height:35.5px;background:#262827;border-radius:5px;"></div>
<div class="a" style="left:2437.7px;top:566px;width:35.5px;height:35.5px;background:#262827;border-radius:5px;"></div>
<div class="t" style="left:2363.96px;top:574.57px;font-size:17.5px;line-height:17.5px;color:#dde3de;">M</div>
<div class="t" style="left:2407.51px;top:574.57px;font-size:17.5px;line-height:17.5px;color:#dde3de;">S</div>
<svg class="a" style="left:2437.7px;top:566px;" width="35.5" height="35.5" viewBox="0 0 35.5 35.5"><circle cx="17.9" cy="18" r="6.9" fill="none" stroke="#dde3de" stroke-width="1.7"/><line x1="10.4" y1="25.6" x2="25.7" y2="10.3" stroke="#dde3de" stroke-width="1.7"/></svg>
<svg class="a" style="left:2396.5px;top:605.9px;" width="34" height="34" viewBox="0 0 34 34"><circle cx="17" cy="17" r="13.5" fill="none" stroke="#eef3ef" stroke-width="3"/><line x1="18.5" y1="14.4" x2="23.1" y2="6.43" stroke="#eef3ef" stroke-width="2.8"/></svg>
<div class="t m" style="left:2398.73px;top:644.53px;font-size:16.6px;line-height:16.6px;color:#eef3ef;transform:scaleX(1.0949);transform-origin:14.77px 0;">Pan</div>
<div class="a" style="left:2338.5px;top:677px;width:59.8px;height:23.8px;background:#010202;border-radius:5px;"></div>
<div class="a" style="left:2428.5px;top:677px;width:59.8px;height:23.8px;background:#010202;border-radius:5px;"></div>
<div class="t m" style="left:2352.46px;top:681.82px;font-size:17.2px;line-height:17.2px;color:#64ec9a;letter-spacing:0.75px;transform:scaleX(1.0800);transform-origin:15.94px 0;">-7.8</div>
<div class="t m" style="left:2445.33px;top:681.82px;font-size:17.2px;line-height:17.2px;color:#64ec9a;letter-spacing:0.75px;transform:scaleX(1.0500);transform-origin:13.07px 0;">-inf</div>
<div class="t m" style="left:2330.44px;top:717.16px;font-size:14.8px;line-height:14.8px;color:#8b918d;transform:scaleX(0.8687);transform-origin:16.46px 0;">12</div>
<div class="t m" style="left:2338.67px;top:760.86px;font-size:14.8px;line-height:14.8px;color:#8b918d;">0</div>
<div class="t" style="left:2334.47px;top:892.35px;font-size:18px;line-height:18px;color:#8b918d;transform:scaleX(1.1923);transform-origin:12.83px 0;">∞</div>
<div class="a" style="left:2350.5px;top:723.85px;width:6px;height:1.5px;background:#8b918d;"></div>
<div class="a" style="left:2350.5px;top:767.55px;width:6px;height:1.5px;background:#8b918d;"></div>
<div class="a" style="left:2350.5px;top:900.85px;width:6px;height:1.5px;background:#8b918d;"></div>
<div class="a" style="left:2366.8px;top:726px;width:3px;height:178.5px;background:#050505;"></div>
<div class="a" style="left:2448.2px;top:713px;width:20.9px;height:191.5px;background:#030303;"></div>
<div class="a" style="left:2358.1px;top:779.2px;width:20.7px;height:36.8px;background:#f2fbf4;border-radius:4px;"></div>
<div class="a" style="left:2358.1px;top:796.5px;width:20.7px;height:2.6px;background:#0c0d0c;"></div>
<div class="a" style="left:2323.5px;top:924.3px;width:180.5px;height:2.1px;background:#737a75;"></div>
<div class="a" style="left:2323.5px;top:928.8px;width:180.5px;height:36px;background:#252726;border-radius:0 0 6px 6px;"></div>
<div class="t m" style="left:2335.8px;top:936.64px;font-size:18.6px;line-height:18.6px;color:#eef3ef;transform:scaleX(1.0254);transform-origin:0 0;">Cymbals Bus</div>
<svg class="a" style="left:2477.5px;top:939px;" width="16" height="14" viewBox="0 0 16 14"><path d="M3.4 5 L8 9.6 L12.6 5" fill="none" stroke="#9ba19d" stroke-width="1.6"/></svg>
<div class="a" style="left:2506.5px;top:138.75px;width:180.5px;height:826px;background:#111312;"></div>
<div class="a" style="left:2506.5px;top:102.2px;width:180.5px;height:36.3px;background:#e5dfa9;border-radius:5.5px 5.5px 0 0;"></div>
<svg class="a" style="left:2506.5px;top:102.2px;" width="180.5" height="36.3" viewBox="0 0 180.5 36.3"><circle cx="12.4" cy="14" r="1.6" fill="#111"/><circle cx="16.8" cy="14" r="1.6" fill="#111"/><circle cx="21.2" cy="14" r="1.6" fill="#111"/><circle cx="12.4" cy="18.4" r="1.6" fill="#111"/><circle cx="16.8" cy="18.4" r="1.6" fill="#111"/><circle cx="21.2" cy="18.4" r="1.6" fill="#111"/><circle cx="12.4" cy="22.8" r="1.6" fill="#111"/><circle cx="16.8" cy="22.8" r="1.6" fill="#111"/><circle cx="21.2" cy="22.8" r="1.6" fill="#111"/><circle cx="157.4" cy="14" r="1.6" fill="#111"/><circle cx="161.8" cy="14" r="1.6" fill="#111"/><circle cx="166.2" cy="14" r="1.6" fill="#111"/><circle cx="157.4" cy="18.4" r="1.6" fill="#111"/><circle cx="161.8" cy="18.4" r="1.6" fill="#111"/><circle cx="166.2" cy="18.4" r="1.6" fill="#111"/><circle cx="157.4" cy="22.8" r="1.6" fill="#111"/><circle cx="161.8" cy="22.8" r="1.6" fill="#111"/><circle cx="166.2" cy="22.8" r="1.6" fill="#111"/></svg>
<div class="t m" style="left:2568.37px;top:110.51px;font-size:18.4px;line-height:18.4px;color:#0d0f0e;transform:scaleX(1.0222);transform-origin:28.13px 0;">Splash</div>
<div class="t m" style="left:2519px;top:151.7px;font-size:17.7px;line-height:17.7px;color:#959b97;transform:scaleX(1.1026);transform-origin:0 0;">Splash</div>
<div class="a" style="left:2506.5px;top:177px;width:180.5px;height:2.25px;background:#737a75;"></div>
<div class="a" style="left:2511.2px;top:183.35px;width:170.2px;height:30px;background:#0e100f;border-radius:6px;box-sizing:border-box;border:1.8px solid #404543;"></div>
<svg class="a" style="left:2586.5px;top:188.75px;" width="20" height="20" viewBox="0 0 20 20"><path d="M10 3.7 V16.3 M3.7 10 H16.3" stroke="#a7aca8" stroke-width="1.5"/></svg>
<div class="a" style="left:2511.2px;top:220.85px;width:170.2px;height:30px;background:#0e100f;border-radius:6px;box-sizing:border-box;border:1.8px solid #404543;"></div>
<svg class="a" style="left:2586.5px;top:226.25px;" width="20" height="20" viewBox="0 0 20 20"><path d="M10 3.7 V16.3 M3.7 10 H16.3" stroke="#a7aca8" stroke-width="1.5"/></svg>
<div class="a" style="left:2511.2px;top:258.35px;width:170.2px;height:30px;background:#0e100f;border-radius:6px;box-sizing:border-box;border:1.8px solid #404543;"></div>
<svg class="a" style="left:2586.5px;top:263.75px;" width="20" height="20" viewBox="0 0 20 20"><path d="M10 3.7 V16.3 M3.7 10 H16.3" stroke="#a7aca8" stroke-width="1.5"/></svg>
<div class="a" style="left:2511.2px;top:295.85px;width:170.2px;height:30px;background:#0e100f;border-radius:6px;box-sizing:border-box;border:1.8px solid #404543;"></div>
<svg class="a" style="left:2586.5px;top:301.25px;" width="20" height="20" viewBox="0 0 20 20"><path d="M10 3.7 V16.3 M3.7 10 H16.3" stroke="#a7aca8" stroke-width="1.5"/></svg>
<div class="a" style="left:2511.2px;top:333.35px;width:170.2px;height:30px;background:#0e100f;border-radius:6px;box-sizing:border-box;border:1.8px solid #404543;"></div>
<svg class="a" style="left:2586.5px;top:338.75px;" width="20" height="20" viewBox="0 0 20 20"><path d="M10 3.7 V16.3 M3.7 10 H16.3" stroke="#a7aca8" stroke-width="1.5"/></svg>
<div class="a" style="left:2511.2px;top:370.85px;width:170.2px;height:30px;background:#0e100f;border-radius:6px;box-sizing:border-box;border:1.8px solid #404543;"></div>
<svg class="a" style="left:2586.5px;top:376.25px;" width="20" height="20" viewBox="0 0 20 20"><path d="M10 3.7 V16.3 M3.7 10 H16.3" stroke="#a7aca8" stroke-width="1.5"/></svg>
<div class="a" style="left:2506.5px;top:405px;width:180.5px;height:2.1px;background:#737a75;"></div>
<div class="a" style="left:2511.2px;top:411.35px;width:170.2px;height:30px;background:#0e100f;border-radius:6px;box-sizing:border-box;border:1.8px solid #404543;"></div>
<svg class="a" style="left:2586.5px;top:416.75px;" width="20" height="20" viewBox="0 0 20 20"><path d="M10 3.7 V16.3 M3.7 10 H16.3" stroke="#a7aca8" stroke-width="1.5"/></svg>
<div class="a" style="left:2511.2px;top:448.85px;width:170.2px;height:30px;background:#0e100f;border-radius:6px;box-sizing:border-box;border:1.8px solid #404543;"></div>
<svg class="a" style="left:2586.5px;top:454.25px;" width="20" height="20" viewBox="0 0 20 20"><path d="M10 3.7 V16.3 M3.7 10 H16.3" stroke="#a7aca8" stroke-width="1.5"/></svg>
<div class="a" style="left:2511.2px;top:486.35px;width:170.2px;height:30px;background:#0e100f;border-radius:6px;box-sizing:border-box;border:1.8px solid #404543;"></div>
<svg class="a" style="left:2586.5px;top:491.75px;" width="20" height="20" viewBox="0 0 20 20"><path d="M10 3.7 V16.3 M3.7 10 H16.3" stroke="#a7aca8" stroke-width="1.5"/></svg>
<div class="a" style="left:2511.2px;top:523.85px;width:170.2px;height:30px;background:#0e100f;border-radius:6px;box-sizing:border-box;border:1.8px solid #404543;"></div>
<svg class="a" style="left:2586.5px;top:529.25px;" width="20" height="20" viewBox="0 0 20 20"><path d="M10 3.7 V16.3 M3.7 10 H16.3" stroke="#a7aca8" stroke-width="1.5"/></svg>
<div class="a" style="left:2506.5px;top:558px;width:180.5px;height:2.1px;background:#737a75;"></div>
<div class="a" style="left:2536.5px;top:566px;width:35.5px;height:35.5px;background:#262827;border-radius:5px;"></div>
<div class="a" style="left:2578.5px;top:566px;width:35.5px;height:35.5px;background:#262827;border-radius:5px;"></div>
<div class="a" style="left:2620.7px;top:566px;width:35.5px;height:35.5px;background:#262827;border-radius:5px;"></div>
<div class="t" style="left:2546.96px;top:574.57px;font-size:17.5px;line-height:17.5px;color:#dde3de;">M</div>
<div class="t" style="left:2590.51px;top:574.57px;font-size:17.5px;line-height:17.5px;color:#dde3de;">S</div>
<svg class="a" style="left:2620.7px;top:566px;" width="35.5" height="35.5" viewBox="0 0 35.5 35.5"><circle cx="17.9" cy="18" r="6.9" fill="none" stroke="#dde3de" stroke-width="1.7"/><line x1="10.4" y1="25.6" x2="25.7" y2="10.3" stroke="#dde3de" stroke-width="1.7"/></svg>
<svg class="a" style="left:2579.5px;top:605.9px;" width="34" height="34" viewBox="0 0 34 34"><circle cx="17" cy="17" r="13.5" fill="none" stroke="#eef3ef" stroke-width="3"/><line x1="15.73" y1="14.28" x2="11.84" y2="5.94" stroke="#eef3ef" stroke-width="2.8"/></svg>
<div class="t m" style="left:2581.73px;top:644.53px;font-size:16.6px;line-height:16.6px;color:#eef3ef;transform:scaleX(1.0949);transform-origin:14.77px 0;">Pan</div>
<div class="a" style="left:2521.5px;top:677px;width:59.8px;height:23.8px;background:#010202;border-radius:5px;"></div>
<div class="a" style="left:2611.5px;top:677px;width:59.8px;height:23.8px;background:#010202;border-radius:5px;"></div>
<div class="t m" style="left:2535.46px;top:681.82px;font-size:17.2px;line-height:17.2px;color:#64ec9a;letter-spacing:0.75px;transform:scaleX(1.0800);transform-origin:15.94px 0;">-5.8</div>
<div class="t m" style="left:2628.33px;top:681.82px;font-size:17.2px;line-height:17.2px;color:#64ec9a;letter-spacing:0.75px;transform:scaleX(1.0500);transform-origin:13.07px 0;">-inf</div>
<div class="t m" style="left:2513.44px;top:717.16px;font-size:14.8px;line-height:14.8px;color:#8b918d;transform:scaleX(0.8687);transform-origin:16.46px 0;">12</div>
<div class="t m" style="left:2521.67px;top:760.86px;font-size:14.8px;line-height:14.8px;color:#8b918d;">0</div>
<div class="t" style="left:2517.47px;top:892.35px;font-size:18px;line-height:18px;color:#8b918d;transform:scaleX(1.1923);transform-origin:12.83px 0;">∞</div>
<div class="a" style="left:2533.5px;top:723.85px;width:6px;height:1.5px;background:#8b918d;"></div>
<div class="a" style="left:2533.5px;top:767.55px;width:6px;height:1.5px;background:#8b918d;"></div>
<div class="a" style="left:2533.5px;top:900.85px;width:6px;height:1.5px;background:#8b918d;"></div>
<div class="a" style="left:2549.8px;top:726px;width:3px;height:178.5px;background:#050505;"></div>
<div class="a" style="left:2631.2px;top:713px;width:20.9px;height:191.5px;background:#030303;"></div>
<div class="a" style="left:2541.1px;top:771.5px;width:20.7px;height:36.8px;background:#f2fbf4;border-radius:4px;"></div>
<div class="a" style="left:2541.1px;top:788.8px;width:20.7px;height:2.6px;background:#0c0d0c;"></div>
<div class="a" style="left:2506.5px;top:924.3px;width:180.5px;height:2.1px;background:#737a75;"></div>
<div class="a" style="left:2506.5px;top:928.8px;width:180.5px;height:36px;background:#252726;border-radius:0 0 6px 6px;"></div>
<div class="t m" style="left:2518.8px;top:936.64px;font-size:18.6px;line-height:18.6px;color:#eef3ef;transform:scaleX(1.0254);transform-origin:0 0;">Cymbals Bus</div>
<svg class="a" style="left:2660.5px;top:939px;" width="16" height="14" viewBox="0 0 16 14"><path d="M3.4 5 L8 9.6 L12.6 5" fill="none" stroke="#9ba19d" stroke-width="1.6"/></svg>
<div class="a" style="left:2689.5px;top:138.75px;width:180.5px;height:826px;background:#111312;"></div>
<div class="a" style="left:2689.5px;top:102.2px;width:180.5px;height:36.3px;background:#b9a5d0;border-radius:5.5px 5.5px 0 0;"></div>
<svg class="a" style="left:2689.5px;top:102.2px;" width="180.5" height="36.3" viewBox="0 0 180.5 36.3"><circle cx="12.4" cy="14" r="1.6" fill="#111"/><circle cx="16.8" cy="14" r="1.6" fill="#111"/><circle cx="21.2" cy="14" r="1.6" fill="#111"/><circle cx="12.4" cy="18.4" r="1.6" fill="#111"/><circle cx="16.8" cy="18.4" r="1.6" fill="#111"/><circle cx="21.2" cy="18.4" r="1.6" fill="#111"/><circle cx="12.4" cy="22.8" r="1.6" fill="#111"/><circle cx="16.8" cy="22.8" r="1.6" fill="#111"/><circle cx="21.2" cy="22.8" r="1.6" fill="#111"/><circle cx="157.4" cy="14" r="1.6" fill="#111"/><circle cx="161.8" cy="14" r="1.6" fill="#111"/><circle cx="166.2" cy="14" r="1.6" fill="#111"/><circle cx="157.4" cy="18.4" r="1.6" fill="#111"/><circle cx="161.8" cy="18.4" r="1.6" fill="#111"/><circle cx="166.2" cy="18.4" r="1.6" fill="#111"/><circle cx="157.4" cy="22.8" r="1.6" fill="#111"/><circle cx="161.8" cy="22.8" r="1.6" fill="#111"/><circle cx="166.2" cy="22.8" r="1.6" fill="#111"/></svg>
<div class="t m" style="left:2734.5px;top:110.51px;font-size:18.4px;line-height:18.4px;color:#0d0f0e;transform:scaleX(1.0396);transform-origin:45px 0;">Overheads</div>
<div class="a" style="left:2689.5px;top:138.75px;width:180.5px;height:37.5px;background:#252726;border-radius:0 0 5.5px 5.5px;"></div>
<div class="t m" style="left:2702.1px;top:143.4px;font-size:29.5px;line-height:29.5px;color:#eef3ef;transform:scaleX(0.7131);transform-origin:0 0;">13</div>
<div class="t m" style="left:2732px;top:151.61px;font-size:18.4px;line-height:18.4px;color:#eef3ef;transform:scaleX(1.0918);transform-origin:0 0;">Inputs</div>
<svg class="a" style="left:2837.5px;top:146px;" width="26" height="26" viewBox="0 0 26 26"><path d="M10 4.6 H4.4 V22.3 H22.3 V16.6" fill="none" stroke="#9aa09c" stroke-width="1.7"/><path d="M13 13.6 L22.6 4 M15.6 3.6 H23 V11" fill="none" stroke="#9aa09c" stroke-width="1.7"/></svg>
<div class="a" style="left:2689.5px;top:177px;width:180.5px;height:2.25px;background:#737a75;"></div>
<div class="a" style="left:2694.2px;top:183.35px;width:170.2px;height:30px;background:#0e100f;border-radius:6px;box-sizing:border-box;border:1.8px solid #404543;"></div>
<svg class="a" style="left:2769.5px;top:188.75px;" width="20" height="20" viewBox="0 0 20 20"><path d="M10 3.7 V16.3 M3.7 10 H16.3" stroke="#a7aca8" stroke-width="1.5"/></svg>
<div class="a" style="left:2694.2px;top:220.85px;width:170.2px;height:30px;background:#0e100f;border-radius:6px;box-sizing:border-box;border:1.8px solid #404543;"></div>
<svg class="a" style="left:2769.5px;top:226.25px;" width="20" height="20" viewBox="0 0 20 20"><path d="M10 3.7 V16.3 M3.7 10 H16.3" stroke="#a7aca8" stroke-width="1.5"/></svg>
<div class="a" style="left:2694.2px;top:258.35px;width:170.2px;height:30px;background:#0e100f;border-radius:6px;box-sizing:border-box;border:1.8px solid #404543;"></div>
<svg class="a" style="left:2769.5px;top:263.75px;" width="20" height="20" viewBox="0 0 20 20"><path d="M10 3.7 V16.3 M3.7 10 H16.3" stroke="#a7aca8" stroke-width="1.5"/></svg>
<div class="a" style="left:2694.2px;top:295.85px;width:170.2px;height:30px;background:#0e100f;border-radius:6px;box-sizing:border-box;border:1.8px solid #404543;"></div>
<svg class="a" style="left:2769.5px;top:301.25px;" width="20" height="20" viewBox="0 0 20 20"><path d="M10 3.7 V16.3 M3.7 10 H16.3" stroke="#a7aca8" stroke-width="1.5"/></svg>
<div class="a" style="left:2694.2px;top:333.35px;width:170.2px;height:30px;background:#0e100f;border-radius:6px;box-sizing:border-box;border:1.8px solid #404543;"></div>
<svg class="a" style="left:2769.5px;top:338.75px;" width="20" height="20" viewBox="0 0 20 20"><path d="M10 3.7 V16.3 M3.7 10 H16.3" stroke="#a7aca8" stroke-width="1.5"/></svg>
<div class="a" style="left:2694.2px;top:370.85px;width:170.2px;height:30px;background:#0e100f;border-radius:6px;box-sizing:border-box;border:1.8px solid #404543;"></div>
<svg class="a" style="left:2769.5px;top:376.25px;" width="20" height="20" viewBox="0 0 20 20"><path d="M10 3.7 V16.3 M3.7 10 H16.3" stroke="#a7aca8" stroke-width="1.5"/></svg>
<div class="a" style="left:2689.5px;top:405px;width:180.5px;height:2.1px;background:#737a75;"></div>
<div class="a" style="left:2694.2px;top:411.35px;width:170.2px;height:30px;background:#0e100f;border-radius:6px;box-sizing:border-box;border:1.8px solid #404543;"></div>
<svg class="a" style="left:2769.5px;top:416.75px;" width="20" height="20" viewBox="0 0 20 20"><path d="M10 3.7 V16.3 M3.7 10 H16.3" stroke="#a7aca8" stroke-width="1.5"/></svg>
<div class="a" style="left:2694.2px;top:448.85px;width:170.2px;height:30px;background:#0e100f;border-radius:6px;box-sizing:border-box;border:1.8px solid #404543;"></div>
<svg class="a" style="left:2769.5px;top:454.25px;" width="20" height="20" viewBox="0 0 20 20"><path d="M10 3.7 V16.3 M3.7 10 H16.3" stroke="#a7aca8" stroke-width="1.5"/></svg>
<div class="a" style="left:2694.2px;top:486.35px;width:170.2px;height:30px;background:#0e100f;border-radius:6px;box-sizing:border-box;border:1.8px solid #404543;"></div>
<svg class="a" style="left:2769.5px;top:491.75px;" width="20" height="20" viewBox="0 0 20 20"><path d="M10 3.7 V16.3 M3.7 10 H16.3" stroke="#a7aca8" stroke-width="1.5"/></svg>
<div class="a" style="left:2694.2px;top:523.85px;width:170.2px;height:30px;background:#0e100f;border-radius:6px;box-sizing:border-box;border:1.8px solid #404543;"></div>
<svg class="a" style="left:2769.5px;top:529.25px;" width="20" height="20" viewBox="0 0 20 20"><path d="M10 3.7 V16.3 M3.7 10 H16.3" stroke="#a7aca8" stroke-width="1.5"/></svg>
<div class="a" style="left:2689.5px;top:558px;width:180.5px;height:2.1px;background:#737a75;"></div>
<div class="a" style="left:2719.5px;top:566px;width:35.5px;height:35.5px;background:#262827;border-radius:5px;"></div>
<div class="a" style="left:2761.5px;top:566px;width:35.5px;height:35.5px;background:#262827;border-radius:5px;"></div>
<div class="a" style="left:2803.7px;top:566px;width:35.5px;height:35.5px;background:#262827;border-radius:5px;"></div>
<div class="t" style="left:2729.96px;top:574.57px;font-size:17.5px;line-height:17.5px;color:#dde3de;">M</div>
<div class="t" style="left:2773.51px;top:574.57px;font-size:17.5px;line-height:17.5px;color:#dde3de;">S</div>
<svg class="a" style="left:2803.7px;top:566px;" width="35.5" height="35.5" viewBox="0 0 35.5 35.5"><circle cx="17.9" cy="18" r="6.9" fill="none" stroke="#dde3de" stroke-width="1.7"/><line x1="10.4" y1="25.6" x2="25.7" y2="10.3" stroke="#dde3de" stroke-width="1.7"/></svg>
<svg class="a" style="left:2722px;top:605.9px;" width="34" height="34" viewBox="0 0 34 34"><circle cx="17" cy="17" r="13.5" fill="none" stroke="#eef3ef" stroke-width="3"/><line x1="14.88" y1="19.12" x2="8.37" y2="25.63" stroke="#eef3ef" stroke-width="2.8"/></svg>
<div class="t m" style="left:2717.31px;top:644.53px;font-size:16.6px;line-height:16.6px;color:#eef3ef;transform:scaleX(1.0438);transform-origin:21.69px 0;">Pan L</div>
<svg class="a" style="left:2804.2px;top:605.9px;" width="34" height="34" viewBox="0 0 34 34"><circle cx="17" cy="17" r="13.5" fill="none" stroke="#eef3ef" stroke-width="3"/><line x1="19.12" y1="19.12" x2="25.63" y2="25.63" stroke="#eef3ef" stroke-width="2.8"/></svg>
<div class="t m" style="left:2798.13px;top:644.53px;font-size:16.6px;line-height:16.6px;color:#eef3ef;transform:scaleX(1.0195);transform-origin:23.07px 0;">Pan R</div>
<div class="a" style="left:2704.5px;top:677px;width:59.8px;height:23.8px;background:#010202;border-radius:5px;"></div>
<div class="a" style="left:2794.5px;top:677px;width:59.8px;height:23.8px;background:#010202;border-radius:5px;"></div>
<div class="t m" style="left:2721.69px;top:681.82px;font-size:17.2px;line-height:17.2px;color:#64ec9a;letter-spacing:0.75px;transform:scaleX(1.0800);transform-origin:12.71px 0;">0.0</div>
<div class="t m" style="left:2811.33px;top:681.82px;font-size:17.2px;line-height:17.2px;color:#64ec9a;letter-spacing:0.75px;transform:scaleX(1.0500);transform-origin:13.07px 0;">-inf</div>
<div class="t m" style="left:2696.44px;top:717.16px;font-size:14.8px;line-height:14.8px;color:#8b918d;transform:scaleX(0.8687);transform-origin:16.46px 0;">12</div>
<div class="t m" style="left:2704.67px;top:760.86px;font-size:14.8px;line-height:14.8px;color:#8b918d;">0</div>
<div class="t" style="left:2700.47px;top:892.35px;font-size:18px;line-height:18px;color:#8b918d;transform:scaleX(1.1923);transform-origin:12.83px 0;">∞</div>
<div class="a" style="left:2716.5px;top:723.85px;width:6px;height:1.5px;background:#8b918d;"></div>
<div class="a" style="left:2716.5px;top:767.55px;width:6px;height:1.5px;background:#8b918d;"></div>
<div class="a" style="left:2716.5px;top:900.85px;width:6px;height:1.5px;background:#8b918d;"></div>
<div class="a" style="left:2732.8px;top:726px;width:3px;height:178.5px;background:#050505;"></div>
<div class="a" style="left:2814.2px;top:713px;width:20.9px;height:191.5px;background:#030303;"></div>
<div class="a" style="left:2724.1px;top:750.2px;width:20.7px;height:36.8px;background:#f2fbf4;border-radius:4px;"></div>
<div class="a" style="left:2724.1px;top:767.5px;width:20.7px;height:2.6px;background:#0c0d0c;"></div>
<div class="a" style="left:2689.5px;top:924.3px;width:180.5px;height:2.1px;background:#737a75;"></div>
<div class="a" style="left:2689.5px;top:928.8px;width:180.5px;height:36px;background:#252726;border-radius:0 0 6px 6px;"></div>
<div class="t m" style="left:2701.8px;top:936.64px;font-size:18.6px;line-height:18.6px;color:#eef3ef;transform:scaleX(1.0254);transform-origin:0 0;">Cymbals Bus</div>
<svg class="a" style="left:2843.5px;top:939px;" width="16" height="14" viewBox="0 0 16 14"><path d="M3.4 5 L8 9.6 L12.6 5" fill="none" stroke="#9ba19d" stroke-width="1.6"/></svg>
<div class="a" style="left:2872.5px;top:138.75px;width:180.5px;height:826px;background:#111312;"></div>
<div class="a" style="left:2872.5px;top:102.2px;width:180.5px;height:36.3px;background:#b9a5d0;border-radius:5.5px 5.5px 0 0;"></div>
<svg class="a" style="left:2872.5px;top:102.2px;" width="180.5" height="36.3" viewBox="0 0 180.5 36.3"><circle cx="12.4" cy="14" r="1.6" fill="#111"/><circle cx="16.8" cy="14" r="1.6" fill="#111"/><circle cx="21.2" cy="14" r="1.6" fill="#111"/><circle cx="12.4" cy="18.4" r="1.6" fill="#111"/><circle cx="16.8" cy="18.4" r="1.6" fill="#111"/><circle cx="21.2" cy="18.4" r="1.6" fill="#111"/><circle cx="12.4" cy="22.8" r="1.6" fill="#111"/><circle cx="16.8" cy="22.8" r="1.6" fill="#111"/><circle cx="21.2" cy="22.8" r="1.6" fill="#111"/><circle cx="157.4" cy="14" r="1.6" fill="#111"/><circle cx="161.8" cy="14" r="1.6" fill="#111"/><circle cx="166.2" cy="14" r="1.6" fill="#111"/><circle cx="157.4" cy="18.4" r="1.6" fill="#111"/><circle cx="161.8" cy="18.4" r="1.6" fill="#111"/><circle cx="166.2" cy="18.4" r="1.6" fill="#111"/><circle cx="157.4" cy="22.8" r="1.6" fill="#111"/><circle cx="161.8" cy="22.8" r="1.6" fill="#111"/><circle cx="166.2" cy="22.8" r="1.6" fill="#111"/></svg>
<div class="t m" style="left:2912.39px;top:110.51px;font-size:18.4px;line-height:18.4px;color:#0d0f0e;transform:scaleX(0.9997);transform-origin:50.11px 0;">Room Mono</div>
<div class="a" style="left:2872.5px;top:138.75px;width:180.5px;height:37.5px;background:#252726;border-radius:0 0 5.5px 5.5px;"></div>
<div class="t m" style="left:2885.1px;top:143.4px;font-size:29.5px;line-height:29.5px;color:#eef3ef;transform:scaleX(0.7131);transform-origin:0 0;">13</div>
<div class="t m" style="left:2915px;top:151.61px;font-size:18.4px;line-height:18.4px;color:#eef3ef;transform:scaleX(1.0918);transform-origin:0 0;">Inputs</div>
<svg class="a" style="left:3020.5px;top:146px;" width="26" height="26" viewBox="0 0 26 26"><path d="M10 4.6 H4.4 V22.3 H22.3 V16.6" fill="none" stroke="#9aa09c" stroke-width="1.7"/><path d="M13 13.6 L22.6 4 M15.6 3.6 H23 V11" fill="none" stroke="#9aa09c" stroke-width="1.7"/></svg>
<div class="a" style="left:2872.5px;top:177px;width:180.5px;height:2.25px;background:#737a75;"></div>
<div class="a" style="left:2872.5px;top:180.4px;width:180.5px;height:36.1px;background:#3b3e3c;border-radius:6px;"></div>
<div class="a" style="left:2909.1px;top:180.4px;width:1.3px;height:36.1px;background:#171918;"></div>
<svg class="a" style="left:2872.5px;top:180.4px;" width="36" height="36" viewBox="0 0 36 36"><path d="M14.77 12.14 A7.4 7.4 0 1 0 22.83 12.14" fill="none" stroke="#eef3ef" stroke-width="2.3" stroke-linecap="round"/><line x1="18.8" y1="7.55" x2="18.8" y2="19.65" stroke="#eef3ef" stroke-width="2.5" stroke-linecap="butt"/></svg>
<div class="t m" style="left:2922px;top:191.04px;font-size:17.6px;line-height:17.6px;color:#eef3ef;transform:scaleX(1.0918);transform-origin:0 0;">Vint. Comp</div>
<div class="a" style="left:2872.5px;top:217.9px;width:180.5px;height:36.1px;background:#3b3e3c;border-radius:6px;"></div>
<div class="a" style="left:2909.1px;top:217.9px;width:1.3px;height:36.1px;background:#171918;"></div>
<svg class="a" style="left:2872.5px;top:217.9px;" width="36" height="36" viewBox="0 0 36 36"><path d="M14.77 12.14 A7.4 7.4 0 1 0 22.83 12.14" fill="none" stroke="#eef3ef" stroke-width="2.3" stroke-linecap="round"/><line x1="18.8" y1="7.55" x2="18.8" y2="19.65" stroke="#eef3ef" stroke-width="2.5" stroke-linecap="butt"/></svg>
<div class="t m" style="left:2922px;top:228.54px;font-size:17.6px;line-height:17.6px;color:#eef3ef;transform:scaleX(0.9157);transform-origin:0 0;">EQ</div>
<div class="a" style="left:2872.5px;top:255.4px;width:180.5px;height:36.1px;background:#3b3e3c;border-radius:6px;"></div>
<div class="a" style="left:2909.1px;top:255.4px;width:1.3px;height:36.1px;background:#171918;"></div>
<svg class="a" style="left:2872.5px;top:255.4px;" width="36" height="36" viewBox="0 0 36 36"><path d="M14.77 12.14 A7.4 7.4 0 1 0 22.83 12.14" fill="none" stroke="#eef3ef" stroke-width="2.3" stroke-linecap="round"/><line x1="18.8" y1="7.55" x2="18.8" y2="19.65" stroke="#eef3ef" stroke-width="2.5" stroke-linecap="butt"/></svg>
<div class="t m" style="left:2922px;top:266.04px;font-size:17.6px;line-height:17.6px;color:#eef3ef;transform:scaleX(1.1107);transform-origin:0 0;">Transient</div>
<div class="a" style="left:2872.5px;top:292.9px;width:180.5px;height:36.1px;background:#3b3e3c;border-radius:6px;"></div>
<div class="a" style="left:2909.1px;top:292.9px;width:1.3px;height:36.1px;background:#171918;"></div>
<svg class="a" style="left:2872.5px;top:292.9px;" width="36" height="36" viewBox="0 0 36 36"><path d="M14.77 12.14 A7.4 7.4 0 1 0 22.83 12.14" fill="none" stroke="#eef3ef" stroke-width="2.3" stroke-linecap="round"/><line x1="18.8" y1="7.55" x2="18.8" y2="19.65" stroke="#eef3ef" stroke-width="2.5" stroke-linecap="butt"/></svg>
<div class="t m" style="left:2922px;top:303.54px;font-size:17.6px;line-height:17.6px;color:#eef3ef;transform:scaleX(1.0998);transform-origin:0 0;">Drive</div>
<div class="a" style="left:2872.5px;top:330.4px;width:180.5px;height:36.1px;background:#3b3e3c;border-radius:6px;"></div>
<div class="a" style="left:2909.1px;top:330.4px;width:1.3px;height:36.1px;background:#171918;"></div>
<svg class="a" style="left:2872.5px;top:330.4px;" width="36" height="36" viewBox="0 0 36 36"><path d="M14.77 12.14 A7.4 7.4 0 1 0 22.83 12.14" fill="none" stroke="#eef3ef" stroke-width="2.3" stroke-linecap="round"/><line x1="18.8" y1="7.55" x2="18.8" y2="19.65" stroke="#eef3ef" stroke-width="2.5" stroke-linecap="butt"/></svg>
<div class="t m" style="left:2922px;top:341.04px;font-size:17.6px;line-height:17.6px;color:#eef3ef;transform:scaleX(1.1398);transform-origin:0 0;">Limiter</div>
<div class="a" style="left:2877.2px;top:370.85px;width:170.2px;height:30px;background:#0e100f;border-radius:6px;box-sizing:border-box;border:1.8px solid #404543;"></div>
<svg class="a" style="left:2952.5px;top:376.25px;" width="20" height="20" viewBox="0 0 20 20"><path d="M10 3.7 V16.3 M3.7 10 H16.3" stroke="#a7aca8" stroke-width="1.5"/></svg>
<div class="a" style="left:2872.5px;top:405px;width:180.5px;height:2.1px;background:#737a75;"></div>
<div class="a" style="left:2872.5px;top:408.75px;width:128.8px;height:35.75px;background:#3b3e3c;border-radius:6px;overflow:hidden;">
<div class="a" style="left:36.6px;top:0;width:1.3px;height:36px;background:#171918"></div>
<svg class="a" style="left:0;top:0" width="36" height="36"><path d="M14.77 11.89 A7.4 7.4 0 1 0 22.83 11.89" fill="none" stroke="#eef3ef" stroke-width="2.3" stroke-linecap="round"/><line x1="18.8" y1="7.3" x2="18.8" y2="19.4" stroke="#eef3ef" stroke-width="2.5" stroke-linecap="butt"/></svg>
<div class="t m" style="left:49.5px;top:10.29px;font-size:17.6px;line-height:17.6px;color:#eef3ef;transform:scaleX(1.0705);transform-origin:0 0;">Reverb</div>
</div>
<svg class="a" style="left:3003.5px;top:408.75px;" width="50" height="36" viewBox="0 0 50 36"><circle cx="15.7" cy="17.6" r="10.6" fill="none" stroke="#eef3ef" stroke-width="2.9"/><line x1="15.7" y1="15.8" x2="15.7" y2="7.4" stroke="#eef3ef" stroke-width="2.9"/><path d="M32.4 17.6 H43.6 M38.3 12.4 L43.6 17.6 L38.3 22.8" fill="none" stroke="#7d837f" stroke-width="2.1" stroke-linecap="round" stroke-linejoin="round"/></svg>
<div class="a" style="left:2877.2px;top:448.85px;width:170.2px;height:30px;background:#0e100f;border-radius:6px;box-sizing:border-box;border:1.8px solid #404543;"></div>
<svg class="a" style="left:2952.5px;top:454.25px;" width="20" height="20" viewBox="0 0 20 20"><path d="M10 3.7 V16.3 M3.7 10 H16.3" stroke="#a7aca8" stroke-width="1.5"/></svg>
<div class="a" style="left:2877.2px;top:486.35px;width:170.2px;height:30px;background:#0e100f;border-radius:6px;box-sizing:border-box;border:1.8px solid #404543;"></div>
<svg class="a" style="left:2952.5px;top:491.75px;" width="20" height="20" viewBox="0 0 20 20"><path d="M10 3.7 V16.3 M3.7 10 H16.3" stroke="#a7aca8" stroke-width="1.5"/></svg>
<div class="a" style="left:2877.2px;top:523.85px;width:170.2px;height:30px;background:#0e100f;border-radius:6px;box-sizing:border-box;border:1.8px solid #404543;"></div>
<svg class="a" style="left:2952.5px;top:529.25px;" width="20" height="20" viewBox="0 0 20 20"><path d="M10 3.7 V16.3 M3.7 10 H16.3" stroke="#a7aca8" stroke-width="1.5"/></svg>
<div class="a" style="left:2872.5px;top:558px;width:180.5px;height:2.1px;background:#737a75;"></div>
<div class="a" style="left:2902.5px;top:566px;width:35.5px;height:35.5px;background:#262827;border-radius:5px;"></div>
<div class="a" style="left:2944.5px;top:566px;width:35.5px;height:35.5px;background:#262827;border-radius:5px;"></div>
<div class="a" style="left:2986.7px;top:566px;width:35.5px;height:35.5px;background:#262827;border-radius:5px;"></div>
<div class="t" style="left:2912.96px;top:574.57px;font-size:17.5px;line-height:17.5px;color:#dde3de;">M</div>
<div class="t" style="left:2956.51px;top:574.57px;font-size:17.5px;line-height:17.5px;color:#dde3de;">S</div>
<svg class="a" style="left:2986.7px;top:566px;" width="35.5" height="35.5" viewBox="0 0 35.5 35.5"><circle cx="17.9" cy="18" r="6.9" fill="none" stroke="#dde3de" stroke-width="1.7"/><line x1="10.4" y1="25.6" x2="25.7" y2="10.3" stroke="#dde3de" stroke-width="1.7"/></svg>
<svg class="a" style="left:2945.5px;top:605.9px;" width="34" height="34" viewBox="0 0 34 34"><circle cx="17" cy="17" r="13.5" fill="none" stroke="#eef3ef" stroke-width="3"/><line x1="17" y1="14" x2="17" y2="4.8" stroke="#eef3ef" stroke-width="2.8"/></svg>
<div class="t m" style="left:2947.73px;top:644.53px;font-size:16.6px;line-height:16.6px;color:#eef3ef;transform:scaleX(1.0949);transform-origin:14.77px 0;">Pan</div>
<div class="a" style="left:2887.5px;top:677px;width:59.8px;height:23.8px;background:#010202;border-radius:5px;"></div>
<div class="a" style="left:2977.5px;top:677px;width:59.8px;height:23.8px;background:#010202;border-radius:5px;"></div>
<div class="t m" style="left:2896.3px;top:681.82px;font-size:17.2px;line-height:17.2px;color:#64ec9a;letter-spacing:0.75px;transform:scaleX(1.0800);transform-origin:21.1px 0;">-19.0</div>
<div class="t m" style="left:2994.33px;top:681.82px;font-size:17.2px;line-height:17.2px;color:#64ec9a;letter-spacing:0.75px;transform:scaleX(1.0500);transform-origin:13.07px 0;">-inf</div>
<div class="t m" style="left:2879.44px;top:717.16px;font-size:14.8px;line-height:14.8px;color:#8b918d;transform:scaleX(0.8687);transform-origin:16.46px 0;">12</div>
<div class="t m" style="left:2887.67px;top:760.86px;font-size:14.8px;line-height:14.8px;color:#8b918d;">0</div>
<div class="t" style="left:2883.47px;top:892.35px;font-size:18px;line-height:18px;color:#8b918d;transform:scaleX(1.1923);transform-origin:12.83px 0;">∞</div>
<div class="a" style="left:2899.5px;top:723.85px;width:6px;height:1.5px;background:#8b918d;"></div>
<div class="a" style="left:2899.5px;top:767.55px;width:6px;height:1.5px;background:#8b918d;"></div>
<div class="a" style="left:2899.5px;top:900.85px;width:6px;height:1.5px;background:#8b918d;"></div>
<div class="a" style="left:2915.8px;top:726px;width:3px;height:178.5px;background:#050505;"></div>
<div class="a" style="left:2997.2px;top:713px;width:20.9px;height:191.5px;background:#030303;"></div>
<div class="a" style="left:2907.1px;top:817.7px;width:20.7px;height:36.8px;background:#f2fbf4;border-radius:4px;"></div>
<div class="a" style="left:2907.1px;top:835px;width:20.7px;height:2.6px;background:#0c0d0c;"></div>
<div class="a" style="left:2872.5px;top:924.3px;width:180.5px;height:2.1px;background:#737a75;"></div>
<div class="a" style="left:2872.5px;top:928.8px;width:180.5px;height:36px;background:#252726;border-radius:0 0 6px 6px;"></div>
<div class="t m" style="left:2884.8px;top:936.64px;font-size:18.6px;line-height:18.6px;color:#eef3ef;transform:scaleX(1.0069);transform-origin:0 0;">Stereo 21/22</div>
<svg class="a" style="left:3026.5px;top:939px;" width="16" height="14" viewBox="0 0 16 14"><path d="M3.4 5 L8 9.6 L12.6 5" fill="none" stroke="#9ba19d" stroke-width="1.6"/></svg>
<div class="a" style="left:3055.5px;top:138.75px;width:180.5px;height:826px;background:#111312;"></div>
<div class="a" style="left:3055.5px;top:102.2px;width:180.5px;height:36.3px;background:#b9a5d0;border-radius:5.5px 5.5px 0 0;"></div>
<svg class="a" style="left:3055.5px;top:102.2px;" width="180.5" height="36.3" viewBox="0 0 180.5 36.3"><circle cx="12.4" cy="14" r="1.6" fill="#111"/><circle cx="16.8" cy="14" r="1.6" fill="#111"/><circle cx="21.2" cy="14" r="1.6" fill="#111"/><circle cx="12.4" cy="18.4" r="1.6" fill="#111"/><circle cx="16.8" cy="18.4" r="1.6" fill="#111"/><circle cx="21.2" cy="18.4" r="1.6" fill="#111"/><circle cx="12.4" cy="22.8" r="1.6" fill="#111"/><circle cx="16.8" cy="22.8" r="1.6" fill="#111"/><circle cx="21.2" cy="22.8" r="1.6" fill="#111"/><circle cx="157.4" cy="14" r="1.6" fill="#111"/><circle cx="161.8" cy="14" r="1.6" fill="#111"/><circle cx="166.2" cy="14" r="1.6" fill="#111"/><circle cx="157.4" cy="18.4" r="1.6" fill="#111"/><circle cx="161.8" cy="18.4" r="1.6" fill="#111"/><circle cx="166.2" cy="18.4" r="1.6" fill="#111"/><circle cx="157.4" cy="22.8" r="1.6" fill="#111"/><circle cx="161.8" cy="22.8" r="1.6" fill="#111"/><circle cx="166.2" cy="22.8" r="1.6" fill="#111"/></svg>
<div class="t m" style="left:3094.88px;top:110.51px;font-size:18.4px;line-height:18.4px;color:#0d0f0e;transform:scaleX(1.0159);transform-origin:50.62px 0;">Room Close</div>
<div class="a" style="left:3055.5px;top:138.75px;width:180.5px;height:37.5px;background:#252726;border-radius:0 0 5.5px 5.5px;"></div>
<div class="t m" style="left:3068.1px;top:143.4px;font-size:29.5px;line-height:29.5px;color:#eef3ef;transform:scaleX(0.7131);transform-origin:0 0;">13</div>
<div class="t m" style="left:3098px;top:151.61px;font-size:18.4px;line-height:18.4px;color:#eef3ef;transform:scaleX(1.0918);transform-origin:0 0;">Inputs</div>
<svg class="a" style="left:3203.5px;top:146px;" width="26" height="26" viewBox="0 0 26 26"><path d="M10 4.6 H4.4 V22.3 H22.3 V16.6" fill="none" stroke="#9aa09c" stroke-width="1.7"/><path d="M13 13.6 L22.6 4 M15.6 3.6 H23 V11" fill="none" stroke="#9aa09c" stroke-width="1.7"/></svg>
<div class="a" style="left:3055.5px;top:177px;width:180.5px;height:2.25px;background:#737a75;"></div>
<div class="a" style="left:3055.5px;top:180.4px;width:180.5px;height:36.1px;background:#3b3e3c;border-radius:6px;"></div>
<div class="a" style="left:3092.1px;top:180.4px;width:1.3px;height:36.1px;background:#171918;"></div>
<svg class="a" style="left:3055.5px;top:180.4px;" width="36" height="36" viewBox="0 0 36 36"><path d="M14.77 12.14 A7.4 7.4 0 1 0 22.83 12.14" fill="none" stroke="#eef3ef" stroke-width="2.3" stroke-linecap="round"/><line x1="18.8" y1="7.55" x2="18.8" y2="19.65" stroke="#eef3ef" stroke-width="2.5" stroke-linecap="butt"/></svg>
<div class="t m" style="left:3105px;top:191.04px;font-size:17.6px;line-height:17.6px;color:#eef3ef;transform:scaleX(0.9157);transform-origin:0 0;">EQ</div>
<div class="a" style="left:3055.5px;top:217.9px;width:180.5px;height:36.1px;background:#3b3e3c;border-radius:6px;"></div>
<div class="a" style="left:3092.1px;top:217.9px;width:1.3px;height:36.1px;background:#171918;"></div>
<svg class="a" style="left:3055.5px;top:217.9px;" width="36" height="36" viewBox="0 0 36 36"><path d="M14.77 12.14 A7.4 7.4 0 1 0 22.83 12.14" fill="none" stroke="#eef3ef" stroke-width="2.3" stroke-linecap="round"/><line x1="18.8" y1="7.55" x2="18.8" y2="19.65" stroke="#eef3ef" stroke-width="2.5" stroke-linecap="butt"/></svg>
<div class="t m" style="left:3105px;top:228.54px;font-size:17.6px;line-height:17.6px;color:#eef3ef;transform:scaleX(0.9157);transform-origin:0 0;">EQ</div>
<div class="a" style="left:3055.5px;top:255.4px;width:180.5px;height:36.1px;background:#3b3e3c;border-radius:6px;"></div>
<div class="a" style="left:3092.1px;top:255.4px;width:1.3px;height:36.1px;background:#171918;"></div>
<svg class="a" style="left:3055.5px;top:255.4px;" width="36" height="36" viewBox="0 0 36 36"><path d="M14.77 12.14 A7.4 7.4 0 1 0 22.83 12.14" fill="none" stroke="#eef3ef" stroke-width="2.3" stroke-linecap="round"/><line x1="18.8" y1="7.55" x2="18.8" y2="19.65" stroke="#eef3ef" stroke-width="2.5" stroke-linecap="butt"/></svg>
<div class="t m" style="left:3105px;top:266.04px;font-size:17.6px;line-height:17.6px;color:#eef3ef;transform:scaleX(1.1107);transform-origin:0 0;">Transient</div>
<div class="a" style="left:3055.5px;top:292.9px;width:180.5px;height:36.1px;background:#3b3e3c;border-radius:6px;"></div>
<div class="a" style="left:3092.1px;top:292.9px;width:1.3px;height:36.1px;background:#171918;"></div>
<svg class="a" style="left:3055.5px;top:292.9px;" width="36" height="36" viewBox="0 0 36 36"><path d="M14.77 12.14 A7.4 7.4 0 1 0 22.83 12.14" fill="none" stroke="#eef3ef" stroke-width="2.3" stroke-linecap="round"/><line x1="18.8" y1="7.55" x2="18.8" y2="19.65" stroke="#eef3ef" stroke-width="2.5" stroke-linecap="butt"/></svg>
<div class="t m" style="left:3105px;top:303.54px;font-size:17.6px;line-height:17.6px;color:#eef3ef;transform:scaleX(0.9157);transform-origin:0 0;">EQ</div>
<div class="a" style="left:3055.5px;top:330.4px;width:180.5px;height:36.1px;background:#3b3e3c;border-radius:6px;"></div>
<div class="a" style="left:3092.1px;top:330.4px;width:1.3px;height:36.1px;background:#171918;"></div>
<svg class="a" style="left:3055.5px;top:330.4px;" width="36" height="36" viewBox="0 0 36 36"><path d="M14.77 12.14 A7.4 7.4 0 1 0 22.83 12.14" fill="none" stroke="#eef3ef" stroke-width="2.3" stroke-linecap="round"/><line x1="18.8" y1="7.55" x2="18.8" y2="19.65" stroke="#eef3ef" stroke-width="2.5" stroke-linecap="butt"/></svg>
<div class="t m" style="left:3105px;top:341.04px;font-size:17.6px;line-height:17.6px;color:#eef3ef;transform:scaleX(1.1398);transform-origin:0 0;">Limiter</div>
<div class="a" style="left:3060.2px;top:370.85px;width:170.2px;height:30px;background:#0e100f;border-radius:6px;box-sizing:border-box;border:1.8px solid #404543;"></div>
<svg class="a" style="left:3135.5px;top:376.25px;" width="20" height="20" viewBox="0 0 20 20"><path d="M10 3.7 V16.3 M3.7 10 H16.3" stroke="#a7aca8" stroke-width="1.5"/></svg>
<div class="a" style="left:3055.5px;top:405px;width:180.5px;height:2.1px;background:#737a75;"></div>
<div class="a" style="left:3055.5px;top:408.75px;width:128.8px;height:35.75px;background:#3b3e3c;border-radius:6px;overflow:hidden;">
<div class="a" style="left:36.6px;top:0;width:1.3px;height:36px;background:#171918"></div>
<svg class="a" style="left:0;top:0" width="36" height="36"><path d="M14.77 11.89 A7.4 7.4 0 1 0 22.83 11.89" fill="none" stroke="#eef3ef" stroke-width="2.3" stroke-linecap="round"/><line x1="18.8" y1="7.3" x2="18.8" y2="19.4" stroke="#eef3ef" stroke-width="2.5" stroke-linecap="butt"/></svg>
<div class="t m" style="left:49.5px;top:10.29px;font-size:17.6px;line-height:17.6px;color:#eef3ef;transform:scaleX(1.0705);transform-origin:0 0;">Reverb</div>
</div>
<svg class="a" style="left:3186.5px;top:408.75px;" width="50" height="36" viewBox="0 0 50 36"><circle cx="15.7" cy="17.6" r="10.6" fill="none" stroke="#eef3ef" stroke-width="2.9"/><line x1="15.7" y1="15.8" x2="15.7" y2="7.4" stroke="#eef3ef" stroke-width="2.9"/><path d="M32.4 17.6 H43.6 M38.3 12.4 L43.6 17.6 L38.3 22.8" fill="none" stroke="#7d837f" stroke-width="2.1" stroke-linecap="round" stroke-linejoin="round"/></svg>
<div class="a" style="left:3055.5px;top:446.25px;width:128.8px;height:35.75px;background:#3b3e3c;border-radius:6px;overflow:hidden;">
<div class="a" style="left:36.6px;top:0;width:1.3px;height:36px;background:#171918"></div>
<svg class="a" style="left:0;top:0" width="36" height="36"><path d="M14.77 11.89 A7.4 7.4 0 1 0 22.83 11.89" fill="none" stroke="#eef3ef" stroke-width="2.3" stroke-linecap="round"/><line x1="18.8" y1="7.3" x2="18.8" y2="19.4" stroke="#eef3ef" stroke-width="2.5" stroke-linecap="butt"/></svg>
<div class="t m" style="left:49.5px;top:10.29px;font-size:17.6px;line-height:17.6px;color:#eef3ef;transform:scaleX(0.9715);transform-origin:0 0;">PRL Comp</div>
</div>
<svg class="a" style="left:3186.5px;top:446.25px;" width="50" height="36" viewBox="0 0 50 36"><circle cx="15.7" cy="17.6" r="10.6" fill="none" stroke="#eef3ef" stroke-width="2.9"/><line x1="16.46" y1="15.97" x2="20.01" y2="8.36" stroke="#eef3ef" stroke-width="2.9"/><path d="M32.4 17.6 H43.6 M38.3 12.4 L43.6 17.6 L38.3 22.8" fill="none" stroke="#7d837f" stroke-width="2.1" stroke-linecap="round" stroke-linejoin="round"/></svg>
<div class="a" style="left:3060.2px;top:486.35px;width:170.2px;height:30px;background:#0e100f;border-radius:6px;box-sizing:border-box;border:1.8px solid #404543;"></div>
<svg class="a" style="left:3135.5px;top:491.75px;" width="20" height="20" viewBox="0 0 20 20"><path d="M10 3.7 V16.3 M3.7 10 H16.3" stroke="#a7aca8" stroke-width="1.5"/></svg>
<div class="a" style="left:3060.2px;top:523.85px;width:170.2px;height:30px;background:#0e100f;border-radius:6px;box-sizing:border-box;border:1.8px solid #404543;"></div>
<svg class="a" style="left:3135.5px;top:529.25px;" width="20" height="20" viewBox="0 0 20 20"><path d="M10 3.7 V16.3 M3.7 10 H16.3" stroke="#a7aca8" stroke-width="1.5"/></svg>
<div class="a" style="left:3055.5px;top:558px;width:180.5px;height:2.1px;background:#737a75;"></div>
<div class="a" style="left:3085.5px;top:566px;width:35.5px;height:35.5px;background:#262827;border-radius:5px;"></div>
<div class="a" style="left:3127.5px;top:566px;width:35.5px;height:35.5px;background:#262827;border-radius:5px;"></div>
<div class="a" style="left:3169.7px;top:566px;width:35.5px;height:35.5px;background:#262827;border-radius:5px;"></div>
<div class="t" style="left:3095.96px;top:574.57px;font-size:17.5px;line-height:17.5px;color:#dde3de;">M</div>
<div class="t" style="left:3139.51px;top:574.57px;font-size:17.5px;line-height:17.5px;color:#dde3de;">S</div>
<svg class="a" style="left:3169.7px;top:566px;" width="35.5" height="35.5" viewBox="0 0 35.5 35.5"><circle cx="17.9" cy="18" r="6.9" fill="none" stroke="#dde3de" stroke-width="1.7"/><line x1="10.4" y1="25.6" x2="25.7" y2="10.3" stroke="#dde3de" stroke-width="1.7"/></svg>
<svg class="a" style="left:3088px;top:605.9px;" width="34" height="34" viewBox="0 0 34 34"><circle cx="17" cy="17" r="13.5" fill="none" stroke="#eef3ef" stroke-width="3"/><line x1="14.03" y1="17.42" x2="4.92" y2="18.7" stroke="#eef3ef" stroke-width="2.8"/></svg>
<div class="t m" style="left:3083.31px;top:644.53px;font-size:16.6px;line-height:16.6px;color:#eef3ef;transform:scaleX(1.0438);transform-origin:21.69px 0;">Pan L</div>
<svg class="a" style="left:3170.2px;top:605.9px;" width="34" height="34" viewBox="0 0 34 34"><circle cx="17" cy="17" r="13.5" fill="none" stroke="#eef3ef" stroke-width="3"/><line x1="19.9" y1="17.78" x2="28.78" y2="20.16" stroke="#eef3ef" stroke-width="2.8"/></svg>
<div class="t m" style="left:3164.13px;top:644.53px;font-size:16.6px;line-height:16.6px;color:#eef3ef;transform:scaleX(1.0195);transform-origin:23.07px 0;">Pan R</div>
<div class="a" style="left:3070.5px;top:677px;width:59.8px;height:23.8px;background:#010202;border-radius:5px;"></div>
<div class="a" style="left:3160.5px;top:677px;width:59.8px;height:23.8px;background:#010202;border-radius:5px;"></div>
<div class="t m" style="left:3079.3px;top:681.82px;font-size:17.2px;line-height:17.2px;color:#64ec9a;letter-spacing:0.75px;transform:scaleX(1.0800);transform-origin:21.1px 0;">-12.0</div>
<div class="t m" style="left:3177.33px;top:681.82px;font-size:17.2px;line-height:17.2px;color:#64ec9a;letter-spacing:0.75px;transform:scaleX(1.0500);transform-origin:13.07px 0;">-inf</div>
<div class="t m" style="left:3062.44px;top:717.16px;font-size:14.8px;line-height:14.8px;color:#8b918d;transform:scaleX(0.8687);transform-origin:16.46px 0;">12</div>
<div class="t m" style="left:3070.67px;top:760.86px;font-size:14.8px;line-height:14.8px;color:#8b918d;">0</div>
<div class="t" style="left:3066.47px;top:892.35px;font-size:18px;line-height:18px;color:#8b918d;transform:scaleX(1.1923);transform-origin:12.83px 0;">∞</div>
<div class="a" style="left:3082.5px;top:723.85px;width:6px;height:1.5px;background:#8b918d;"></div>
<div class="a" style="left:3082.5px;top:767.55px;width:6px;height:1.5px;background:#8b918d;"></div>
<div class="a" style="left:3082.5px;top:900.85px;width:6px;height:1.5px;background:#8b918d;"></div>
<div class="a" style="left:3098.8px;top:726px;width:3px;height:178.5px;background:#050505;"></div>
<div class="a" style="left:3180.2px;top:713px;width:20.9px;height:191.5px;background:#030303;"></div>
<div class="a" style="left:3090.1px;top:793.9px;width:20.7px;height:36.8px;background:#f2fbf4;border-radius:4px;"></div>
<div class="a" style="left:3090.1px;top:811.2px;width:20.7px;height:2.6px;background:#0c0d0c;"></div>
<div class="a" style="left:3055.5px;top:924.3px;width:180.5px;height:2.1px;background:#737a75;"></div>
<div class="a" style="left:3055.5px;top:928.8px;width:180.5px;height:36px;background:#252726;border-radius:0 0 6px 6px;"></div>
<div class="t m" style="left:3067.8px;top:936.64px;font-size:18.6px;line-height:18.6px;color:#eef3ef;transform:scaleX(1.0254);transform-origin:0 0;">Stereo 23/24</div>
<svg class="a" style="left:3209.5px;top:939px;" width="16" height="14" viewBox="0 0 16 14"><path d="M3.4 5 L8 9.6 L12.6 5" fill="none" stroke="#9ba19d" stroke-width="1.6"/></svg>
<div class="a" style="left:3238.5px;top:138.75px;width:180.5px;height:826px;background:#111312;"></div>
<div class="a" style="left:3238.5px;top:102.2px;width:180.5px;height:36.3px;background:#b9a5d0;border-radius:5.5px 5.5px 0 0;"></div>
<svg class="a" style="left:3238.5px;top:102.2px;" width="180.5" height="36.3" viewBox="0 0 180.5 36.3"><circle cx="12.4" cy="14" r="1.6" fill="#111"/><circle cx="16.8" cy="14" r="1.6" fill="#111"/><circle cx="21.2" cy="14" r="1.6" fill="#111"/><circle cx="12.4" cy="18.4" r="1.6" fill="#111"/><circle cx="16.8" cy="18.4" r="1.6" fill="#111"/><circle cx="21.2" cy="18.4" r="1.6" fill="#111"/><circle cx="12.4" cy="22.8" r="1.6" fill="#111"/><circle cx="16.8" cy="22.8" r="1.6" fill="#111"/><circle cx="21.2" cy="22.8" r="1.6" fill="#111"/><circle cx="157.4" cy="14" r="1.6" fill="#111"/><circle cx="161.8" cy="14" r="1.6" fill="#111"/><circle cx="166.2" cy="14" r="1.6" fill="#111"/><circle cx="157.4" cy="18.4" r="1.6" fill="#111"/><circle cx="161.8" cy="18.4" r="1.6" fill="#111"/><circle cx="166.2" cy="18.4" r="1.6" fill="#111"/><circle cx="157.4" cy="22.8" r="1.6" fill="#111"/><circle cx="161.8" cy="22.8" r="1.6" fill="#111"/><circle cx="166.2" cy="22.8" r="1.6" fill="#111"/></svg>
<div class="t m" style="left:3287.6px;top:110.51px;font-size:18.4px;line-height:18.4px;color:#0d0f0e;transform:scaleX(1.0009);transform-origin:40.9px 0;">Room Far</div>
<div class="a" style="left:3238.5px;top:138.75px;width:180.5px;height:37.5px;background:#252726;border-radius:0 0 5.5px 5.5px;"></div>
<div class="t m" style="left:3251.1px;top:143.4px;font-size:29.5px;line-height:29.5px;color:#eef3ef;transform:scaleX(0.7131);transform-origin:0 0;">13</div>
<div class="t m" style="left:3281px;top:151.61px;font-size:18.4px;line-height:18.4px;color:#eef3ef;transform:scaleX(1.0918);transform-origin:0 0;">Inputs</div>
<svg class="a" style="left:3386.5px;top:146px;" width="26" height="26" viewBox="0 0 26 26"><path d="M10 4.6 H4.4 V22.3 H22.3 V16.6" fill="none" stroke="#9aa09c" stroke-width="1.7"/><path d="M13 13.6 L22.6 4 M15.6 3.6 H23 V11" fill="none" stroke="#9aa09c" stroke-width="1.7"/></svg>
<div class="a" style="left:3238.5px;top:177px;width:180.5px;height:2.25px;background:#737a75;"></div>
<div class="a" style="left:3238.5px;top:180.4px;width:180.5px;height:36.1px;background:#3b3e3c;border-radius:6px;"></div>
<div class="a" style="left:3275.1px;top:180.4px;width:1.3px;height:36.1px;background:#171918;"></div>
<svg class="a" style="left:3238.5px;top:180.4px;" width="36" height="36" viewBox="0 0 36 36"><path d="M14.77 12.14 A7.4 7.4 0 1 0 22.83 12.14" fill="none" stroke="#eef3ef" stroke-width="2.3" stroke-linecap="round"/><line x1="18.8" y1="7.55" x2="18.8" y2="19.65" stroke="#eef3ef" stroke-width="2.5" stroke-linecap="butt"/></svg>
<div class="t m" style="left:3288px;top:191.04px;font-size:17.6px;line-height:17.6px;color:#eef3ef;transform:scaleX(0.9157);transform-origin:0 0;">EQ</div>
<div class="a" style="left:3238.5px;top:217.9px;width:180.5px;height:36.1px;background:#3b3e3c;border-radius:6px;"></div>
<div class="a" style="left:3275.1px;top:217.9px;width:1.3px;height:36.1px;background:#171918;"></div>
<svg class="a" style="left:3238.5px;top:217.9px;" width="36" height="36" viewBox="0 0 36 36"><path d="M14.77 12.14 A7.4 7.4 0 1 0 22.83 12.14" fill="none" stroke="#eef3ef" stroke-width="2.3" stroke-linecap="round"/><line x1="18.8" y1="7.55" x2="18.8" y2="19.65" stroke="#eef3ef" stroke-width="2.5" stroke-linecap="butt"/></svg>
<div class="t m" style="left:3288px;top:228.54px;font-size:17.6px;line-height:17.6px;color:#eef3ef;transform:scaleX(1.0918);transform-origin:0 0;">Vint. Comp</div>
<div class="a" style="left:3238.5px;top:255.4px;width:180.5px;height:36.1px;background:#3b3e3c;border-radius:6px;"></div>
<div class="a" style="left:3275.1px;top:255.4px;width:1.3px;height:36.1px;background:#171918;"></div>
<svg class="a" style="left:3238.5px;top:255.4px;" width="36" height="36" viewBox="0 0 36 36"><path d="M14.77 12.14 A7.4 7.4 0 1 0 22.83 12.14" fill="none" stroke="#eef3ef" stroke-width="2.3" stroke-linecap="round"/><line x1="18.8" y1="7.55" x2="18.8" y2="19.65" stroke="#eef3ef" stroke-width="2.5" stroke-linecap="butt"/></svg>
<div class="t m" style="left:3288px;top:266.04px;font-size:17.6px;line-height:17.6px;color:#eef3ef;transform:scaleX(1.1107);transform-origin:0 0;">Transient</div>
<div class="a" style="left:3238.5px;top:292.9px;width:180.5px;height:36.1px;background:#3b3e3c;border-radius:6px;"></div>
<div class="a" style="left:3275.1px;top:292.9px;width:1.3px;height:36.1px;background:#171918;"></div>
<svg class="a" style="left:3238.5px;top:292.9px;" width="36" height="36" viewBox="0 0 36 36"><path d="M14.77 12.14 A7.4 7.4 0 1 0 22.83 12.14" fill="none" stroke="#eef3ef" stroke-width="2.3" stroke-linecap="round"/><line x1="18.8" y1="7.55" x2="18.8" y2="19.65" stroke="#eef3ef" stroke-width="2.5" stroke-linecap="butt"/></svg>
<div class="t m" style="left:3288px;top:303.54px;font-size:17.6px;line-height:17.6px;color:#eef3ef;transform:scaleX(0.9157);transform-origin:0 0;">EQ</div>
<div class="a" style="left:3238.5px;top:330.4px;width:180.5px;height:36.1px;background:#3b3e3c;border-radius:6px;"></div>
<div class="a" style="left:3275.1px;top:330.4px;width:1.3px;height:36.1px;background:#171918;"></div>
<svg class="a" style="left:3238.5px;top:330.4px;" width="36" height="36" viewBox="0 0 36 36"><path d="M14.77 12.14 A7.4 7.4 0 1 0 22.83 12.14" fill="none" stroke="#eef3ef" stroke-width="2.3" stroke-linecap="round"/><line x1="18.8" y1="7.55" x2="18.8" y2="19.65" stroke="#eef3ef" stroke-width="2.5" stroke-linecap="butt"/></svg>
<div class="t m" style="left:3288px;top:341.04px;font-size:17.6px;line-height:17.6px;color:#eef3ef;transform:scaleX(1.1398);transform-origin:0 0;">Limiter</div>
<div class="a" style="left:3238.5px;top:367.9px;width:180.5px;height:36.1px;background:#3b3e3c;border-radius:6px;"></div>
<div class="a" style="left:3275.1px;top:367.9px;width:1.3px;height:36.1px;background:#171918;"></div>
<svg class="a" style="left:3238.5px;top:367.9px;" width="36" height="36" viewBox="0 0 36 36"><path d="M14.77 12.14 A7.4 7.4 0 1 0 22.83 12.14" fill="none" stroke="#eef3ef" stroke-width="2.3" stroke-linecap="round"/><line x1="18.8" y1="7.55" x2="18.8" y2="19.65" stroke="#eef3ef" stroke-width="2.5" stroke-linecap="butt"/></svg>
<div class="t m" style="left:3288px;top:378.54px;font-size:17.6px;line-height:17.6px;color:#eef3ef;transform:scaleX(1.1107);transform-origin:0 0;">Transient</div>
<div class="a" style="left:3238.5px;top:405px;width:180.5px;height:2.1px;background:#737a75;"></div>
<div class="a" style="left:3238.5px;top:408.75px;width:128.8px;height:35.75px;background:#3b3e3c;border-radius:6px;overflow:hidden;">
<div class="a" style="left:36.6px;top:0;width:1.3px;height:36px;background:#171918"></div>
<svg class="a" style="left:0;top:0" width="36" height="36"><path d="M14.77 11.89 A7.4 7.4 0 1 0 22.83 11.89" fill="none" stroke="#eef3ef" stroke-width="2.3" stroke-linecap="round"/><line x1="18.8" y1="7.3" x2="18.8" y2="19.4" stroke="#eef3ef" stroke-width="2.5" stroke-linecap="butt"/></svg>
<div class="t m" style="left:49.5px;top:10.29px;font-size:17.6px;line-height:17.6px;color:#eef3ef;transform:scaleX(1.0705);transform-origin:0 0;">Reverb</div>
</div>
<svg class="a" style="left:3369.5px;top:408.75px;" width="50" height="36" viewBox="0 0 50 36"><circle cx="15.7" cy="17.6" r="10.6" fill="none" stroke="#eef3ef" stroke-width="2.9"/><line x1="15.7" y1="15.8" x2="15.7" y2="7.4" stroke="#eef3ef" stroke-width="2.9"/><path d="M32.4 17.6 H43.6 M38.3 12.4 L43.6 17.6 L38.3 22.8" fill="none" stroke="#7d837f" stroke-width="2.1" stroke-linecap="round" stroke-linejoin="round"/></svg>
<div class="a" style="left:3238.5px;top:446.25px;width:128.8px;height:35.75px;background:#3b3e3c;border-radius:6px;overflow:hidden;">
<div class="a" style="left:36.6px;top:0;width:1.3px;height:36px;background:#171918"></div>
<svg class="a" style="left:0;top:0" width="36" height="36"><path d="M14.77 11.89 A7.4 7.4 0 1 0 22.83 11.89" fill="none" stroke="#eef3ef" stroke-width="2.3" stroke-linecap="round"/><line x1="18.8" y1="7.3" x2="18.8" y2="19.4" stroke="#eef3ef" stroke-width="2.5" stroke-linecap="butt"/></svg>
<div class="t m" style="left:49.5px;top:10.29px;font-size:17.6px;line-height:17.6px;color:#eef3ef;transform:scaleX(0.9715);transform-origin:0 0;">PRL Comp</div>
</div>
<svg class="a" style="left:3369.5px;top:446.25px;" width="50" height="36" viewBox="0 0 50 36"><circle cx="15.7" cy="17.6" r="10.6" fill="none" stroke="#eef3ef" stroke-width="2.9"/><line x1="16.46" y1="15.97" x2="20.01" y2="8.36" stroke="#eef3ef" stroke-width="2.9"/><path d="M32.4 17.6 H43.6 M38.3 12.4 L43.6 17.6 L38.3 22.8" fill="none" stroke="#7d837f" stroke-width="2.1" stroke-linecap="round" stroke-linejoin="round"/></svg>
<div class="a" style="left:3243.2px;top:486.35px;width:170.2px;height:30px;background:#0e100f;border-radius:6px;box-sizing:border-box;border:1.8px solid #404543;"></div>
<svg class="a" style="left:3318.5px;top:491.75px;" width="20" height="20" viewBox="0 0 20 20"><path d="M10 3.7 V16.3 M3.7 10 H16.3" stroke="#a7aca8" stroke-width="1.5"/></svg>
<div class="a" style="left:3243.2px;top:523.85px;width:170.2px;height:30px;background:#0e100f;border-radius:6px;box-sizing:border-box;border:1.8px solid #404543;"></div>
<svg class="a" style="left:3318.5px;top:529.25px;" width="20" height="20" viewBox="0 0 20 20"><path d="M10 3.7 V16.3 M3.7 10 H16.3" stroke="#a7aca8" stroke-width="1.5"/></svg>
<div class="a" style="left:3238.5px;top:558px;width:180.5px;height:2.1px;background:#737a75;"></div>
<div class="a" style="left:3268.5px;top:566px;width:35.5px;height:35.5px;background:#262827;border-radius:5px;"></div>
<div class="a" style="left:3310.5px;top:566px;width:35.5px;height:35.5px;background:#262827;border-radius:5px;"></div>
<div class="a" style="left:3352.7px;top:566px;width:35.5px;height:35.5px;background:#262827;border-radius:5px;"></div>
<div class="t" style="left:3278.96px;top:574.57px;font-size:17.5px;line-height:17.5px;color:#dde3de;">M</div>
<div class="t" style="left:3322.51px;top:574.57px;font-size:17.5px;line-height:17.5px;color:#dde3de;">S</div>
<svg class="a" style="left:3352.7px;top:566px;" width="35.5" height="35.5" viewBox="0 0 35.5 35.5"><circle cx="17.9" cy="18" r="6.9" fill="none" stroke="#dde3de" stroke-width="1.7"/><line x1="10.4" y1="25.6" x2="25.7" y2="10.3" stroke="#dde3de" stroke-width="1.7"/></svg>
<svg class="a" style="left:3271px;top:605.9px;" width="34" height="34" viewBox="0 0 34 34"><circle cx="17" cy="17" r="13.5" fill="none" stroke="#eef3ef" stroke-width="3"/><line x1="14.88" y1="19.12" x2="8.37" y2="25.63" stroke="#eef3ef" stroke-width="2.8"/></svg>
<div class="t m" style="left:3266.31px;top:644.53px;font-size:16.6px;line-height:16.6px;color:#eef3ef;transform:scaleX(1.0438);transform-origin:21.69px 0;">Pan L</div>
<svg class="a" style="left:3353.2px;top:605.9px;" width="34" height="34" viewBox="0 0 34 34"><circle cx="17" cy="17" r="13.5" fill="none" stroke="#eef3ef" stroke-width="3"/><line x1="19.12" y1="19.12" x2="25.63" y2="25.63" stroke="#eef3ef" stroke-width="2.8"/></svg>
<div class="t m" style="left:3347.13px;top:644.53px;font-size:16.6px;line-height:16.6px;color:#eef3ef;transform:scaleX(1.0195);transform-origin:23.07px 0;">Pan R</div>
<div class="a" style="left:3253.5px;top:677px;width:59.8px;height:23.8px;background:#010202;border-radius:5px;"></div>
<div class="a" style="left:3343.5px;top:677px;width:59.8px;height:23.8px;background:#010202;border-radius:5px;"></div>
<div class="t m" style="left:3262.3px;top:681.82px;font-size:17.2px;line-height:17.2px;color:#64ec9a;letter-spacing:0.75px;transform:scaleX(1.0800);transform-origin:21.1px 0;">-21.0</div>
<div class="t m" style="left:3360.33px;top:681.82px;font-size:17.2px;line-height:17.2px;color:#64ec9a;letter-spacing:0.75px;transform:scaleX(1.0500);transform-origin:13.07px 0;">-inf</div>
<div class="t m" style="left:3245.44px;top:717.16px;font-size:14.8px;line-height:14.8px;color:#8b918d;transform:scaleX(0.8687);transform-origin:16.46px 0;">12</div>
<div class="t m" style="left:3253.67px;top:760.86px;font-size:14.8px;line-height:14.8px;color:#8b918d;">0</div>
<div class="t" style="left:3249.47px;top:892.35px;font-size:18px;line-height:18px;color:#8b918d;transform:scaleX(1.1923);transform-origin:12.83px 0;">∞</div>
<div class="a" style="left:3265.5px;top:723.85px;width:6px;height:1.5px;background:#8b918d;"></div>
<div class="a" style="left:3265.5px;top:767.55px;width:6px;height:1.5px;background:#8b918d;"></div>
<div class="a" style="left:3265.5px;top:900.85px;width:6px;height:1.5px;background:#8b918d;"></div>
<div class="a" style="left:3281.8px;top:726px;width:3px;height:178.5px;background:#050505;"></div>
<div class="a" style="left:3363.2px;top:713px;width:20.9px;height:191.5px;background:#030303;"></div>
<div class="a" style="left:3273.1px;top:824px;width:20.7px;height:36.8px;background:#f2fbf4;border-radius:4px;"></div>
<div class="a" style="left:3273.1px;top:841.3px;width:20.7px;height:2.6px;background:#0c0d0c;"></div>
<div class="a" style="left:3238.5px;top:924.3px;width:180.5px;height:2.1px;background:#737a75;"></div>
<div class="a" style="left:3238.5px;top:928.8px;width:180.5px;height:36px;background:#252726;border-radius:0 0 6px 6px;"></div>
<div class="t m" style="left:3250.8px;top:936.64px;font-size:18.6px;line-height:18.6px;color:#eef3ef;transform:scaleX(1.0254);transform-origin:0 0;">Stereo 25/26</div>
<svg class="a" style="left:3392.5px;top:939px;" width="16" height="14" viewBox="0 0 16 14"><path d="M3.4 5 L8 9.6 L12.6 5" fill="none" stroke="#9ba19d" stroke-width="1.6"/></svg>
<div class="a" style="left:3421.5px;top:138.75px;width:180.5px;height:826px;background:#111312;"></div>
<div class="a" style="left:3421.5px;top:102.2px;width:180.5px;height:36.3px;background:#a1d0df;border-radius:5.5px 5.5px 0 0;"></div>
<svg class="a" style="left:3421.5px;top:102.2px;" width="180.5" height="36.3" viewBox="0 0 180.5 36.3"><circle cx="12.4" cy="14" r="1.6" fill="#111"/><circle cx="16.8" cy="14" r="1.6" fill="#111"/><circle cx="21.2" cy="14" r="1.6" fill="#111"/><circle cx="12.4" cy="18.4" r="1.6" fill="#111"/><circle cx="16.8" cy="18.4" r="1.6" fill="#111"/><circle cx="21.2" cy="18.4" r="1.6" fill="#111"/><circle cx="12.4" cy="22.8" r="1.6" fill="#111"/><circle cx="16.8" cy="22.8" r="1.6" fill="#111"/><circle cx="21.2" cy="22.8" r="1.6" fill="#111"/><circle cx="157.4" cy="14" r="1.6" fill="#111"/><circle cx="161.8" cy="14" r="1.6" fill="#111"/><circle cx="166.2" cy="14" r="1.6" fill="#111"/><circle cx="157.4" cy="18.4" r="1.6" fill="#111"/><circle cx="161.8" cy="18.4" r="1.6" fill="#111"/><circle cx="166.2" cy="18.4" r="1.6" fill="#111"/><circle cx="157.4" cy="22.8" r="1.6" fill="#111"/><circle cx="161.8" cy="22.8" r="1.6" fill="#111"/><circle cx="166.2" cy="22.8" r="1.6" fill="#111"/></svg>
<div class="t m" style="left:3481.84px;top:110.51px;font-size:18.4px;line-height:18.4px;color:#0d0f0e;transform:scaleX(1.0211);transform-origin:29.66px 0;">Reverb</div>
<div class="t m" style="left:3434px;top:151.7px;font-size:17.7px;line-height:17.7px;color:#959b97;transform:scaleX(1.0972);transform-origin:0 0;">Reverb</div>
<div class="a" style="left:3421.5px;top:177px;width:180.5px;height:2.25px;background:#737a75;"></div>
<div class="a" style="left:3421.5px;top:180.4px;width:180.5px;height:36.1px;background:#3b3e3c;border-radius:6px;"></div>
<div class="a" style="left:3458.1px;top:180.4px;width:1.3px;height:36.1px;background:#171918;"></div>
<svg class="a" style="left:3421.5px;top:180.4px;" width="36" height="36" viewBox="0 0 36 36"><path d="M14.77 12.14 A7.4 7.4 0 1 0 22.83 12.14" fill="none" stroke="#eef3ef" stroke-width="2.3" stroke-linecap="round"/><line x1="18.8" y1="7.55" x2="18.8" y2="19.65" stroke="#eef3ef" stroke-width="2.5" stroke-linecap="butt"/></svg>
<div class="t m" style="left:3471px;top:191.04px;font-size:17.6px;line-height:17.6px;color:#eef3ef;transform:scaleX(1.0705);transform-origin:0 0;">Reverb</div>
<div class="a" style="left:3421.5px;top:217.9px;width:180.5px;height:36.1px;background:#3b3e3c;border-radius:6px;"></div>
<div class="a" style="left:3458.1px;top:217.9px;width:1.3px;height:36.1px;background:#171918;"></div>
<svg class="a" style="left:3421.5px;top:217.9px;" width="36" height="36" viewBox="0 0 36 36"><path d="M14.77 12.14 A7.4 7.4 0 1 0 22.83 12.14" fill="none" stroke="#eef3ef" stroke-width="2.3" stroke-linecap="round"/><line x1="18.8" y1="7.55" x2="18.8" y2="19.65" stroke="#eef3ef" stroke-width="2.5" stroke-linecap="butt"/></svg>
<div class="t m" style="left:3471px;top:228.54px;font-size:17.6px;line-height:17.6px;color:#eef3ef;transform:scaleX(1.0918);transform-origin:0 0;">Vint. Comp</div>
<div class="a" style="left:3421.5px;top:255.4px;width:180.5px;height:36.1px;background:#3b3e3c;border-radius:6px;"></div>
<div class="a" style="left:3458.1px;top:255.4px;width:1.3px;height:36.1px;background:#171918;"></div>
<svg class="a" style="left:3421.5px;top:255.4px;" width="36" height="36" viewBox="0 0 36 36"><path d="M14.77 12.14 A7.4 7.4 0 1 0 22.83 12.14" fill="none" stroke="#eef3ef" stroke-width="2.3" stroke-linecap="round"/><line x1="18.8" y1="7.55" x2="18.8" y2="19.65" stroke="#eef3ef" stroke-width="2.5" stroke-linecap="butt"/></svg>
<div class="t m" style="left:3471px;top:266.04px;font-size:17.6px;line-height:17.6px;color:#eef3ef;transform:scaleX(1.1107);transform-origin:0 0;">Transient</div>
<div class="a" style="left:3426.2px;top:295.85px;width:170.2px;height:30px;background:#0e100f;border-radius:6px;box-sizing:border-box;border:1.8px solid #404543;"></div>
<svg class="a" style="left:3501.5px;top:301.25px;" width="20" height="20" viewBox="0 0 20 20"><path d="M10 3.7 V16.3 M3.7 10 H16.3" stroke="#a7aca8" stroke-width="1.5"/></svg>
<div class="a" style="left:3426.2px;top:333.35px;width:170.2px;height:30px;background:#0e100f;border-radius:6px;box-sizing:border-box;border:1.8px solid #404543;"></div>
<svg class="a" style="left:3501.5px;top:338.75px;" width="20" height="20" viewBox="0 0 20 20"><path d="M10 3.7 V16.3 M3.7 10 H16.3" stroke="#a7aca8" stroke-width="1.5"/></svg>
<div class="a" style="left:3426.2px;top:370.85px;width:170.2px;height:30px;background:#0e100f;border-radius:6px;box-sizing:border-box;border:1.8px solid #404543;"></div>
<svg class="a" style="left:3501.5px;top:376.25px;" width="20" height="20" viewBox="0 0 20 20"><path d="M10 3.7 V16.3 M3.7 10 H16.3" stroke="#a7aca8" stroke-width="1.5"/></svg>
<div class="a" style="left:3421.5px;top:405px;width:180.5px;height:2.1px;background:#737a75;"></div>
<div class="a" style="left:3426.2px;top:411.35px;width:170.2px;height:30px;background:#0e100f;border-radius:6px;box-sizing:border-box;border:1.8px solid #404543;"></div>
<svg class="a" style="left:3501.5px;top:416.75px;" width="20" height="20" viewBox="0 0 20 20"><path d="M10 3.7 V16.3 M3.7 10 H16.3" stroke="#a7aca8" stroke-width="1.5"/></svg>
<div class="a" style="left:3426.2px;top:448.85px;width:170.2px;height:30px;background:#0e100f;border-radius:6px;box-sizing:border-box;border:1.8px solid #404543;"></div>
<svg class="a" style="left:3501.5px;top:454.25px;" width="20" height="20" viewBox="0 0 20 20"><path d="M10 3.7 V16.3 M3.7 10 H16.3" stroke="#a7aca8" stroke-width="1.5"/></svg>
<div class="a" style="left:3426.2px;top:486.35px;width:170.2px;height:30px;background:#0e100f;border-radius:6px;box-sizing:border-box;border:1.8px solid #404543;"></div>
<svg class="a" style="left:3501.5px;top:491.75px;" width="20" height="20" viewBox="0 0 20 20"><path d="M10 3.7 V16.3 M3.7 10 H16.3" stroke="#a7aca8" stroke-width="1.5"/></svg>
<div class="a" style="left:3426.2px;top:523.85px;width:170.2px;height:30px;background:#0e100f;border-radius:6px;box-sizing:border-box;border:1.8px solid #404543;"></div>
<svg class="a" style="left:3501.5px;top:529.25px;" width="20" height="20" viewBox="0 0 20 20"><path d="M10 3.7 V16.3 M3.7 10 H16.3" stroke="#a7aca8" stroke-width="1.5"/></svg>
<div class="a" style="left:3421.5px;top:558px;width:180.5px;height:2.1px;background:#737a75;"></div>
<div class="a" style="left:3451.5px;top:566px;width:35.5px;height:35.5px;background:#262827;border-radius:5px;"></div>
<div class="a" style="left:3493.5px;top:566px;width:35.5px;height:35.5px;background:#262827;border-radius:5px;"></div>
<div class="a" style="left:3535.7px;top:566px;width:35.5px;height:35.5px;background:#262827;border-radius:5px;"></div>
<div class="t" style="left:3461.96px;top:574.57px;font-size:17.5px;line-height:17.5px;color:#dde3de;">M</div>
<div class="t" style="left:3505.51px;top:574.57px;font-size:17.5px;line-height:17.5px;color:#dde3de;">S</div>
<svg class="a" style="left:3535.7px;top:566px;" width="35.5" height="35.5" viewBox="0 0 35.5 35.5"><circle cx="17.9" cy="18" r="6.9" fill="none" stroke="#dde3de" stroke-width="1.7"/><line x1="10.4" y1="25.6" x2="25.7" y2="10.3" stroke="#dde3de" stroke-width="1.7"/></svg>
<svg class="a" style="left:3454px;top:605.9px;" width="34" height="34" viewBox="0 0 34 34"><circle cx="17" cy="17" r="13.5" fill="none" stroke="#eef3ef" stroke-width="3"/><line x1="14.88" y1="19.12" x2="8.37" y2="25.63" stroke="#eef3ef" stroke-width="2.8"/></svg>
<div class="t m" style="left:3449.31px;top:644.53px;font-size:16.6px;line-height:16.6px;color:#eef3ef;transform:scaleX(1.0438);transform-origin:21.69px 0;">Pan L</div>
<svg class="a" style="left:3536.2px;top:605.9px;" width="34" height="34" viewBox="0 0 34 34"><circle cx="17" cy="17" r="13.5" fill="none" stroke="#eef3ef" stroke-width="3"/><line x1="19.12" y1="19.12" x2="25.63" y2="25.63" stroke="#eef3ef" stroke-width="2.8"/></svg>
<div class="t m" style="left:3530.13px;top:644.53px;font-size:16.6px;line-height:16.6px;color:#eef3ef;transform:scaleX(1.0195);transform-origin:23.07px 0;">Pan R</div>
<div class="a" style="left:3436.5px;top:677px;width:59.8px;height:23.8px;background:#010202;border-radius:5px;"></div>
<div class="a" style="left:3526.5px;top:677px;width:59.8px;height:23.8px;background:#010202;border-radius:5px;"></div>
<div class="t m" style="left:3450.46px;top:681.82px;font-size:17.2px;line-height:17.2px;color:#64ec9a;letter-spacing:0.75px;transform:scaleX(1.0800);transform-origin:15.94px 0;">-4.5</div>
<div class="t m" style="left:3543.33px;top:681.82px;font-size:17.2px;line-height:17.2px;color:#64ec9a;letter-spacing:0.75px;transform:scaleX(1.0500);transform-origin:13.07px 0;">-inf</div>
<div class="t m" style="left:3428.44px;top:717.16px;font-size:14.8px;line-height:14.8px;color:#8b918d;transform:scaleX(0.8687);transform-origin:16.46px 0;">12</div>
<div class="t m" style="left:3436.67px;top:760.86px;font-size:14.8px;line-height:14.8px;color:#8b918d;">0</div>
<div class="t" style="left:3432.47px;top:892.35px;font-size:18px;line-height:18px;color:#8b918d;transform:scaleX(1.1923);transform-origin:12.83px 0;">∞</div>
<div class="a" style="left:3448.5px;top:723.85px;width:6px;height:1.5px;background:#8b918d;"></div>
<div class="a" style="left:3448.5px;top:767.55px;width:6px;height:1.5px;background:#8b918d;"></div>
<div class="a" style="left:3448.5px;top:900.85px;width:6px;height:1.5px;background:#8b918d;"></div>
<div class="a" style="left:3464.8px;top:726px;width:3px;height:178.5px;background:#050505;"></div>
<div class="a" style="left:3546.2px;top:713px;width:20.9px;height:191.5px;background:#030303;"></div>
<div class="a" style="left:3456.1px;top:767px;width:20.7px;height:36.8px;background:#f2fbf4;border-radius:4px;"></div>
<div class="a" style="left:3456.1px;top:784.3px;width:20.7px;height:2.6px;background:#0c0d0c;"></div>
<div class="a" style="left:3421.5px;top:924.3px;width:180.5px;height:2.1px;background:#737a75;"></div>
<div class="a" style="left:3421.5px;top:928.8px;width:180.5px;height:36px;background:#252726;border-radius:0 0 6px 6px;"></div>
<div class="t m" style="left:3433.8px;top:936.64px;font-size:18.6px;line-height:18.6px;color:#eef3ef;transform:scaleX(1.0306);transform-origin:0 0;">Master Bus</div>
<svg class="a" style="left:3575.5px;top:939px;" width="16" height="14" viewBox="0 0 16 14"><path d="M3.4 5 L8 9.6 L12.6 5" fill="none" stroke="#9ba19d" stroke-width="1.6"/></svg>
<div class="a" style="left:3604.5px;top:138.75px;width:180.5px;height:826px;background:#111312;"></div>
<div class="a" style="left:3604.5px;top:102.2px;width:180.5px;height:36.3px;background:#a1d0df;border-radius:5.5px 5.5px 0 0;"></div>
<svg class="a" style="left:3604.5px;top:102.2px;" width="180.5" height="36.3" viewBox="0 0 180.5 36.3"><circle cx="12.4" cy="14" r="1.6" fill="#111"/><circle cx="16.8" cy="14" r="1.6" fill="#111"/><circle cx="21.2" cy="14" r="1.6" fill="#111"/><circle cx="12.4" cy="18.4" r="1.6" fill="#111"/><circle cx="16.8" cy="18.4" r="1.6" fill="#111"/><circle cx="21.2" cy="18.4" r="1.6" fill="#111"/><circle cx="12.4" cy="22.8" r="1.6" fill="#111"/><circle cx="16.8" cy="22.8" r="1.6" fill="#111"/><circle cx="21.2" cy="22.8" r="1.6" fill="#111"/><circle cx="157.4" cy="14" r="1.6" fill="#111"/><circle cx="161.8" cy="14" r="1.6" fill="#111"/><circle cx="166.2" cy="14" r="1.6" fill="#111"/><circle cx="157.4" cy="18.4" r="1.6" fill="#111"/><circle cx="161.8" cy="18.4" r="1.6" fill="#111"/><circle cx="166.2" cy="18.4" r="1.6" fill="#111"/><circle cx="157.4" cy="22.8" r="1.6" fill="#111"/><circle cx="161.8" cy="22.8" r="1.6" fill="#111"/><circle cx="166.2" cy="22.8" r="1.6" fill="#111"/></svg>
<div class="t m" style="left:3649.85px;top:110.51px;font-size:18.4px;line-height:18.4px;color:#0d0f0e;transform:scaleX(0.9420);transform-origin:44.65px 0;">PRL Comp</div>
<div class="t m" style="left:3617px;top:151.7px;font-size:17.7px;line-height:17.7px;color:#959b97;transform:scaleX(0.9898);transform-origin:0 0;">PRL Comp</div>
<div class="a" style="left:3604.5px;top:177px;width:180.5px;height:2.25px;background:#737a75;"></div>
<div class="a" style="left:3604.5px;top:180.4px;width:180.5px;height:36.1px;background:#3b3e3c;border-radius:6px;"></div>
<div class="a" style="left:3641.1px;top:180.4px;width:1.3px;height:36.1px;background:#171918;"></div>
<svg class="a" style="left:3604.5px;top:180.4px;" width="36" height="36" viewBox="0 0 36 36"><path d="M14.77 12.14 A7.4 7.4 0 1 0 22.83 12.14" fill="none" stroke="#eef3ef" stroke-width="2.3" stroke-linecap="round"/><line x1="18.8" y1="7.55" x2="18.8" y2="19.65" stroke="#eef3ef" stroke-width="2.5" stroke-linecap="butt"/></svg>
<div class="t m" style="left:3654px;top:191.04px;font-size:17.6px;line-height:17.6px;color:#eef3ef;transform:scaleX(1.0918);transform-origin:0 0;">Vint. Comp</div>
<div class="a" style="left:3609.2px;top:220.85px;width:170.2px;height:30px;background:#0e100f;border-radius:6px;box-sizing:border-box;border:1.8px solid #404543;"></div>
<svg class="a" style="left:3684.5px;top:226.25px;" width="20" height="20" viewBox="0 0 20 20"><path d="M10 3.7 V16.3 M3.7 10 H16.3" stroke="#a7aca8" stroke-width="1.5"/></svg>
<div class="a" style="left:3609.2px;top:258.35px;width:170.2px;height:30px;background:#0e100f;border-radius:6px;box-sizing:border-box;border:1.8px solid #404543;"></div>
<svg class="a" style="left:3684.5px;top:263.75px;" width="20" height="20" viewBox="0 0 20 20"><path d="M10 3.7 V16.3 M3.7 10 H16.3" stroke="#a7aca8" stroke-width="1.5"/></svg>
<div class="a" style="left:3609.2px;top:295.85px;width:170.2px;height:30px;background:#0e100f;border-radius:6px;box-sizing:border-box;border:1.8px solid #404543;"></div>
<svg class="a" style="left:3684.5px;top:301.25px;" width="20" height="20" viewBox="0 0 20 20"><path d="M10 3.7 V16.3 M3.7 10 H16.3" stroke="#a7aca8" stroke-width="1.5"/></svg>
<div class="a" style="left:3609.2px;top:333.35px;width:170.2px;height:30px;background:#0e100f;border-radius:6px;box-sizing:border-box;border:1.8px solid #404543;"></div>
<svg class="a" style="left:3684.5px;top:338.75px;" width="20" height="20" viewBox="0 0 20 20"><path d="M10 3.7 V16.3 M3.7 10 H16.3" stroke="#a7aca8" stroke-width="1.5"/></svg>
<div class="a" style="left:3609.2px;top:370.85px;width:170.2px;height:30px;background:#0e100f;border-radius:6px;box-sizing:border-box;border:1.8px solid #404543;"></div>
<svg class="a" style="left:3684.5px;top:376.25px;" width="20" height="20" viewBox="0 0 20 20"><path d="M10 3.7 V16.3 M3.7 10 H16.3" stroke="#a7aca8" stroke-width="1.5"/></svg>
<div class="a" style="left:3604.5px;top:405px;width:180.5px;height:2.1px;background:#737a75;"></div>
<div class="a" style="left:3609.2px;top:411.35px;width:170.2px;height:30px;background:#0e100f;border-radius:6px;box-sizing:border-box;border:1.8px solid #404543;"></div>
<svg class="a" style="left:3684.5px;top:416.75px;" width="20" height="20" viewBox="0 0 20 20"><path d="M10 3.7 V16.3 M3.7 10 H16.3" stroke="#a7aca8" stroke-width="1.5"/></svg>
<div class="a" style="left:3609.2px;top:448.85px;width:170.2px;height:30px;background:#0e100f;border-radius:6px;box-sizing:border-box;border:1.8px solid #404543;"></div>
<svg class="a" style="left:3684.5px;top:454.25px;" width="20" height="20" viewBox="0 0 20 20"><path d="M10 3.7 V16.3 M3.7 10 H16.3" stroke="#a7aca8" stroke-width="1.5"/></svg>
<div class="a" style="left:3609.2px;top:486.35px;width:170.2px;height:30px;background:#0e100f;border-radius:6px;box-sizing:border-box;border:1.8px solid #404543;"></div>
<svg class="a" style="left:3684.5px;top:491.75px;" width="20" height="20" viewBox="0 0 20 20"><path d="M10 3.7 V16.3 M3.7 10 H16.3" stroke="#a7aca8" stroke-width="1.5"/></svg>
<div class="a" style="left:3609.2px;top:523.85px;width:170.2px;height:30px;background:#0e100f;border-radius:6px;box-sizing:border-box;border:1.8px solid #404543;"></div>
<svg class="a" style="left:3684.5px;top:529.25px;" width="20" height="20" viewBox="0 0 20 20"><path d="M10 3.7 V16.3 M3.7 10 H16.3" stroke="#a7aca8" stroke-width="1.5"/></svg>
<div class="a" style="left:3604.5px;top:558px;width:180.5px;height:2.1px;background:#737a75;"></div>
<div class="a" style="left:3634.5px;top:566px;width:35.5px;height:35.5px;background:#262827;border-radius:5px;"></div>
<div class="a" style="left:3676.5px;top:566px;width:35.5px;height:35.5px;background:#262827;border-radius:5px;"></div>
<div class="a" style="left:3718.7px;top:566px;width:35.5px;height:35.5px;background:#262827;border-radius:5px;"></div>
<div class="t" style="left:3644.96px;top:574.57px;font-size:17.5px;line-height:17.5px;color:#dde3de;">M</div>
<div class="t" style="left:3688.51px;top:574.57px;font-size:17.5px;line-height:17.5px;color:#dde3de;">S</div>
<svg class="a" style="left:3718.7px;top:566px;" width="35.5" height="35.5" viewBox="0 0 35.5 35.5"><circle cx="17.9" cy="18" r="6.9" fill="none" stroke="#dde3de" stroke-width="1.7"/><line x1="10.4" y1="25.6" x2="25.7" y2="10.3" stroke="#dde3de" stroke-width="1.7"/></svg>
<svg class="a" style="left:3637px;top:605.9px;" width="34" height="34" viewBox="0 0 34 34"><circle cx="17" cy="17" r="13.5" fill="none" stroke="#eef3ef" stroke-width="3"/><line x1="14.88" y1="19.12" x2="8.37" y2="25.63" stroke="#eef3ef" stroke-width="2.8"/></svg>
<div class="t m" style="left:3632.31px;top:644.53px;font-size:16.6px;line-height:16.6px;color:#eef3ef;transform:scaleX(1.0438);transform-origin:21.69px 0;">Pan L</div>
<svg class="a" style="left:3719.2px;top:605.9px;" width="34" height="34" viewBox="0 0 34 34"><circle cx="17" cy="17" r="13.5" fill="none" stroke="#eef3ef" stroke-width="3"/><line x1="19.12" y1="19.12" x2="25.63" y2="25.63" stroke="#eef3ef" stroke-width="2.8"/></svg>
<div class="t m" style="left:3713.13px;top:644.53px;font-size:16.6px;line-height:16.6px;color:#eef3ef;transform:scaleX(1.0195);transform-origin:23.07px 0;">Pan R</div>
<div class="a" style="left:3619.5px;top:677px;width:59.8px;height:23.8px;background:#010202;border-radius:5px;"></div>
<div class="a" style="left:3709.5px;top:677px;width:59.8px;height:23.8px;background:#010202;border-radius:5px;"></div>
<div class="t m" style="left:3628.3px;top:681.82px;font-size:17.2px;line-height:17.2px;color:#64ec9a;letter-spacing:0.75px;transform:scaleX(1.0800);transform-origin:21.1px 0;">-24.2</div>
<div class="t m" style="left:3726.33px;top:681.82px;font-size:17.2px;line-height:17.2px;color:#64ec9a;letter-spacing:0.75px;transform:scaleX(1.0500);transform-origin:13.07px 0;">-inf</div>
<div class="t m" style="left:3611.44px;top:717.16px;font-size:14.8px;line-height:14.8px;color:#8b918d;transform:scaleX(0.8687);transform-origin:16.46px 0;">12</div>
<div class="t m" style="left:3619.67px;top:760.86px;font-size:14.8px;line-height:14.8px;color:#8b918d;">0</div>
<div class="t" style="left:3615.47px;top:892.35px;font-size:18px;line-height:18px;color:#8b918d;transform:scaleX(1.1923);transform-origin:12.83px 0;">∞</div>
<div class="a" style="left:3631.5px;top:723.85px;width:6px;height:1.5px;background:#8b918d;"></div>
<div class="a" style="left:3631.5px;top:767.55px;width:6px;height:1.5px;background:#8b918d;"></div>
<div class="a" style="left:3631.5px;top:900.85px;width:6px;height:1.5px;background:#8b918d;"></div>
<div class="a" style="left:3647.8px;top:726px;width:3px;height:178.5px;background:#050505;"></div>
<div class="a" style="left:3729.2px;top:713px;width:20.9px;height:191.5px;background:#030303;"></div>
<div class="a" style="left:3639.1px;top:834.1px;width:20.7px;height:36.8px;background:#f2fbf4;border-radius:4px;"></div>
<div class="a" style="left:3639.1px;top:851.4px;width:20.7px;height:2.6px;background:#0c0d0c;"></div>
<div class="a" style="left:3604.5px;top:924.3px;width:180.5px;height:2.1px;background:#737a75;"></div>
<div class="a" style="left:3604.5px;top:928.8px;width:180.5px;height:36px;background:#252726;border-radius:0 0 6px 6px;"></div>
<div class="t m" style="left:3616.8px;top:936.64px;font-size:18.6px;line-height:18.6px;color:#eef3ef;transform:scaleX(1.0254);transform-origin:0 0;">Stereo 27/28</div>
<svg class="a" style="left:3758.5px;top:939px;" width="16" height="14" viewBox="0 0 16 14"><path d="M3.4 5 L8 9.6 L12.6 5" fill="none" stroke="#9ba19d" stroke-width="1.6"/></svg>
</div>
<div class="a" style="left:0px;top:99.5px;width:76px;height:866px;background:#1b1d1c;border-radius:0 5px 0 0;"></div>
<div class="a" style="left:0px;top:138.2px;width:76px;height:2px;background:#424744;"></div>
<div class="a" style="left:0px;top:177.9px;width:76px;height:2px;background:#424744;"></div>
<div class="a" style="left:0px;top:405.2px;width:76px;height:2px;background:#424744;"></div>
<div class="a" style="left:0px;top:558px;width:76px;height:2px;background:#424744;"></div>
<div class="a" style="left:0px;top:924.3px;width:76px;height:2px;background:#424744;"></div>
<div class="t m" style="left:9.4px;top:152.03px;font-size:15.3px;line-height:15.3px;color:#959b97;transform:scaleX(1.1138);transform-origin:0 0;">Input</div>
<div class="t m" style="left:9.4px;top:191.23px;font-size:15.3px;line-height:15.3px;color:#959b97;transform:scaleX(1.1185);transform-origin:0 0;">Effects</div>
<div class="t m" style="left:9.4px;top:419.43px;font-size:15.3px;line-height:15.3px;color:#959b97;transform:scaleX(1.0327);transform-origin:0 0;">Sends</div>
<div class="a" style="left:3.2px;top:565.2px;width:66.4px;height:96px;border-radius:5px;box-sizing:border-box;border:1.5px solid #3f4340;"></div>
<div class="a" style="left:3.2px;top:624.6px;width:66.4px;height:1.5px;background:#3f4340;"></div>
<div class="t m" style="left:15.98px;top:579.79px;font-size:15px;line-height:15px;color:#959b97;transform:scaleX(1.0956);transform-origin:20.42px 0;">Mutes</div>
<div class="t m" style="left:32.23px;top:597.29px;font-size:15px;line-height:15px;color:#959b97;">0</div>
<div class="t m" style="left:18.48px;top:637.09px;font-size:15px;line-height:15px;color:#959b97;transform:scaleX(1.0698);transform-origin:17.92px 0;">Clear</div>
<div class="a" style="left:3.2px;top:668.4px;width:66.4px;height:96px;border-radius:5px;box-sizing:border-box;border:1.5px solid #3f4340;"></div>
<div class="a" style="left:3.2px;top:727.8px;width:66.4px;height:1.5px;background:#3f4340;"></div>
<div class="t m" style="left:17.64px;top:682.99px;font-size:15px;line-height:15px;color:#959b97;transform:scaleX(1.0720);transform-origin:18.76px 0;">Solos</div>
<div class="t m" style="left:32.23px;top:700.49px;font-size:15px;line-height:15px;color:#959b97;">0</div>
<div class="t m" style="left:18.48px;top:740.29px;font-size:15px;line-height:15px;color:#959b97;transform:scaleX(1.0698);transform-origin:17.92px 0;">Clear</div>
<div class="t m" style="left:9.3px;top:938.03px;font-size:15.3px;line-height:15.3px;color:#959b97;transform:scaleX(1.1322);transform-origin:0 0;">Output</div>
<div class="a" style="left:2.9px;top:9.7px;width:74.7px;height:26.4px;background:#3d4044;border-radius:3.5px;box-sizing:border-box;border:1px solid #55595d;"></div>
<div class="a" style="left:3.4px;top:10.2px;width:37px;height:25.4px;background:#e8e8e8;border-radius:3px 0 0 3px;"></div>
<svg class="a" style="left:3px;top:9px;" width="75" height="28" viewBox="0 0 75 28"><circle cx="19.35" cy="13.75" r="7.55" fill="#111"/><rect x="17.9" y="5" width="3.16" height="9" fill="#e8e8e8"/><rect x="47.8" y="4.75" width="18.5" height="3.15" fill="#eee"/><rect x="52.55" y="10.7" width="8.95" height="9.2" rx="2.2" fill="none" stroke="#eee" stroke-width="3.2"/></svg>
<div class="a" style="left:84.2px;top:9.7px;width:74.5px;height:26.4px;background:#3d4044;border-radius:3.5px;box-sizing:border-box;border:1px solid #55595d;"></div>
<div class="a" style="left:120px;top:9.9px;width:1px;height:26px;background:#55595d;"></div>
<div class="t" style="left:95.07px;top:12.9px;font-size:20.3px;line-height:20.3px;color:#eee;font-weight:bold;transform:scaleX(0.9140);transform-origin:7.33px 0;-webkit-text-stroke:0.4px #eee;">R</div>
<div class="t" style="left:130.42px;top:12px;font-size:20.3px;line-height:20.3px;color:#eee;font-weight:bold;transform:scaleX(1.0021);transform-origin:9.58px 0;-webkit-text-stroke:0.4px #eee;">W</div>
<div class="a" style="left:165px;top:9.7px;width:74.7px;height:26.4px;background:#3d4044;border-radius:3.5px;box-sizing:border-box;border:1px solid #55595d;"></div>
<div class="a" style="left:201px;top:9.9px;width:1px;height:26px;background:#55595d;"></div>
<svg class="a" style="left:165px;top:9px;" width="75" height="28" viewBox="0 0 75 28"><circle cx="19.9" cy="14" r="10.2" fill="#eee"/><text x="19.9" y="19.8" text-anchor="middle" font-family="Liberation Sans" font-weight="bold" font-size="19" fill="#3d4044">a</text><path d="M50.5 14 L57 8 V11.3 H63 V16.7 H57 V20 Z" fill="#eee"/></svg>
<svg class="a" style="left:246px;top:14.3px;" width="18" height="18" viewBox="0 0 18 18"><defs><radialGradient id="sph" cx="40%" cy="35%" r="65%"><stop offset="0" stop-color="#6d8fb8"/><stop offset="0.6" stop-color="#2f4a6e"/><stop offset="1" stop-color="#111a26"/></radialGradient></defs><circle cx="9.1" cy="9.2" r="6.6" fill="url(#sph)"/></svg>
<div class="a" style="left:273.3px;top:9.6px;width:147px;height:26.3px;background:#202020;border-radius:3px;box-sizing:border-box;border:1.5px solid #77797b;"></div>
<div class="a" style="left:417.6px;top:9.6px;width:57.1px;height:26.3px;background:#3d4044;box-sizing:border-box;border:1px solid #55595d;"></div>
<div class="a" style="left:474.7px;top:9.6px;width:27px;height:26.3px;background:#191a1e;box-sizing:border-box;border:1px solid #55595d;"></div>
<svg class="a" style="left:417px;top:9px;" width="90" height="28" viewBox="0 0 90 28"><path d="M8.2 17 L26.4 17 L17.3 8.2 Z" fill="#eee"/><rect x="13" y="18.8" width="8" height="3" fill="#eee"/><rect x="39.5" y="9.2" width="8" height="3" fill="#eee"/><path d="M35.5 14 L53 14 L44.3 22.8 Z" fill="#eee"/><path d="M68.3 10.7 L77.5 10.7 L72.9 18.8 Z" fill="#eee"/></svg>
<div class="a" style="left:3559.9px;top:9.9px;width:36.8px;height:26.3px;background:#3d4044;border-radius:4px;box-sizing:border-box;border:1px solid #55595d;"></div>
<svg class="a" style="left:3559px;top:9px;" width="40" height="28" viewBox="0 0 40 28"><rect x="8" y="6" width="24" height="16.8" rx="3" fill="#eee"/><circle cx="23.6" cy="14.6" r="4.5" fill="none" stroke="#3d4044" stroke-width="2.2"/><rect x="11" y="10" width="4" height="2" rx="0.8" fill="#3d4044"/></svg>
<div class="a" style="left:3603px;top:9.9px;width:37.2px;height:26.3px;background:#1a1b1e;border-radius:4px;box-sizing:border-box;border:1px solid #55595d;"></div>
<svg class="a" style="left:3603px;top:9px;" width="38" height="28" viewBox="0 0 38 28"><path d="M20 11 L29 11 L24.5 19 Z" fill="#eee"/></svg>
<div class="a" style="left:3652.7px;top:9.9px;width:91px;height:26.3px;background:#3d4044;border-radius:4px;box-sizing:border-box;border:1px solid #55595d;"></div>
<div class="a" style="left:3716.5px;top:10.9px;width:26.2px;height:24.3px;background:#1b1a1e;border-radius:0 3px 3px 0;"></div>
<div class="a" style="left:3689.4px;top:10.9px;width:1px;height:24.3px;background:#55595d;"></div>
<div class="a" style="left:3716px;top:10.9px;width:1px;height:24.3px;background:#55595d;"></div>
<div class="t" style="left:3657.03px;top:13.32px;font-size:18.5px;line-height:18.5px;color:#eee;font-weight:bold;transform:scaleX(1.0018);transform-origin:13.88px 0;-webkit-text-stroke:0.6px #eee;">QC</div>
<svg class="a" style="left:3690px;top:9px;" width="28" height="28" viewBox="0 0 28 28"><rect x="4.8" y="13" width="11.2" height="7.4" rx="1" fill="#eee"/><path d="M13.7 13 V9.7 A3.6 3.6 0 0 1 20.9 9.7 V12.6" fill="none" stroke="#eee" stroke-width="2.4"/></svg>
<div class="a" style="left:3720px;top:13.9px;width:19.6px;height:17.9px;background:#2196c4;border-radius:3px;"></div>
<div class="a" style="left:293.5px;top:43.7px;width:122.5px;height:52.3px;background:#1a1c1b;"></div>
<div class="a" style="left:158px;top:43.7px;width:1.5px;height:52.3px;background:#3a3d3b;"></div>
<div class="a" style="left:292.2px;top:43.7px;width:1.5px;height:52.3px;background:#3a3d3b;"></div>
<div class="a" style="left:415.5px;top:43.7px;width:1.5px;height:52.3px;background:#3a3d3b;"></div>
<div class="a" style="left:577.3px;top:43.7px;width:1.5px;height:52.3px;background:#3a3d3b;"></div>
<div class="a" style="left:735.7px;top:43.7px;width:1.5px;height:52.3px;background:#3a3d3b;"></div>
<div class="a" style="left:0px;top:96.7px;width:3749px;height:1.5px;background:#323734;"></div>
<svg class="a" style="left:10px;top:49.5px;" width="42" height="42" viewBox="0 0 42 42"><rect x="0.2" y="0.4" width="40.9" height="40.6" fill="#eef8f1"/><path d="M3 3.2 H20.4 A17.65 17.65 0 0 1 20.4 38.5 H3 Z" fill="#000"/><circle cx="21.1" cy="20.7" r="14.05" fill="none" stroke="#eef8f1" stroke-width="2.5"/><path d="M27.98 12.92 A9.7 9.7 0 1 0 31.36 19.0" fill="none" stroke="#eef8f1" stroke-width="2.5"/><rect x="22.7" y="17.3" width="12.3" height="2.8" fill="#eef8f1"/></svg>
<div class="t" style="left:60.5px;top:55.46px;font-size:28.6px;line-height:28.6px;color:#eef8f1;font-weight:bold;transform:scaleX(1.1421);transform-origin:0 0;">GGD</div>
<div class="t" style="left:187.5px;top:56.56px;font-size:28.6px;line-height:28.6px;color:#98a09a;transform:scaleX(0.9346);transform-origin:0 0;">Drums</div>
<div class="t" style="left:322px;top:56.56px;font-size:28.6px;line-height:28.6px;color:#f0f8f2;transform:scaleX(0.9527);transform-origin:0 0;">Mixer</div>
<div class="t" style="left:444.7px;top:56.56px;font-size:28.6px;line-height:28.6px;color:#98a09a;transform:scaleX(0.9689);transform-origin:0 0;">Mapping</div>
<div class="t" style="left:605.5px;top:56.56px;font-size:28.6px;line-height:28.6px;color:#98a09a;transform:scaleX(0.9557);transform-origin:0 0;">Grooves</div>
<div class="t m" style="left:3217.2px;top:62.38px;font-size:18.2px;line-height:18.2px;color:#8f958f;transform:scaleX(1.0836);transform-origin:52.6px 0;">Preset</div>
<div class="a" style="left:3282px;top:53.2px;width:311.6px;height:35.5px;background:#1c1e1d;border-radius:6px;"></div>
<div class="t m" style="left:3294.6px;top:62.54px;font-size:18.6px;line-height:18.6px;color:#eef3ef;transform:scaleX(1.0145);transform-origin:0 0;">Mix-Ready 'Nu Metal' C</div>
<svg class="a" style="left:3561px;top:57px;" width="28" height="28" viewBox="0 0 28 28"><path d="M9.5 6.2 H4.3 V22.5 H20.6 V17.3" fill="none" stroke="#eef3ef" stroke-width="2.1"/><path d="M11.6 15.2 L21.3 5.5 M14.5 5 H21.8 V12.3" fill="none" stroke="#eef3ef" stroke-width="2.1"/></svg>
<div class="a" style="left:3605.8px;top:53.2px;width:132.2px;height:35.5px;background:#1c1e1d;border-radius:6px;"></div>
<div class="t m" style="left:3618.5px;top:62.54px;font-size:18.6px;line-height:18.6px;color:#eef3ef;transform:scaleX(0.9670);transform-origin:0 0;">100%</div>
<svg class="a" style="left:3712.3px;top:63.5px;" width="16" height="14" viewBox="0 0 16 14"><path d="M3 4.6 L8 9.6 L13 4.6" fill="none" stroke="#8f958f" stroke-width="1.6"/></svg>
<div class="a" style="left:0px;top:964.8px;width:3749px;height:35.5px;background:#0b0c0b;"></div>
<div class="a" style="left:0px;top:966.2px;width:3749px;height:1.4px;background:#3a3d3b;"></div>
<div class="a" style="left:0px;top:969px;width:3749px;height:27.7px;background:#222423;"></div>
<div class="a" style="left:26.3px;top:969px;width:1.2px;height:27.7px;background:#131514;"></div>
<svg class="a" style="left:0px;top:969px;" width="26" height="28" viewBox="0 0 26 28"><path d="M14.3 8 L8.5 13.8 L14.3 19.6" fill="none" stroke="#8f958f" stroke-width="1.6"/></svg>
<div class="a" style="left:761.9px;top:969px;width:2805px;height:27.7px;background:#78817a;"></div>
<svg class="a" style="left:2140px;top:975px;" width="50" height="16" viewBox="0 0 50 16"><circle cx="6.4" cy="3.4" r="1.55" fill="#0a0a0a"/><circle cx="10.91" cy="3.4" r="1.55" fill="#0a0a0a"/><circle cx="15.42" cy="3.4" r="1.55" fill="#0a0a0a"/><circle cx="19.93" cy="3.4" r="1.55" fill="#0a0a0a"/><circle cx="24.44" cy="3.4" r="1.55" fill="#0a0a0a"/><circle cx="28.95" cy="3.4" r="1.55" fill="#0a0a0a"/><circle cx="33.46" cy="3.4" r="1.55" fill="#0a0a0a"/><circle cx="37.97" cy="3.4" r="1.55" fill="#0a0a0a"/><circle cx="42.48" cy="3.4" r="1.55" fill="#0a0a0a"/><circle cx="6.4" cy="7.91" r="1.55" fill="#0a0a0a"/><circle cx="10.91" cy="7.91" r="1.55" fill="#0a0a0a"/><circle cx="15.42" cy="7.91" r="1.55" fill="#0a0a0a"/><circle cx="19.93" cy="7.91" r="1.55" fill="#0a0a0a"/><circle cx="24.44" cy="7.91" r="1.55" fill="#0a0a0a"/><circle cx="28.95" cy="7.91" r="1.55" fill="#0a0a0a"/><circle cx="33.46" cy="7.91" r="1.55" fill="#0a0a0a"/><circle cx="37.97" cy="7.91" r="1.55" fill="#0a0a0a"/><circle cx="42.48" cy="7.91" r="1.55" fill="#0a0a0a"/><circle cx="6.4" cy="12.42" r="1.55" fill="#0a0a0a"/><circle cx="10.91" cy="12.42" r="1.55" fill="#0a0a0a"/><circle cx="15.42" cy="12.42" r="1.55" fill="#0a0a0a"/><circle cx="19.93" cy="12.42" r="1.55" fill="#0a0a0a"/><circle cx="24.44" cy="12.42" r="1.55" fill="#0a0a0a"/><circle cx="28.95" cy="12.42" r="1.55" fill="#0a0a0a"/><circle cx="33.46" cy="12.42" r="1.55" fill="#0a0a0a"/><circle cx="37.97" cy="12.42" r="1.55" fill="#0a0a0a"/><circle cx="42.48" cy="12.42" r="1.55" fill="#0a0a0a"/></svg>
<div class="a" style="left:3720.4px;top:969px;width:1.2px;height:27.7px;background:#131514;"></div>
<svg class="a" style="left:3722px;top:969px;" width="27" height="28" viewBox="0 0 27 28"><path d="M10.5 8 L16.3 13.8 L10.5 19.6" fill="none" stroke="#8f958f" stroke-width="1.6"/></svg>
<div class="a" style="left:0px;top:997.8px;width:3749px;height:2.2px;background:#3a3d3b;"></div>
<div class="a" style="left:0px;top:1000px;width:3749px;height:48px;background:#111312;"></div>
<div class="a" style="left:14.8px;top:1006.9px;width:36.2px;height:36px;background:#292b2a;border-radius:4px;"></div>
<svg class="a" style="left:14.8px;top:1006.9px;" width="36.2" height="36" viewBox="0 0 36.2 36"><path d="M10.2 9.1 L25.9 18 L10.2 27 Z" fill="#eef3ef"/></svg>
<div class="a" style="left:53.9px;top:1006.9px;width:36.1px;height:36px;background:#eef8f1;border-radius:4px;"></div>
<svg class="a" style="left:53.9px;top:1006.9px;" width="36.1" height="36" viewBox="0 0 36.1 36"><rect x="7.3" y="12" width="21.6" height="13.7" rx="6.8" fill="none" stroke="#111" stroke-width="2.3"/><circle cx="18.5" cy="12.2" r="2.5" fill="#111"/></svg>
<div class="t m" style="left:111.6px;top:1017.54px;font-size:18.6px;line-height:18.6px;color:#959b97;transform:scaleX(1.0022);transform-origin:0 0;">Speed</div>
<div class="a" style="left:180.3px;top:1007.3px;width:155.4px;height:35.8px;background:#0f1110;border-radius:7px;box-sizing:border-box;border:2px solid #858b87;"></div>
<div class="a" style="left:232.6px;top:1009.3px;width:52px;height:31.8px;background:#f0faf3;"></div>
<div class="a" style="left:231.6px;top:1009.3px;width:1.6px;height:31.8px;background:#858b87;"></div>
<div class="a" style="left:284.4px;top:1009.3px;width:1.6px;height:31.8px;background:#858b87;"></div>
<div class="t m" style="left:188.72px;top:1017.54px;font-size:18.6px;line-height:18.6px;color:#9aa09c;transform:scaleX(1.0240);transform-origin:17.58px 0;">0.5x</div>
<div class="t m" style="left:248.68px;top:1017.54px;font-size:18.6px;line-height:18.6px;color:#111;transform:scaleX(0.8654);transform-origin:9.82px 0;">1x</div>
<div class="t m" style="left:300.38px;top:1017.54px;font-size:18.6px;line-height:18.6px;color:#9aa09c;transform:scaleX(0.9672);transform-origin:9.82px 0;">2x</div>
<div class="a" style="left:1542.4px;top:1002.7px;width:663.4px;height:52px;background:#242625;border-radius:7px;box-sizing:border-box;border:1.5px solid #555b57;"></div>
<svg class="a" style="left:1542px;top:1005px;" width="24" height="40" viewBox="0 0 24 40"><circle cx="7.5" cy="4.9" r="1.55" fill="#8a908c"/><circle cx="12" cy="4.9" r="1.55" fill="#8a908c"/><circle cx="16.5" cy="4.9" r="1.55" fill="#8a908c"/><circle cx="7.5" cy="9.4" r="1.55" fill="#8a908c"/><circle cx="12" cy="9.4" r="1.55" fill="#8a908c"/><circle cx="16.5" cy="9.4" r="1.55" fill="#8a908c"/><circle cx="7.5" cy="13.9" r="1.55" fill="#8a908c"/><circle cx="12" cy="13.9" r="1.55" fill="#8a908c"/><circle cx="16.5" cy="13.9" r="1.55" fill="#8a908c"/><circle cx="7.5" cy="18.4" r="1.55" fill="#8a908c"/><circle cx="12" cy="18.4" r="1.55" fill="#8a908c"/><circle cx="16.5" cy="18.4" r="1.55" fill="#8a908c"/><circle cx="7.5" cy="22.9" r="1.55" fill="#8a908c"/><circle cx="12" cy="22.9" r="1.55" fill="#8a908c"/><circle cx="16.5" cy="22.9" r="1.55" fill="#8a908c"/><circle cx="7.5" cy="27.4" r="1.55" fill="#8a908c"/><circle cx="12" cy="27.4" r="1.55" fill="#8a908c"/><circle cx="16.5" cy="27.4" r="1.55" fill="#8a908c"/><circle cx="7.5" cy="31.9" r="1.55" fill="#8a908c"/><circle cx="12" cy="31.9" r="1.55" fill="#8a908c"/><circle cx="16.5" cy="31.9" r="1.55" fill="#8a908c"/><circle cx="7.5" cy="36.4" r="1.55" fill="#8a908c"/><circle cx="12" cy="36.4" r="1.55" fill="#8a908c"/><circle cx="16.5" cy="36.4" r="1.55" fill="#8a908c"/></svg>
<svg class="a" style="left:2181px;top:1005px;" width="24" height="40" viewBox="0 0 24 40"><circle cx="7.5" cy="4.9" r="1.55" fill="#8a908c"/><circle cx="12" cy="4.9" r="1.55" fill="#8a908c"/><circle cx="16.5" cy="4.9" r="1.55" fill="#8a908c"/><circle cx="7.5" cy="9.4" r="1.55" fill="#8a908c"/><circle cx="12" cy="9.4" r="1.55" fill="#8a908c"/><circle cx="16.5" cy="9.4" r="1.55" fill="#8a908c"/><circle cx="7.5" cy="13.9" r="1.55" fill="#8a908c"/><circle cx="12" cy="13.9" r="1.55" fill="#8a908c"/><circle cx="16.5" cy="13.9" r="1.55" fill="#8a908c"/><circle cx="7.5" cy="18.4" r="1.55" fill="#8a908c"/><circle cx="12" cy="18.4" r="1.55" fill="#8a908c"/><circle cx="16.5" cy="18.4" r="1.55" fill="#8a908c"/><circle cx="7.5" cy="22.9" r="1.55" fill="#8a908c"/><circle cx="12" cy="22.9" r="1.55" fill="#8a908c"/><circle cx="16.5" cy="22.9" r="1.55" fill="#8a908c"/><circle cx="7.5" cy="27.4" r="1.55" fill="#8a908c"/><circle cx="12" cy="27.4" r="1.55" fill="#8a908c"/><circle cx="16.5" cy="27.4" r="1.55" fill="#8a908c"/><circle cx="7.5" cy="31.9" r="1.55" fill="#8a908c"/><circle cx="12" cy="31.9" r="1.55" fill="#8a908c"/><circle cx="16.5" cy="31.9" r="1.55" fill="#8a908c"/><circle cx="7.5" cy="36.4" r="1.55" fill="#8a908c"/><circle cx="12" cy="36.4" r="1.55" fill="#8a908c"/><circle cx="16.5" cy="36.4" r="1.55" fill="#8a908c"/></svg>
<div class="t m" style="left:1564.76px;top:1008.77px;font-size:15.5px;line-height:15.5px;color:#646a66;transform:scaleX(0.9088);transform-origin:22.39px 0;">DRAG</div>
<div class="t m" style="left:1570.54px;top:1027.67px;font-size:15.5px;line-height:15.5px;color:#646a66;transform:scaleX(0.9230);transform-origin:16.36px 0;">MIDI</div>
<div class="t m" style="left:2137.76px;top:1008.77px;font-size:15.5px;line-height:15.5px;color:#646a66;transform:scaleX(0.9044);transform-origin:22.39px 0;">DRAG</div>
<div class="t m" style="left:2143.59px;top:1027.67px;font-size:15.5px;line-height:15.5px;color:#646a66;transform:scaleX(0.9139);transform-origin:16.36px 0;">MIDI</div>
<div class="t m" style="left:1714.8px;top:1017.75px;font-size:18px;line-height:18px;color:#9aa09c;transform:scaleX(1.0273);transform-origin:0 0;">M&amp;M2 Basic Beats</div>
<div class="t m" style="left:1877.9px;top:1017.75px;font-size:18px;line-height:18px;color:#f0f8f2;transform:scaleX(1.0172);transform-origin:0 0;">Song 01 - Verse A</div>
</body></html>
